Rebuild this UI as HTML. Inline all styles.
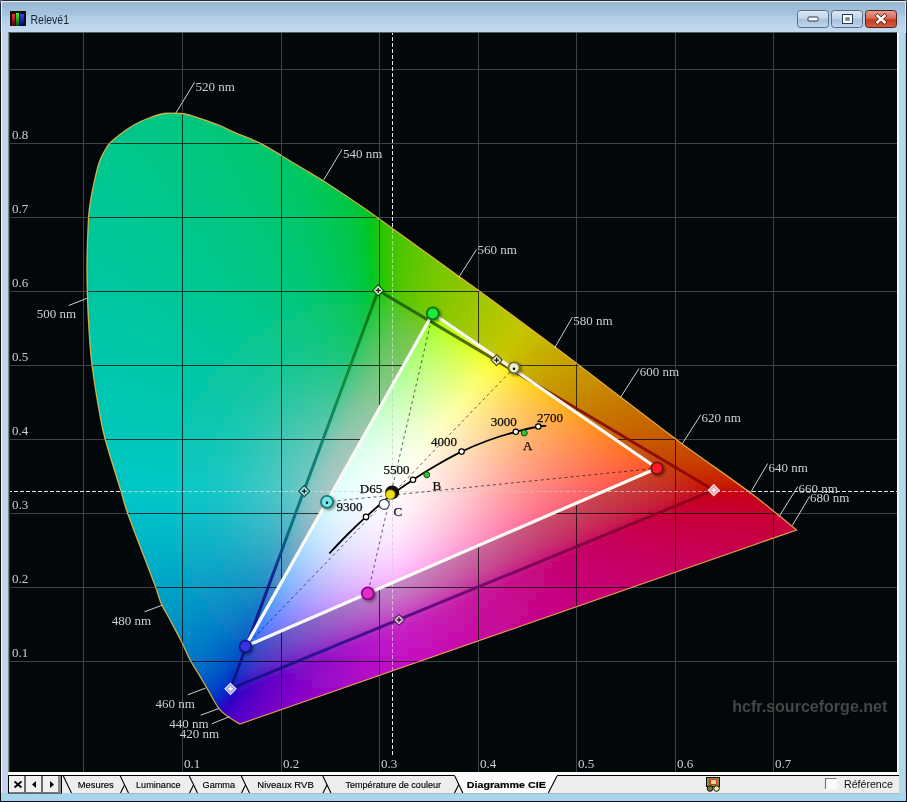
<!DOCTYPE html>
<html><head><meta charset="utf-8"><style>
html,body{margin:0;padding:0;width:907px;height:802px;overflow:hidden;background:#b8d4ea}
svg{display:block;will-change:transform}
</style></head><body>
<svg width="907" height="802" viewBox="0 0 907 802">
<defs>
<clipPath id="hs"><path d="M240.0 724.0C238.2 722.9 232.9 720.1 229.4 717.5C225.9 714.9 222.5 713.1 218.8 708.3C215.1 703.5 210.4 694.1 207.2 688.6C203.9 683.1 202.1 679.8 199.3 675.1C196.5 670.4 193.4 666.1 190.4 660.5C187.4 654.9 184.8 648.2 181.4 641.5C178.0 634.8 173.6 626.6 170.2 620.2C166.8 613.9 163.6 608.9 161.2 603.4C158.8 597.9 158.2 594.3 155.6 587.1C152.9 579.9 150.0 572.4 145.3 560.0C140.6 547.6 131.6 524.6 127.5 513.0C123.4 501.4 124.5 502.9 120.8 490.6C117.1 478.3 108.7 452.4 105.1 439.0C101.5 425.6 101.2 422.3 99.0 410.0C96.8 397.7 93.7 378.3 92.0 365.0C90.3 351.7 89.8 342.2 89.0 330.0C88.2 317.8 87.6 303.7 87.3 292.0C87.0 280.3 86.8 272.0 87.0 260.0C87.2 248.0 87.9 229.3 88.4 220.0C88.9 210.7 89.1 210.2 90.0 204.0C90.9 197.8 92.5 189.6 94.0 182.8C95.5 176.0 97.3 168.1 99.0 163.0C100.7 157.9 102.2 155.3 104.0 152.0C105.8 148.7 107.0 146.2 110.0 143.0C113.0 139.8 117.9 136.0 121.9 133.0C125.9 130.0 129.4 127.5 133.9 125.0C138.4 122.5 143.8 119.9 148.8 118.0C153.8 116.1 159.8 114.3 163.8 113.5C167.8 112.7 169.5 113.1 173.0 113.2C176.5 113.3 180.8 113.2 185.0 114.0C189.2 114.8 192.8 116.1 198.1 117.8C203.4 119.5 210.7 121.9 216.9 124.4C223.2 126.9 228.4 129.7 235.6 132.8C242.8 135.9 252.2 139.2 260.0 143.1C267.8 147.0 275.6 152.1 282.5 156.2C289.4 160.3 294.5 163.4 301.2 167.5C307.9 171.6 316.3 176.5 322.8 180.6C329.3 184.7 330.7 185.5 340.0 191.8C349.3 198.1 359.0 204.4 378.8 218.5C398.6 232.6 442.3 264.5 458.8 276.4C475.3 288.3 462.0 278.2 478.0 290.0C494.0 301.8 531.2 329.2 555.0 347.0C578.8 364.8 599.3 380.9 620.5 397.0C641.7 413.1 660.1 427.6 682.0 443.7C703.9 459.8 732.6 479.4 751.7 493.8C770.8 508.2 789.0 524.0 796.5 530.0Z"/></clipPath>
<clipPath id="tri"><path d="M432.8 313.5L657.0 468.2L245.4 646.4Z"/></clipPath>
<filter id="bl" x="-5%" y="-5%" width="110%" height="110%"><feGaussianBlur stdDeviation="5"/></filter>
<filter id="sh" x="-50%" y="-50%" width="200%" height="200%"><feGaussianBlur stdDeviation="1.5"/></filter>
<linearGradient id="tbg" x1="0" y1="0" x2="0" y2="1"><stop offset="0.1" stop-color="#98b8d4"/><stop offset="0.45" stop-color="#a6c4e0"/><stop offset="0.5" stop-color="#b0cce6"/><stop offset="0.9" stop-color="#c2d8ee"/></linearGradient>
<linearGradient id="bb" x1="0" y1="0" x2="0" y2="1"><stop offset="0" stop-color="#dde8f4"/><stop offset="0.45" stop-color="#c4d6ea"/><stop offset="0.55" stop-color="#a8c0dc"/><stop offset="1" stop-color="#c0d8ee"/></linearGradient>
<linearGradient id="rb" x1="0" y1="0" x2="0" y2="1"><stop offset="0" stop-color="#eaa090"/><stop offset="0.45" stop-color="#d86a58"/><stop offset="0.55" stop-color="#c23a22"/><stop offset="1" stop-color="#d86040"/></linearGradient>
<linearGradient id="ir" x1="0" y1="0" x2="0" y2="1"><stop offset="0" stop-color="#ff3030"/><stop offset="1" stop-color="#500000"/></linearGradient>
<linearGradient id="ig" x1="0" y1="0" x2="0" y2="1"><stop offset="0" stop-color="#30ff30"/><stop offset="1" stop-color="#005000"/></linearGradient>
<linearGradient id="ib" x1="0" y1="0" x2="0" y2="1"><stop offset="0" stop-color="#4040ff"/><stop offset="1" stop-color="#000060"/></linearGradient>
<linearGradient id="lgr" gradientUnits="userSpaceOnUse" x1="378.2" y1="290.4" x2="713.8" y2="490.2"><stop offset="0" stop-color="#0a6a0a"/><stop offset="0.3" stop-color="#4a5a00"/><stop offset="0.5" stop-color="#801800"/><stop offset="0.7" stop-color="#8a0808"/><stop offset="1" stop-color="#900010"/></linearGradient><linearGradient id="lbg" gradientUnits="userSpaceOnUse" x1="230.5" y1="688.8" x2="378.2" y2="290.4"><stop offset="0" stop-color="#0e0e84"/><stop offset="0.28" stop-color="#14148e"/><stop offset="0.4" stop-color="#006a7a"/><stop offset="0.6" stop-color="#087a70"/><stop offset="0.78" stop-color="#0a8a30"/><stop offset="1" stop-color="#0a6a0a"/></linearGradient><linearGradient id="lrb" gradientUnits="userSpaceOnUse" x1="713.8" y1="490.2" x2="230.5" y2="688.8"><stop offset="0" stop-color="#900010"/><stop offset="0.5" stop-color="#700070"/><stop offset="0.8" stop-color="#24108a"/><stop offset="1" stop-color="#0e0e84"/></linearGradient>
</defs>
<rect x="0" y="0" width="907" height="33" fill="url(#tbg)"/>
<rect x="0" y="0" width="907" height="1" fill="#1c2834"/>
<rect x="0" y="1" width="907" height="1" fill="#e6f2fa"/>
<rect x="0" y="2" width="907" height="1" fill="#a4b8c8"/>
<rect x="0" y="3" width="907" height="1" fill="#9cb6cc"/>
<rect x="10" y="32" width="887" height="1" fill="#56606a"/>
<rect x="0" y="0" width="1" height="802" fill="#1a2838"/><rect x="1" y="1" width="1" height="32" fill="#e8f4fc"/><rect x="906" y="0" width="1" height="802" fill="#1a2838"/><rect x="905" y="1" width="1" height="32" fill="#dceaf6"/>
<rect x="0" y="32" width="1" height="769" fill="#0c1014"/>
<rect x="1" y="32" width="1" height="769" fill="#eef8f8"/>
<rect x="2" y="32" width="1" height="769" fill="#c8d4e0"/>
<rect x="3" y="32" width="1" height="769" fill="#c8d4e0"/>
<rect x="4" y="32" width="1" height="769" fill="#c4d4f0"/>
<rect x="5" y="32" width="1" height="769" fill="#c4d4f0"/>
<rect x="6" y="32" width="1" height="769" fill="#c4d4f0"/>
<rect x="7" y="32" width="1" height="769" fill="#c0d0ea"/>
<rect x="8" y="32" width="1" height="769" fill="#7a8a8a"/>
<rect x="9" y="32" width="1" height="769" fill="#2a3434"/>
<rect x="897" y="33" width="1" height="768" fill="#f4fcfc"/>
<rect x="898" y="33" width="1" height="768" fill="#e8f4f8"/>
<rect x="899" y="33" width="1" height="768" fill="#c4d4e0"/>
<rect x="900" y="33" width="1" height="768" fill="#b4d8ec"/>
<rect x="901" y="33" width="1" height="768" fill="#b4d8ec"/>
<rect x="902" y="33" width="1" height="768" fill="#b4d8ec"/>
<rect x="903" y="33" width="1" height="768" fill="#b4d8ec"/>
<rect x="904" y="33" width="1" height="768" fill="#b4d8ec"/>
<rect x="905" y="33" width="1" height="768" fill="#9cc0d8"/>
<rect x="906" y="33" width="1" height="768" fill="#000820"/>
<rect x="1" y="793" width="905" height="8" fill="#a8d4ec"/>
<rect x="0" y="801" width="907" height="1" fill="#0c1420"/>
<path d="M0 0H5Q0 0 0 5Z" fill="#5a6470"/><path d="M907 0H902Q907 0 907 5Z" fill="#5a6470"/>
<rect x="10" y="11" width="16" height="15" fill="#101010"/>
<rect x="12" y="14" width="3" height="12" fill="url(#ir)"/><rect x="16" y="13" width="3" height="13" fill="url(#ig)"/><rect x="20" y="14" width="4" height="12" fill="url(#ib)"/>
<text x="30.5" y="24" font-family="Liberation Sans" font-size="12" fill="#1a2430" textLength="38.5" lengthAdjust="spacingAndGlyphs">Relevé1</text>
<rect x="797.5" y="10.5" width="31" height="17" rx="3" fill="url(#bb)" stroke="#5a6c84" stroke-width="1"/>
<rect x="831.5" y="10.5" width="31" height="17" rx="3" fill="url(#bb)" stroke="#5a6c84" stroke-width="1"/>
<rect x="865.5" y="10.5" width="31" height="17" rx="3" fill="url(#rb)" stroke="#4a2420" stroke-width="1"/>
<rect x="808" y="17" width="10" height="4" rx="1" fill="#fff" stroke="#2a3a50" stroke-width="1"/>
<rect x="842.5" y="14.5" width="10" height="9" fill="none" stroke="#2a3a50" stroke-width="1"/><rect x="844" y="16" width="7" height="6" fill="none" stroke="#fff" stroke-width="2"/><rect x="845.5" y="17.5" width="4" height="3" fill="#6a7a90"/>
<path d="M876 14.5L886 23.5M886 14.5L876 23.5" stroke="#5a2018" stroke-width="4"/><path d="M876.5 15L885.5 23M885.5 15L876.5 23" stroke="#fff" stroke-width="2.4"/>
<rect x="10" y="33" width="887" height="739" fill="#02070a"/>
<rect x="83" y="33" width="1" height="739" fill="#3c4245"/>
<rect x="182" y="33" width="1" height="739" fill="#3c4245"/>
<rect x="281" y="33" width="1" height="739" fill="#3c4245"/>
<rect x="379" y="33" width="1" height="739" fill="#3c4245"/>
<rect x="478" y="33" width="1" height="739" fill="#3c4245"/>
<rect x="576" y="33" width="1" height="739" fill="#3c4245"/>
<rect x="675" y="33" width="1" height="739" fill="#3c4245"/>
<rect x="773" y="33" width="1" height="739" fill="#3c4245"/>
<rect x="10" y="661" width="887" height="1" fill="#3c4245"/>
<rect x="10" y="587" width="887" height="1" fill="#3c4245"/>
<rect x="10" y="513" width="887" height="1" fill="#3c4245"/>
<rect x="10" y="439" width="887" height="1" fill="#3c4245"/>
<rect x="10" y="365" width="887" height="1" fill="#3c4245"/>
<rect x="10" y="291" width="887" height="1" fill="#3c4245"/>
<rect x="10" y="217" width="887" height="1" fill="#3c4245"/>
<rect x="10" y="143" width="887" height="1" fill="#3c4245"/>
<rect x="10" y="69" width="887" height="1" fill="#3c4245"/>
<text x="732.3" y="711.5" font-family="Liberation Sans" font-size="16" fill="#464646" font-weight="bold" textLength="155" lengthAdjust="spacingAndGlyphs">hcfr.sourceforge.net</text>
<rect x="773" y="690" width="1" height="30" fill="#3c4245" fill-opacity="0.7"/>
<path d="M392.5 33V772M10 491.5H897" stroke="#e8e8e8" stroke-width="1" stroke-dasharray="4 2" stroke-dashoffset="2"/>
<g clip-path="url(#hs)"><g filter="url(#bl)"><g transform="translate(0 104)"><rect x="144" width="8" height="8" fill="#00c784"/><rect x="152" width="8" height="8" fill="#00c782"/><rect x="160" width="8" height="8" fill="#00c781"/><rect x="168" width="8" height="8" fill="#00c780"/><rect x="176" width="8" height="8" fill="#00c77e"/><rect x="184" width="8" height="8" fill="#00c77c"/><rect x="192" width="8" height="8" fill="#00c77b"/></g><g transform="translate(0 112)"><rect x="128" width="8" height="8" fill="#00c787"/><rect x="136" width="8" height="8" fill="#00c786"/><rect x="144" width="8" height="8" fill="#00c785"/><rect x="152" width="8" height="8" fill="#00c783"/><rect x="160" width="8" height="8" fill="#00c782"/><rect x="168" width="8" height="8" fill="#00c780"/><rect x="176" width="8" height="8" fill="#00c77f"/><rect x="184" width="8" height="8" fill="#00c77d"/><rect x="192" width="8" height="8" fill="#00c77c"/><rect x="200" width="8" height="8" fill="#00c77a"/><rect x="208" width="8" height="8" fill="#00c778"/><rect x="216" width="8" height="8" fill="#00c776"/></g><g transform="translate(0 120)"><rect x="120" width="8" height="8" fill="#00c789"/><rect x="128" width="8" height="8" fill="#00c788"/><rect x="136" width="8" height="8" fill="#00c787"/><rect x="144" width="8" height="8" fill="#00c785"/><rect x="152" width="8" height="8" fill="#00c784"/><rect x="160" width="8" height="8" fill="#00c783"/><rect x="168" width="8" height="8" fill="#00c781"/><rect x="176" width="8" height="8" fill="#00c780"/><rect x="184" width="8" height="8" fill="#00c77e"/><rect x="192" width="8" height="8" fill="#00c77d"/><rect x="200" width="8" height="8" fill="#00c77b"/><rect x="208" width="8" height="8" fill="#00c779"/><rect x="216" width="8" height="8" fill="#00c777"/><rect x="224" width="8" height="8" fill="#00c775"/><rect x="232" width="8" height="8" fill="#00c773"/></g><g transform="translate(0 128)"><rect x="104" width="8" height="8" fill="#00c78c"/><rect x="112" width="8" height="8" fill="#00c78b"/><rect x="120" width="8" height="8" fill="#00c78a"/><rect x="128" width="8" height="8" fill="#00c789"/><rect x="136" width="8" height="8" fill="#00c788"/><rect x="144" width="8" height="8" fill="#00c786"/><rect x="152" width="8" height="8" fill="#00c785"/><rect x="160" width="8" height="8" fill="#00c784"/><rect x="168" width="8" height="8" fill="#00c782"/><rect x="176" width="8" height="8" fill="#00c781"/><rect x="184" width="8" height="8" fill="#00c77f"/><rect x="192" width="8" height="8" fill="#00c77d"/><rect x="200" width="8" height="8" fill="#00c77c"/><rect x="208" width="8" height="8" fill="#00c77a"/><rect x="216" width="8" height="8" fill="#00c778"/><rect x="224" width="8" height="8" fill="#00c776"/><rect x="232" width="8" height="8" fill="#00c774"/><rect x="240" width="8" height="8" fill="#00c771"/><rect x="248" width="8" height="8" fill="#00c76f"/></g><g transform="translate(0 136)"><rect x="96" width="8" height="8" fill="#00c78e"/><rect x="104" width="8" height="8" fill="#00c78d"/><rect x="112" width="8" height="8" fill="#00c78c"/><rect x="120" width="8" height="8" fill="#00c78b"/><rect x="128" width="8" height="8" fill="#00c78a"/><rect x="136" width="8" height="8" fill="#00c788"/><rect x="144" width="8" height="8" fill="#00c787"/><rect x="152" width="8" height="8" fill="#00c786"/><rect x="160" width="8" height="8" fill="#00c785"/><rect x="168" width="8" height="8" fill="#00c783"/><rect x="176" width="8" height="8" fill="#00c782"/><rect x="184" width="8" height="8" fill="#00c780"/><rect x="192" width="8" height="8" fill="#00c77e"/><rect x="200" width="8" height="8" fill="#00c77d"/><rect x="208" width="8" height="8" fill="#00c77b"/><rect x="216" width="8" height="8" fill="#00c779"/><rect x="224" width="8" height="8" fill="#00c777"/><rect x="232" width="8" height="8" fill="#00c775"/><rect x="240" width="8" height="8" fill="#00c772"/><rect x="248" width="8" height="8" fill="#00c770"/><rect x="256" width="8" height="8" fill="#00c76d"/><rect x="264" width="8" height="8" fill="#00c76b"/></g><g transform="translate(0 144)"><rect x="96" width="8" height="8" fill="#00c78f"/><rect x="104" width="8" height="8" fill="#00c78e"/><rect x="112" width="8" height="8" fill="#00c78d"/><rect x="120" width="8" height="8" fill="#00c78c"/><rect x="128" width="8" height="8" fill="#00c78a"/><rect x="136" width="8" height="8" fill="#00c789"/><rect x="144" width="8" height="8" fill="#00c788"/><rect x="152" width="8" height="8" fill="#00c787"/><rect x="160" width="8" height="8" fill="#00c785"/><rect x="168" width="8" height="8" fill="#00c784"/><rect x="176" width="8" height="8" fill="#00c783"/><rect x="184" width="8" height="8" fill="#00c781"/><rect x="192" width="8" height="8" fill="#00c77f"/><rect x="200" width="8" height="8" fill="#00c77e"/><rect x="208" width="8" height="8" fill="#00c77c"/><rect x="216" width="8" height="8" fill="#00c77a"/><rect x="224" width="8" height="8" fill="#00c778"/><rect x="232" width="8" height="8" fill="#00c776"/><rect x="240" width="8" height="8" fill="#00c773"/><rect x="248" width="8" height="8" fill="#00c771"/><rect x="256" width="8" height="8" fill="#00c76e"/><rect x="264" width="8" height="8" fill="#00c76c"/><rect x="272" width="8" height="8" fill="#00c769"/><rect x="280" width="8" height="8" fill="#00c765"/></g><g transform="translate(0 152)"><rect x="88" width="8" height="8" fill="#00c791"/><rect x="96" width="8" height="8" fill="#00c790"/><rect x="104" width="8" height="8" fill="#00c78f"/><rect x="112" width="8" height="8" fill="#00c78e"/><rect x="120" width="8" height="8" fill="#00c78d"/><rect x="128" width="8" height="8" fill="#00c78b"/><rect x="136" width="8" height="8" fill="#00c78a"/><rect x="144" width="8" height="8" fill="#00c789"/><rect x="152" width="8" height="8" fill="#00c788"/><rect x="160" width="8" height="8" fill="#00c786"/><rect x="168" width="8" height="8" fill="#00c785"/><rect x="176" width="8" height="8" fill="#00c783"/><rect x="184" width="8" height="8" fill="#00c782"/><rect x="192" width="8" height="8" fill="#00c780"/><rect x="200" width="8" height="8" fill="#00c77f"/><rect x="208" width="8" height="8" fill="#00c77d"/><rect x="216" width="8" height="8" fill="#00c77b"/><rect x="224" width="8" height="8" fill="#00c779"/><rect x="232" width="8" height="8" fill="#00c777"/><rect x="240" width="8" height="8" fill="#00c774"/><rect x="248" width="8" height="8" fill="#00c772"/><rect x="256" width="8" height="8" fill="#00c76f"/><rect x="264" width="8" height="8" fill="#00c76d"/><rect x="272" width="8" height="8" fill="#00c76a"/><rect x="280" width="8" height="8" fill="#00c766"/><rect x="288" width="8" height="8" fill="#00c763"/><rect x="296" width="8" height="8" fill="#00c75f"/></g><g transform="translate(0 160)"><rect x="88" width="8" height="8" fill="#00c791"/><rect x="96" width="8" height="8" fill="#00c791"/><rect x="104" width="8" height="8" fill="#00c790"/><rect x="112" width="8" height="8" fill="#00c78e"/><rect x="120" width="8" height="8" fill="#00c78d"/><rect x="128" width="8" height="8" fill="#00c78c"/><rect x="136" width="8" height="8" fill="#00c78b"/><rect x="144" width="8" height="8" fill="#00c78a"/><rect x="152" width="8" height="8" fill="#00c789"/><rect x="160" width="8" height="8" fill="#00c787"/><rect x="168" width="8" height="8" fill="#00c786"/><rect x="176" width="8" height="8" fill="#00c784"/><rect x="184" width="8" height="8" fill="#00c783"/><rect x="192" width="8" height="8" fill="#00c781"/><rect x="200" width="8" height="8" fill="#00c780"/><rect x="208" width="8" height="8" fill="#00c77e"/><rect x="216" width="8" height="8" fill="#00c77c"/><rect x="224" width="8" height="8" fill="#00c77a"/><rect x="232" width="8" height="8" fill="#00c778"/><rect x="240" width="8" height="8" fill="#00c775"/><rect x="248" width="8" height="8" fill="#00c773"/><rect x="256" width="8" height="8" fill="#00c770"/><rect x="264" width="8" height="8" fill="#00c76e"/><rect x="272" width="8" height="8" fill="#00c76b"/><rect x="280" width="8" height="8" fill="#00c768"/><rect x="288" width="8" height="8" fill="#00c764"/><rect x="296" width="8" height="8" fill="#00c760"/><rect x="304" width="8" height="8" fill="#00c75c"/></g><g transform="translate(0 168)"><rect x="88" width="8" height="8" fill="#00c792"/><rect x="96" width="8" height="8" fill="#00c791"/><rect x="104" width="8" height="8" fill="#00c790"/><rect x="112" width="8" height="8" fill="#00c78f"/><rect x="120" width="8" height="8" fill="#00c78e"/><rect x="128" width="8" height="8" fill="#00c78d"/><rect x="136" width="8" height="8" fill="#00c78c"/><rect x="144" width="8" height="8" fill="#00c78b"/><rect x="152" width="8" height="8" fill="#00c78a"/><rect x="160" width="8" height="8" fill="#00c788"/><rect x="168" width="8" height="8" fill="#00c787"/><rect x="176" width="8" height="8" fill="#00c785"/><rect x="184" width="8" height="8" fill="#00c784"/><rect x="192" width="8" height="8" fill="#00c782"/><rect x="200" width="8" height="8" fill="#00c781"/><rect x="208" width="8" height="8" fill="#00c77f"/><rect x="216" width="8" height="8" fill="#00c77d"/><rect x="224" width="8" height="8" fill="#00c77b"/><rect x="232" width="8" height="8" fill="#00c779"/><rect x="240" width="8" height="8" fill="#00c777"/><rect x="248" width="8" height="8" fill="#00c774"/><rect x="256" width="8" height="8" fill="#00c772"/><rect x="264" width="8" height="8" fill="#00c76f"/><rect x="272" width="8" height="8" fill="#00c76c"/><rect x="280" width="8" height="8" fill="#00c769"/><rect x="288" width="8" height="8" fill="#00c765"/><rect x="296" width="8" height="8" fill="#00c761"/><rect x="304" width="8" height="8" fill="#00c75d"/><rect x="312" width="8" height="8" fill="#00c758"/><rect x="320" width="8" height="8" fill="#00c753"/></g><g transform="translate(0 176)"><rect x="88" width="8" height="8" fill="#00c793"/><rect x="96" width="8" height="8" fill="#00c792"/><rect x="104" width="8" height="8" fill="#00c791"/><rect x="112" width="8" height="8" fill="#00c790"/><rect x="120" width="8" height="8" fill="#00c78f"/><rect x="128" width="8" height="8" fill="#00c78e"/><rect x="136" width="8" height="8" fill="#00c78d"/><rect x="144" width="8" height="8" fill="#00c78c"/><rect x="152" width="8" height="8" fill="#00c78b"/><rect x="160" width="8" height="8" fill="#00c789"/><rect x="168" width="8" height="8" fill="#00c788"/><rect x="176" width="8" height="8" fill="#00c786"/><rect x="184" width="8" height="8" fill="#00c785"/><rect x="192" width="8" height="8" fill="#00c783"/><rect x="200" width="8" height="8" fill="#00c782"/><rect x="208" width="8" height="8" fill="#00c780"/><rect x="216" width="8" height="8" fill="#00c77e"/><rect x="224" width="8" height="8" fill="#00c77c"/><rect x="232" width="8" height="8" fill="#00c77a"/><rect x="240" width="8" height="8" fill="#00c778"/><rect x="248" width="8" height="8" fill="#00c775"/><rect x="256" width="8" height="8" fill="#00c773"/><rect x="264" width="8" height="8" fill="#00c770"/><rect x="272" width="8" height="8" fill="#00c76d"/><rect x="280" width="8" height="8" fill="#00c76a"/><rect x="288" width="8" height="8" fill="#00c766"/><rect x="296" width="8" height="8" fill="#00c762"/><rect x="304" width="8" height="8" fill="#00c75e"/><rect x="312" width="8" height="8" fill="#00c75a"/><rect x="320" width="8" height="8" fill="#00c754"/><rect x="328" width="8" height="8" fill="#00c74e"/><rect x="336" width="8" height="8" fill="#00c747"/></g><g transform="translate(0 184)"><rect x="80" width="8" height="8" fill="#00c795"/><rect x="88" width="8" height="8" fill="#00c794"/><rect x="96" width="8" height="8" fill="#00c793"/><rect x="104" width="8" height="8" fill="#00c792"/><rect x="112" width="8" height="8" fill="#00c791"/><rect x="120" width="8" height="8" fill="#00c790"/><rect x="128" width="8" height="8" fill="#00c78f"/><rect x="136" width="8" height="8" fill="#00c78e"/><rect x="144" width="8" height="8" fill="#00c78d"/><rect x="152" width="8" height="8" fill="#00c78b"/><rect x="160" width="8" height="8" fill="#00c78a"/><rect x="168" width="8" height="8" fill="#00c789"/><rect x="176" width="8" height="8" fill="#00c787"/><rect x="184" width="8" height="8" fill="#00c786"/><rect x="192" width="8" height="8" fill="#00c784"/><rect x="200" width="8" height="8" fill="#00c783"/><rect x="208" width="8" height="8" fill="#00c781"/><rect x="216" width="8" height="8" fill="#00c77f"/><rect x="224" width="8" height="8" fill="#00c77d"/><rect x="232" width="8" height="8" fill="#00c77b"/><rect x="240" width="8" height="8" fill="#00c779"/><rect x="248" width="8" height="8" fill="#00c776"/><rect x="256" width="8" height="8" fill="#00c774"/><rect x="264" width="8" height="8" fill="#00c771"/><rect x="272" width="8" height="8" fill="#00c76e"/><rect x="280" width="8" height="8" fill="#00c76b"/><rect x="288" width="8" height="8" fill="#00c767"/><rect x="296" width="8" height="8" fill="#00c764"/><rect x="304" width="8" height="8" fill="#00c75f"/><rect x="312" width="8" height="8" fill="#00c75b"/><rect x="320" width="8" height="8" fill="#00c755"/><rect x="328" width="8" height="8" fill="#00c74f"/><rect x="336" width="8" height="8" fill="#00c748"/><rect x="344" width="8" height="8" fill="#00c740"/></g><g transform="translate(0 192)"><rect x="80" width="8" height="8" fill="#00c796"/><rect x="88" width="8" height="8" fill="#00c795"/><rect x="96" width="8" height="8" fill="#00c794"/><rect x="104" width="8" height="8" fill="#00c793"/><rect x="112" width="8" height="8" fill="#00c792"/><rect x="120" width="8" height="8" fill="#00c791"/><rect x="128" width="8" height="8" fill="#00c790"/><rect x="136" width="8" height="8" fill="#00c78f"/><rect x="144" width="8" height="8" fill="#00c78e"/><rect x="152" width="8" height="8" fill="#00c78c"/><rect x="160" width="8" height="8" fill="#00c78b"/><rect x="168" width="8" height="8" fill="#00c78a"/><rect x="176" width="8" height="8" fill="#00c788"/><rect x="184" width="8" height="8" fill="#00c787"/><rect x="192" width="8" height="8" fill="#00c785"/><rect x="200" width="8" height="8" fill="#00c784"/><rect x="208" width="8" height="8" fill="#00c782"/><rect x="216" width="8" height="8" fill="#00c780"/><rect x="224" width="8" height="8" fill="#00c77e"/><rect x="232" width="8" height="8" fill="#00c77c"/><rect x="240" width="8" height="8" fill="#00c77a"/><rect x="248" width="8" height="8" fill="#00c778"/><rect x="256" width="8" height="8" fill="#00c775"/><rect x="264" width="8" height="8" fill="#00c772"/><rect x="272" width="8" height="8" fill="#00c76f"/><rect x="280" width="8" height="8" fill="#00c76c"/><rect x="288" width="8" height="8" fill="#00c769"/><rect x="296" width="8" height="8" fill="#00c765"/><rect x="304" width="8" height="8" fill="#00c761"/><rect x="312" width="8" height="8" fill="#00c75c"/><rect x="320" width="8" height="8" fill="#00c757"/><rect x="328" width="8" height="8" fill="#00c751"/><rect x="336" width="8" height="8" fill="#00c74a"/><rect x="344" width="8" height="8" fill="#00c741"/><rect x="352" width="8" height="8" fill="#00c737"/></g><g transform="translate(0 200)"><rect x="80" width="8" height="8" fill="#00c797"/><rect x="88" width="8" height="8" fill="#00c796"/><rect x="96" width="8" height="8" fill="#00c795"/><rect x="104" width="8" height="8" fill="#00c794"/><rect x="112" width="8" height="8" fill="#00c793"/><rect x="120" width="8" height="8" fill="#00c792"/><rect x="128" width="8" height="8" fill="#00c791"/><rect x="136" width="8" height="8" fill="#00c790"/><rect x="144" width="8" height="8" fill="#00c78f"/><rect x="152" width="8" height="8" fill="#00c78e"/><rect x="160" width="8" height="8" fill="#00c78c"/><rect x="168" width="8" height="8" fill="#00c78b"/><rect x="176" width="8" height="8" fill="#00c789"/><rect x="184" width="8" height="8" fill="#00c788"/><rect x="192" width="8" height="8" fill="#00c786"/><rect x="200" width="8" height="8" fill="#00c785"/><rect x="208" width="8" height="8" fill="#00c783"/><rect x="216" width="8" height="8" fill="#00c781"/><rect x="224" width="8" height="8" fill="#00c77f"/><rect x="232" width="8" height="8" fill="#00c77d"/><rect x="240" width="8" height="8" fill="#00c77b"/><rect x="248" width="8" height="8" fill="#00c779"/><rect x="256" width="8" height="8" fill="#00c776"/><rect x="264" width="8" height="8" fill="#00c773"/><rect x="272" width="8" height="8" fill="#00c771"/><rect x="280" width="8" height="8" fill="#00c76d"/><rect x="288" width="8" height="8" fill="#00c76a"/><rect x="296" width="8" height="8" fill="#00c766"/><rect x="304" width="8" height="8" fill="#00c762"/><rect x="312" width="8" height="8" fill="#00c75d"/><rect x="320" width="8" height="8" fill="#00c758"/><rect x="328" width="8" height="8" fill="#00c752"/><rect x="336" width="8" height="8" fill="#00c74b"/><rect x="344" width="8" height="8" fill="#00c743"/><rect x="352" width="8" height="8" fill="#00c738"/><rect x="360" width="8" height="8" fill="#00c72a"/><rect x="368" width="8" height="8" fill="#00c70d"/></g><g transform="translate(0 208)"><rect x="80" width="8" height="8" fill="#00c798"/><rect x="88" width="8" height="8" fill="#00c797"/><rect x="96" width="8" height="8" fill="#00c796"/><rect x="104" width="8" height="8" fill="#00c795"/><rect x="112" width="8" height="8" fill="#00c794"/><rect x="120" width="8" height="8" fill="#00c793"/><rect x="128" width="8" height="8" fill="#00c792"/><rect x="136" width="8" height="8" fill="#00c791"/><rect x="144" width="8" height="8" fill="#00c790"/><rect x="152" width="8" height="8" fill="#00c78f"/><rect x="160" width="8" height="8" fill="#00c78d"/><rect x="168" width="8" height="8" fill="#00c78c"/><rect x="176" width="8" height="8" fill="#00c78b"/><rect x="184" width="8" height="8" fill="#00c789"/><rect x="192" width="8" height="8" fill="#00c788"/><rect x="200" width="8" height="8" fill="#00c786"/><rect x="208" width="8" height="8" fill="#00c784"/><rect x="216" width="8" height="8" fill="#00c782"/><rect x="224" width="8" height="8" fill="#00c780"/><rect x="232" width="8" height="8" fill="#00c77e"/><rect x="240" width="8" height="8" fill="#00c77c"/><rect x="248" width="8" height="8" fill="#00c77a"/><rect x="256" width="8" height="8" fill="#00c777"/><rect x="264" width="8" height="8" fill="#00c775"/><rect x="272" width="8" height="8" fill="#00c772"/><rect x="280" width="8" height="8" fill="#00c76f"/><rect x="288" width="8" height="8" fill="#00c76b"/><rect x="296" width="8" height="8" fill="#00c767"/><rect x="304" width="8" height="8" fill="#00c763"/><rect x="312" width="8" height="8" fill="#00c75f"/><rect x="320" width="8" height="8" fill="#00c759"/><rect x="328" width="8" height="8" fill="#00c753"/><rect x="336" width="8" height="8" fill="#00c74d"/><rect x="344" width="8" height="8" fill="#00c744"/><rect x="352" width="8" height="8" fill="#00c73a"/><rect x="360" width="8" height="8" fill="#00c72b"/><rect x="368" width="8" height="8" fill="#00c710"/><rect x="376" width="8" height="8" fill="#23c700"/></g><g transform="translate(0 216)"><rect x="80" width="8" height="8" fill="#00c799"/><rect x="88" width="8" height="8" fill="#00c798"/><rect x="96" width="8" height="8" fill="#00c797"/><rect x="104" width="8" height="8" fill="#00c796"/><rect x="112" width="8" height="8" fill="#00c795"/><rect x="120" width="8" height="8" fill="#00c794"/><rect x="128" width="8" height="8" fill="#00c793"/><rect x="136" width="8" height="8" fill="#00c792"/><rect x="144" width="8" height="8" fill="#00c791"/><rect x="152" width="8" height="8" fill="#00c790"/><rect x="160" width="8" height="8" fill="#00c78e"/><rect x="168" width="8" height="8" fill="#00c78d"/><rect x="176" width="8" height="8" fill="#00c78c"/><rect x="184" width="8" height="8" fill="#00c78a"/><rect x="192" width="8" height="8" fill="#00c789"/><rect x="200" width="8" height="8" fill="#00c787"/><rect x="208" width="8" height="8" fill="#00c785"/><rect x="216" width="8" height="8" fill="#00c784"/><rect x="224" width="8" height="8" fill="#00c782"/><rect x="232" width="8" height="8" fill="#00c780"/><rect x="240" width="8" height="8" fill="#00c77d"/><rect x="248" width="8" height="8" fill="#00c77b"/><rect x="256" width="8" height="8" fill="#00c779"/><rect x="264" width="8" height="8" fill="#00c776"/><rect x="272" width="8" height="8" fill="#00c773"/><rect x="280" width="8" height="8" fill="#00c770"/><rect x="288" width="8" height="8" fill="#00c76d"/><rect x="296" width="8" height="8" fill="#00c769"/><rect x="304" width="8" height="8" fill="#00c765"/><rect x="312" width="8" height="8" fill="#00c760"/><rect x="320" width="8" height="8" fill="#00c75b"/><rect x="328" width="8" height="8" fill="#00c755"/><rect x="336" width="8" height="8" fill="#00c74e"/><rect x="344" width="8" height="8" fill="#00c746"/><rect x="352" width="8" height="8" fill="#00c73b"/><rect x="360" width="8" height="8" fill="#00c72d"/><rect x="368" width="8" height="8" fill="#00c714"/><rect x="376" width="8" height="8" fill="#22c700"/><rect x="384" width="8" height="8" fill="#35c700"/><rect x="392" width="8" height="8" fill="#43c700"/></g><g transform="translate(0 224)"><rect x="80" width="8" height="8" fill="#00c79a"/><rect x="88" width="8" height="8" fill="#00c799"/><rect x="96" width="8" height="8" fill="#00c798"/><rect x="104" width="8" height="8" fill="#00c797"/><rect x="112" width="8" height="8" fill="#00c796"/><rect x="120" width="8" height="8" fill="#00c795"/><rect x="128" width="8" height="8" fill="#00c794"/><rect x="136" width="8" height="8" fill="#00c793"/><rect x="144" width="8" height="8" fill="#00c792"/><rect x="152" width="8" height="8" fill="#00c791"/><rect x="160" width="8" height="8" fill="#00c78f"/><rect x="168" width="8" height="8" fill="#00c78e"/><rect x="176" width="8" height="8" fill="#00c78d"/><rect x="184" width="8" height="8" fill="#00c78b"/><rect x="192" width="8" height="8" fill="#00c78a"/><rect x="200" width="8" height="8" fill="#00c788"/><rect x="208" width="8" height="8" fill="#00c787"/><rect x="216" width="8" height="8" fill="#00c785"/><rect x="224" width="8" height="8" fill="#00c783"/><rect x="232" width="8" height="8" fill="#00c781"/><rect x="240" width="8" height="8" fill="#00c77f"/><rect x="248" width="8" height="8" fill="#00c77c"/><rect x="256" width="8" height="8" fill="#00c77a"/><rect x="264" width="8" height="8" fill="#00c777"/><rect x="272" width="8" height="8" fill="#00c774"/><rect x="280" width="8" height="8" fill="#00c771"/><rect x="288" width="8" height="8" fill="#00c76e"/><rect x="296" width="8" height="8" fill="#00c76a"/><rect x="304" width="8" height="8" fill="#00c766"/><rect x="312" width="8" height="8" fill="#00c761"/><rect x="320" width="8" height="8" fill="#00c75c"/><rect x="328" width="8" height="8" fill="#00c756"/><rect x="336" width="8" height="8" fill="#00c74f"/><rect x="344" width="8" height="8" fill="#00c747"/><rect x="352" width="8" height="8" fill="#00c73d"/><rect x="360" width="8" height="8" fill="#00c72f"/><rect x="368" width="8" height="8" fill="#00c717"/><rect x="376" width="8" height="8" fill="#21c700"/><rect x="384" width="8" height="8" fill="#35c700"/><rect x="392" width="8" height="8" fill="#43c700"/><rect x="400" width="8" height="8" fill="#4ec700"/></g><g transform="translate(0 232)"><rect x="80" width="8" height="8" fill="#00c79b"/><rect x="88" width="8" height="8" fill="#00c79a"/><rect x="96" width="8" height="8" fill="#00c799"/><rect x="104" width="8" height="8" fill="#00c798"/><rect x="112" width="8" height="8" fill="#00c797"/><rect x="120" width="8" height="8" fill="#00c796"/><rect x="128" width="8" height="8" fill="#00c795"/><rect x="136" width="8" height="8" fill="#00c794"/><rect x="144" width="8" height="8" fill="#00c793"/><rect x="152" width="8" height="8" fill="#00c792"/><rect x="160" width="8" height="8" fill="#00c791"/><rect x="168" width="8" height="8" fill="#00c78f"/><rect x="176" width="8" height="8" fill="#00c78e"/><rect x="184" width="8" height="8" fill="#00c78c"/><rect x="192" width="8" height="8" fill="#00c78b"/><rect x="200" width="8" height="8" fill="#00c789"/><rect x="208" width="8" height="8" fill="#00c788"/><rect x="216" width="8" height="8" fill="#00c786"/><rect x="224" width="8" height="8" fill="#00c784"/><rect x="232" width="8" height="8" fill="#00c782"/><rect x="240" width="8" height="8" fill="#00c780"/><rect x="248" width="8" height="8" fill="#00c77e"/><rect x="256" width="8" height="8" fill="#00c77b"/><rect x="264" width="8" height="8" fill="#00c779"/><rect x="272" width="8" height="8" fill="#00c776"/><rect x="280" width="8" height="8" fill="#00c773"/><rect x="288" width="8" height="8" fill="#00c76f"/><rect x="296" width="8" height="8" fill="#00c76c"/><rect x="304" width="8" height="8" fill="#00c767"/><rect x="312" width="8" height="8" fill="#00c763"/><rect x="320" width="8" height="8" fill="#00c75e"/><rect x="328" width="8" height="8" fill="#01c758"/><rect x="336" width="8" height="8" fill="#01c751"/><rect x="344" width="8" height="8" fill="#01c749"/><rect x="352" width="8" height="8" fill="#01c73f"/><rect x="360" width="8" height="8" fill="#01c731"/><rect x="368" width="8" height="8" fill="#01c71a"/><rect x="376" width="8" height="8" fill="#20c701"/><rect x="384" width="8" height="8" fill="#35c701"/><rect x="392" width="8" height="8" fill="#43c701"/><rect x="400" width="8" height="8" fill="#4fc701"/><rect x="408" width="8" height="8" fill="#58c700"/><rect x="416" width="8" height="8" fill="#61c700"/></g><g transform="translate(0 240)"><rect x="80" width="8" height="8" fill="#00c79c"/><rect x="88" width="8" height="8" fill="#00c79b"/><rect x="96" width="8" height="8" fill="#00c79a"/><rect x="104" width="8" height="8" fill="#00c799"/><rect x="112" width="8" height="8" fill="#00c798"/><rect x="120" width="8" height="8" fill="#00c797"/><rect x="128" width="8" height="8" fill="#00c796"/><rect x="136" width="8" height="8" fill="#00c795"/><rect x="144" width="8" height="8" fill="#00c794"/><rect x="152" width="8" height="8" fill="#00c793"/><rect x="160" width="8" height="8" fill="#00c792"/><rect x="168" width="8" height="8" fill="#00c790"/><rect x="176" width="8" height="8" fill="#00c78f"/><rect x="184" width="8" height="8" fill="#00c78e"/><rect x="192" width="8" height="8" fill="#00c78c"/><rect x="200" width="8" height="8" fill="#00c78b"/><rect x="208" width="8" height="8" fill="#00c789"/><rect x="216" width="8" height="8" fill="#00c787"/><rect x="224" width="8" height="8" fill="#00c785"/><rect x="232" width="8" height="8" fill="#00c783"/><rect x="240" width="8" height="8" fill="#00c781"/><rect x="248" width="8" height="8" fill="#00c77f"/><rect x="256" width="8" height="8" fill="#00c77d"/><rect x="264" width="8" height="8" fill="#00c77a"/><rect x="272" width="8" height="8" fill="#00c777"/><rect x="280" width="8" height="8" fill="#00c774"/><rect x="288" width="8" height="8" fill="#01c771"/><rect x="296" width="8" height="8" fill="#01c76d"/><rect x="304" width="8" height="8" fill="#01c769"/><rect x="312" width="8" height="8" fill="#01c764"/><rect x="320" width="8" height="8" fill="#01c75f"/><rect x="328" width="8" height="8" fill="#01c759"/><rect x="336" width="8" height="8" fill="#01c753"/><rect x="344" width="8" height="8" fill="#01c74b"/><rect x="352" width="8" height="8" fill="#01c740"/><rect x="360" width="8" height="8" fill="#01c733"/><rect x="368" width="8" height="8" fill="#01c71d"/><rect x="376" width="8" height="8" fill="#1ec701"/><rect x="384" width="8" height="8" fill="#35c701"/><rect x="392" width="8" height="8" fill="#44c701"/><rect x="400" width="8" height="8" fill="#4fc701"/><rect x="408" width="8" height="8" fill="#59c701"/><rect x="416" width="8" height="8" fill="#62c701"/><rect x="424" width="8" height="8" fill="#6ac701"/></g><g transform="translate(0 248)"><rect x="80" width="8" height="8" fill="#00c79d"/><rect x="88" width="8" height="8" fill="#00c79c"/><rect x="96" width="8" height="8" fill="#00c79b"/><rect x="104" width="8" height="8" fill="#00c79a"/><rect x="112" width="8" height="8" fill="#00c799"/><rect x="120" width="8" height="8" fill="#00c798"/><rect x="128" width="8" height="8" fill="#00c797"/><rect x="136" width="8" height="8" fill="#00c796"/><rect x="144" width="8" height="8" fill="#00c795"/><rect x="152" width="8" height="8" fill="#00c794"/><rect x="160" width="8" height="8" fill="#00c793"/><rect x="168" width="8" height="8" fill="#00c792"/><rect x="176" width="8" height="8" fill="#00c790"/><rect x="184" width="8" height="8" fill="#00c78f"/><rect x="192" width="8" height="8" fill="#00c78d"/><rect x="200" width="8" height="8" fill="#00c78c"/><rect x="208" width="8" height="8" fill="#00c78a"/><rect x="216" width="8" height="8" fill="#00c788"/><rect x="224" width="8" height="8" fill="#00c787"/><rect x="232" width="8" height="8" fill="#00c785"/><rect x="240" width="8" height="8" fill="#00c783"/><rect x="248" width="8" height="8" fill="#00c780"/><rect x="256" width="8" height="8" fill="#00c77e"/><rect x="264" width="8" height="8" fill="#00c77b"/><rect x="272" width="8" height="8" fill="#01c779"/><rect x="280" width="8" height="8" fill="#01c776"/><rect x="288" width="8" height="8" fill="#01c772"/><rect x="296" width="8" height="8" fill="#01c76f"/><rect x="304" width="8" height="8" fill="#01c76b"/><rect x="312" width="8" height="8" fill="#01c766"/><rect x="320" width="8" height="8" fill="#01c761"/><rect x="328" width="8" height="8" fill="#01c75b"/><rect x="336" width="8" height="8" fill="#01c754"/><rect x="344" width="8" height="8" fill="#01c74c"/><rect x="352" width="8" height="8" fill="#01c742"/><rect x="360" width="8" height="8" fill="#01c735"/><rect x="368" width="8" height="8" fill="#01c71f"/><rect x="376" width="8" height="8" fill="#1dc701"/><rect x="384" width="8" height="8" fill="#35c701"/><rect x="392" width="8" height="8" fill="#44c701"/><rect x="400" width="8" height="8" fill="#50c701"/><rect x="408" width="8" height="8" fill="#5ac701"/><rect x="416" width="8" height="8" fill="#63c701"/><rect x="424" width="8" height="8" fill="#6bc701"/><rect x="432" width="8" height="8" fill="#72c701"/></g><g transform="translate(0 256)"><rect x="80" width="8" height="8" fill="#00c79e"/><rect x="88" width="8" height="8" fill="#00c79d"/><rect x="96" width="8" height="8" fill="#00c79c"/><rect x="104" width="8" height="8" fill="#00c79b"/><rect x="112" width="8" height="8" fill="#00c79a"/><rect x="120" width="8" height="8" fill="#00c799"/><rect x="128" width="8" height="8" fill="#00c798"/><rect x="136" width="8" height="8" fill="#00c797"/><rect x="144" width="8" height="8" fill="#00c796"/><rect x="152" width="8" height="8" fill="#00c795"/><rect x="160" width="8" height="8" fill="#00c794"/><rect x="168" width="8" height="8" fill="#00c793"/><rect x="176" width="8" height="8" fill="#00c791"/><rect x="184" width="8" height="8" fill="#00c790"/><rect x="192" width="8" height="8" fill="#00c78f"/><rect x="200" width="8" height="8" fill="#00c78d"/><rect x="208" width="8" height="8" fill="#00c78c"/><rect x="216" width="8" height="8" fill="#00c78a"/><rect x="224" width="8" height="8" fill="#00c788"/><rect x="232" width="8" height="8" fill="#00c786"/><rect x="240" width="8" height="8" fill="#00c784"/><rect x="248" width="8" height="8" fill="#01c782"/><rect x="256" width="8" height="8" fill="#01c77f"/><rect x="264" width="8" height="8" fill="#01c77d"/><rect x="272" width="8" height="8" fill="#01c77a"/><rect x="280" width="8" height="8" fill="#01c777"/><rect x="288" width="8" height="8" fill="#01c774"/><rect x="296" width="8" height="8" fill="#01c770"/><rect x="304" width="8" height="8" fill="#01c76c"/><rect x="312" width="8" height="8" fill="#01c768"/><rect x="320" width="8" height="8" fill="#01c763"/><rect x="328" width="8" height="8" fill="#01c75d"/><rect x="336" width="8" height="8" fill="#01c756"/><rect x="344" width="8" height="8" fill="#01c74e"/><rect x="352" width="8" height="8" fill="#02c744"/><rect x="360" width="8" height="8" fill="#02c737"/><rect x="368" width="8" height="8" fill="#02c722"/><rect x="376" width="8" height="8" fill="#1cc702"/><rect x="384" width="8" height="8" fill="#35c701"/><rect x="392" width="8" height="8" fill="#45c701"/><rect x="400" width="8" height="8" fill="#51c701"/><rect x="408" width="8" height="8" fill="#5bc701"/><rect x="416" width="8" height="8" fill="#64c701"/><rect x="424" width="8" height="8" fill="#6cc701"/><rect x="432" width="8" height="8" fill="#74c701"/><rect x="440" width="8" height="8" fill="#7ac701"/><rect x="448" width="8" height="8" fill="#81c701"/></g><g transform="translate(0 264)"><rect x="80" width="8" height="8" fill="#00c79f"/><rect x="88" width="8" height="8" fill="#00c79e"/><rect x="96" width="8" height="8" fill="#00c79d"/><rect x="104" width="8" height="8" fill="#00c79c"/><rect x="112" width="8" height="8" fill="#00c79b"/><rect x="120" width="8" height="8" fill="#00c79a"/><rect x="128" width="8" height="8" fill="#00c79a"/><rect x="136" width="8" height="8" fill="#00c799"/><rect x="144" width="8" height="8" fill="#00c797"/><rect x="152" width="8" height="8" fill="#00c796"/><rect x="160" width="8" height="8" fill="#00c795"/><rect x="168" width="8" height="8" fill="#00c794"/><rect x="176" width="8" height="8" fill="#00c793"/><rect x="184" width="8" height="8" fill="#00c791"/><rect x="192" width="8" height="8" fill="#00c790"/><rect x="200" width="8" height="8" fill="#00c78e"/><rect x="208" width="8" height="8" fill="#00c78d"/><rect x="216" width="8" height="8" fill="#00c78b"/><rect x="224" width="8" height="8" fill="#00c789"/><rect x="232" width="8" height="8" fill="#00c787"/><rect x="240" width="8" height="8" fill="#01c785"/><rect x="248" width="8" height="8" fill="#01c783"/><rect x="256" width="8" height="8" fill="#01c781"/><rect x="264" width="8" height="8" fill="#01c77e"/><rect x="272" width="8" height="8" fill="#01c77c"/><rect x="280" width="8" height="8" fill="#01c779"/><rect x="288" width="8" height="8" fill="#01c775"/><rect x="296" width="8" height="8" fill="#01c772"/><rect x="304" width="8" height="8" fill="#02c76e"/><rect x="312" width="8" height="8" fill="#02c76a"/><rect x="320" width="8" height="8" fill="#02c765"/><rect x="328" width="8" height="8" fill="#02c75f"/><rect x="336" width="8" height="8" fill="#02c758"/><rect x="344" width="8" height="8" fill="#02c750"/><rect x="352" width="8" height="8" fill="#02c746"/><rect x="360" width="8" height="8" fill="#02c739"/><rect x="368" width="8" height="8" fill="#02c725"/><rect x="376" width="8" height="8" fill="#1ac702"/><rect x="384" width="8" height="8" fill="#35c702"/><rect x="392" width="8" height="8" fill="#45c702"/><rect x="400" width="8" height="8" fill="#52c702"/><rect x="408" width="8" height="8" fill="#5cc702"/><rect x="416" width="8" height="8" fill="#65c702"/><rect x="424" width="8" height="8" fill="#6ec702"/><rect x="432" width="8" height="8" fill="#75c701"/><rect x="440" width="8" height="8" fill="#7cc701"/><rect x="448" width="8" height="8" fill="#82c701"/><rect x="456" width="8" height="8" fill="#88c701"/></g><g transform="translate(0 272)"><rect x="80" width="8" height="8" fill="#00c7a0"/><rect x="88" width="8" height="8" fill="#00c79f"/><rect x="96" width="8" height="8" fill="#00c79e"/><rect x="104" width="8" height="8" fill="#00c79d"/><rect x="112" width="8" height="8" fill="#00c79d"/><rect x="120" width="8" height="8" fill="#00c79c"/><rect x="128" width="8" height="8" fill="#00c79b"/><rect x="136" width="8" height="8" fill="#00c79a"/><rect x="144" width="8" height="8" fill="#00c799"/><rect x="152" width="8" height="8" fill="#00c798"/><rect x="160" width="8" height="8" fill="#00c796"/><rect x="168" width="8" height="8" fill="#00c795"/><rect x="176" width="8" height="8" fill="#00c794"/><rect x="184" width="8" height="8" fill="#00c793"/><rect x="192" width="8" height="8" fill="#00c791"/><rect x="200" width="8" height="8" fill="#00c790"/><rect x="208" width="8" height="8" fill="#00c78e"/><rect x="216" width="8" height="8" fill="#00c78d"/><rect x="224" width="8" height="8" fill="#01c78b"/><rect x="232" width="8" height="8" fill="#01c789"/><rect x="240" width="8" height="8" fill="#01c787"/><rect x="248" width="8" height="8" fill="#01c785"/><rect x="256" width="8" height="8" fill="#01c782"/><rect x="264" width="8" height="8" fill="#01c780"/><rect x="272" width="8" height="8" fill="#01c77d"/><rect x="280" width="8" height="8" fill="#02c77a"/><rect x="288" width="8" height="8" fill="#02c777"/><rect x="296" width="8" height="8" fill="#02c774"/><rect x="304" width="8" height="8" fill="#02c770"/><rect x="312" width="8" height="8" fill="#02c76b"/><rect x="320" width="8" height="8" fill="#02c766"/><rect x="328" width="8" height="8" fill="#03c761"/><rect x="336" width="8" height="8" fill="#03c75a"/><rect x="344" width="8" height="8" fill="#03c752"/><rect x="352" width="8" height="8" fill="#03c749"/><rect x="360" width="8" height="8" fill="#03c73c"/><rect x="368" width="8" height="8" fill="#03c728"/><rect x="376" width="8" height="8" fill="#18c703"/><rect x="384" width="8" height="8" fill="#35c703"/><rect x="392" width="8" height="8" fill="#46c703"/><rect x="400" width="8" height="8" fill="#53c703"/><rect x="408" width="8" height="8" fill="#5ec702"/><rect x="416" width="8" height="8" fill="#67c702"/><rect x="424" width="8" height="8" fill="#6fc702"/><rect x="432" width="8" height="8" fill="#77c702"/><rect x="440" width="8" height="8" fill="#7ec702"/><rect x="448" width="8" height="8" fill="#84c702"/><rect x="456" width="8" height="8" fill="#8ac701"/><rect x="464" width="8" height="8" fill="#90c701"/></g><g transform="translate(0 280)"><rect x="80" width="8" height="8" fill="#00c7a1"/><rect x="88" width="8" height="8" fill="#00c7a0"/><rect x="96" width="8" height="8" fill="#00c79f"/><rect x="104" width="8" height="8" fill="#00c79f"/><rect x="112" width="8" height="8" fill="#00c79e"/><rect x="120" width="8" height="8" fill="#00c79d"/><rect x="128" width="8" height="8" fill="#00c79c"/><rect x="136" width="8" height="8" fill="#00c79b"/><rect x="144" width="8" height="8" fill="#00c79a"/><rect x="152" width="8" height="8" fill="#00c799"/><rect x="160" width="8" height="8" fill="#00c798"/><rect x="168" width="8" height="8" fill="#00c797"/><rect x="176" width="8" height="8" fill="#00c795"/><rect x="184" width="8" height="8" fill="#00c794"/><rect x="192" width="8" height="8" fill="#00c793"/><rect x="200" width="8" height="8" fill="#00c791"/><rect x="208" width="8" height="8" fill="#01c790"/><rect x="216" width="8" height="8" fill="#01c78e"/><rect x="224" width="8" height="8" fill="#01c78c"/><rect x="232" width="8" height="8" fill="#01c78a"/><rect x="240" width="8" height="8" fill="#01c788"/><rect x="248" width="8" height="8" fill="#01c786"/><rect x="256" width="8" height="8" fill="#01c784"/><rect x="264" width="8" height="8" fill="#02c782"/><rect x="272" width="8" height="8" fill="#02c77f"/><rect x="280" width="8" height="8" fill="#02c77c"/><rect x="288" width="8" height="8" fill="#02c779"/><rect x="296" width="8" height="8" fill="#03c776"/><rect x="304" width="8" height="8" fill="#03c772"/><rect x="312" width="8" height="8" fill="#03c76d"/><rect x="320" width="8" height="8" fill="#03c769"/><rect x="328" width="8" height="8" fill="#03c763"/><rect x="336" width="8" height="8" fill="#03c75c"/><rect x="344" width="8" height="8" fill="#04c755"/><rect x="352" width="8" height="8" fill="#04c74b"/><rect x="360" width="8" height="8" fill="#04c73e"/><rect x="368" width="8" height="8" fill="#04c72b"/><rect x="376" width="8" height="8" fill="#16c704"/><rect x="384" width="8" height="8" fill="#36c704"/><rect x="392" width="8" height="8" fill="#47c703"/><rect x="400" width="8" height="8" fill="#54c703"/><rect x="408" width="8" height="8" fill="#5fc703"/><rect x="416" width="8" height="8" fill="#68c703"/><rect x="424" width="8" height="8" fill="#71c703"/><rect x="432" width="8" height="8" fill="#79c703"/><rect x="440" width="8" height="8" fill="#80c702"/><rect x="448" width="8" height="8" fill="#86c702"/><rect x="456" width="8" height="8" fill="#8cc702"/><rect x="464" width="8" height="8" fill="#92c702"/><rect x="472" width="8" height="8" fill="#98c701"/><rect x="480" width="8" height="8" fill="#9dc701"/></g><g transform="translate(0 288)"><rect x="80" width="8" height="8" fill="#00c7a2"/><rect x="88" width="8" height="8" fill="#00c7a1"/><rect x="96" width="8" height="8" fill="#00c7a0"/><rect x="104" width="8" height="8" fill="#00c7a0"/><rect x="112" width="8" height="8" fill="#00c79f"/><rect x="120" width="8" height="8" fill="#00c79e"/><rect x="128" width="8" height="8" fill="#00c79d"/><rect x="136" width="8" height="8" fill="#00c79c"/><rect x="144" width="8" height="8" fill="#00c79b"/><rect x="152" width="8" height="8" fill="#00c79a"/><rect x="160" width="8" height="8" fill="#00c799"/><rect x="168" width="8" height="8" fill="#00c798"/><rect x="176" width="8" height="8" fill="#00c797"/><rect x="184" width="8" height="8" fill="#00c795"/><rect x="192" width="8" height="8" fill="#00c794"/><rect x="200" width="8" height="8" fill="#01c793"/><rect x="208" width="8" height="8" fill="#01c791"/><rect x="216" width="8" height="8" fill="#01c78f"/><rect x="224" width="8" height="8" fill="#01c78e"/><rect x="232" width="8" height="8" fill="#01c78c"/><rect x="240" width="8" height="8" fill="#01c78a"/><rect x="248" width="8" height="8" fill="#02c788"/><rect x="256" width="8" height="8" fill="#02c786"/><rect x="264" width="8" height="8" fill="#02c783"/><rect x="272" width="8" height="8" fill="#02c781"/><rect x="280" width="8" height="8" fill="#03c77e"/><rect x="288" width="8" height="8" fill="#03c77b"/><rect x="296" width="8" height="8" fill="#03c778"/><rect x="304" width="8" height="8" fill="#04c774"/><rect x="312" width="8" height="8" fill="#04c770"/><rect x="320" width="8" height="8" fill="#04c76b"/><rect x="328" width="8" height="8" fill="#04c765"/><rect x="336" width="8" height="8" fill="#05c75f"/><rect x="344" width="8" height="8" fill="#05c757"/><rect x="352" width="8" height="8" fill="#05c74e"/><rect x="360" width="8" height="8" fill="#05c741"/><rect x="368" width="8" height="8" fill="#05c72e"/><rect x="376" width="8" height="8" fill="#15c706"/><rect x="384" width="8" height="8" fill="#36c705"/><rect x="392" width="8" height="8" fill="#48c705"/><rect x="400" width="8" height="8" fill="#56c704"/><rect x="408" width="8" height="8" fill="#61c704"/><rect x="416" width="8" height="8" fill="#6ac704"/><rect x="424" width="8" height="8" fill="#73c704"/><rect x="432" width="8" height="8" fill="#7bc703"/><rect x="440" width="8" height="8" fill="#82c703"/><rect x="448" width="8" height="8" fill="#88c703"/><rect x="456" width="8" height="8" fill="#8fc702"/><rect x="464" width="8" height="8" fill="#95c702"/><rect x="472" width="8" height="8" fill="#9ac702"/><rect x="480" width="8" height="8" fill="#a0c702"/><rect x="488" width="8" height="8" fill="#a5c701"/></g><g transform="translate(0 296)"><rect x="80" width="8" height="8" fill="#00c7a3"/><rect x="88" width="8" height="8" fill="#00c7a2"/><rect x="96" width="8" height="8" fill="#00c7a2"/><rect x="104" width="8" height="8" fill="#00c7a1"/><rect x="112" width="8" height="8" fill="#00c7a0"/><rect x="120" width="8" height="8" fill="#00c79f"/><rect x="128" width="8" height="8" fill="#00c79e"/><rect x="136" width="8" height="8" fill="#00c79d"/><rect x="144" width="8" height="8" fill="#00c79c"/><rect x="152" width="8" height="8" fill="#00c79b"/><rect x="160" width="8" height="8" fill="#00c79a"/><rect x="168" width="8" height="8" fill="#00c799"/><rect x="176" width="8" height="8" fill="#00c798"/><rect x="184" width="8" height="8" fill="#00c797"/><rect x="192" width="8" height="8" fill="#01c795"/><rect x="200" width="8" height="8" fill="#01c794"/><rect x="208" width="8" height="8" fill="#01c793"/><rect x="216" width="8" height="8" fill="#01c791"/><rect x="224" width="8" height="8" fill="#01c78f"/><rect x="232" width="8" height="8" fill="#02c78e"/><rect x="240" width="8" height="8" fill="#02c78c"/><rect x="248" width="8" height="8" fill="#02c78a"/><rect x="256" width="8" height="8" fill="#02c788"/><rect x="264" width="8" height="8" fill="#03c785"/><rect x="272" width="8" height="8" fill="#03c783"/><rect x="280" width="8" height="8" fill="#04c780"/><rect x="288" width="8" height="8" fill="#04c77d"/><rect x="296" width="8" height="8" fill="#04c77a"/><rect x="304" width="8" height="8" fill="#05c776"/><rect x="312" width="8" height="8" fill="#05c772"/><rect x="320" width="8" height="8" fill="#05c76d"/><rect x="328" width="8" height="8" fill="#06c768"/><rect x="336" width="8" height="8" fill="#06c761"/><rect x="344" width="8" height="8" fill="#06c75a"/><rect x="352" width="8" height="8" fill="#06c750"/><rect x="360" width="8" height="8" fill="#06c744"/><rect x="368" width="8" height="8" fill="#06c732"/><rect x="376" width="8" height="8" fill="#25c721"/><rect x="384" width="8" height="8" fill="#3ac716"/><rect x="392" width="8" height="8" fill="#49c706"/><rect x="400" width="8" height="8" fill="#57c706"/><rect x="408" width="8" height="8" fill="#62c705"/><rect x="416" width="8" height="8" fill="#6cc705"/><rect x="424" width="8" height="8" fill="#75c705"/><rect x="432" width="8" height="8" fill="#7dc704"/><rect x="440" width="8" height="8" fill="#84c704"/><rect x="448" width="8" height="8" fill="#8bc704"/><rect x="456" width="8" height="8" fill="#91c703"/><rect x="464" width="8" height="8" fill="#97c703"/><rect x="472" width="8" height="8" fill="#9dc702"/><rect x="480" width="8" height="8" fill="#a2c702"/><rect x="488" width="8" height="8" fill="#a8c702"/><rect x="496" width="8" height="8" fill="#adc702"/><rect x="504" width="8" height="8" fill="#b2c701"/></g><g transform="translate(0 304)"><rect x="80" width="8" height="8" fill="#00c7a4"/><rect x="88" width="8" height="8" fill="#00c7a4"/><rect x="96" width="8" height="8" fill="#00c7a3"/><rect x="104" width="8" height="8" fill="#00c7a2"/><rect x="112" width="8" height="8" fill="#00c7a1"/><rect x="120" width="8" height="8" fill="#00c7a0"/><rect x="128" width="8" height="8" fill="#00c7a0"/><rect x="136" width="8" height="8" fill="#00c79f"/><rect x="144" width="8" height="8" fill="#00c79e"/><rect x="152" width="8" height="8" fill="#00c79d"/><rect x="160" width="8" height="8" fill="#00c79c"/><rect x="168" width="8" height="8" fill="#00c79b"/><rect x="176" width="8" height="8" fill="#00c799"/><rect x="184" width="8" height="8" fill="#01c798"/><rect x="192" width="8" height="8" fill="#01c797"/><rect x="200" width="8" height="8" fill="#01c796"/><rect x="208" width="8" height="8" fill="#01c794"/><rect x="216" width="8" height="8" fill="#01c793"/><rect x="224" width="8" height="8" fill="#02c791"/><rect x="232" width="8" height="8" fill="#02c78f"/><rect x="240" width="8" height="8" fill="#02c78d"/><rect x="248" width="8" height="8" fill="#03c78c"/><rect x="256" width="8" height="8" fill="#03c789"/><rect x="264" width="8" height="8" fill="#04c787"/><rect x="272" width="8" height="8" fill="#04c785"/><rect x="280" width="8" height="8" fill="#05c782"/><rect x="288" width="8" height="8" fill="#05c77f"/><rect x="296" width="8" height="8" fill="#06c77c"/><rect x="304" width="8" height="8" fill="#06c778"/><rect x="312" width="8" height="8" fill="#07c774"/><rect x="320" width="8" height="8" fill="#07c770"/><rect x="328" width="8" height="8" fill="#07c76a"/><rect x="336" width="8" height="8" fill="#08c764"/><rect x="344" width="8" height="8" fill="#08c75d"/><rect x="352" width="8" height="8" fill="#08c754"/><rect x="360" width="8" height="8" fill="#08c747"/><rect x="368" width="8" height="8" fill="#08c736"/><rect x="376" width="8" height="8" fill="#30c72f"/><rect x="384" width="8" height="8" fill="#42c729"/><rect x="392" width="8" height="8" fill="#4fc720"/><rect x="400" width="8" height="8" fill="#5ac712"/><rect x="408" width="8" height="8" fill="#64c707"/><rect x="416" width="8" height="8" fill="#6ec707"/><rect x="424" width="8" height="8" fill="#77c706"/><rect x="432" width="8" height="8" fill="#7fc706"/><rect x="440" width="8" height="8" fill="#86c705"/><rect x="448" width="8" height="8" fill="#8dc705"/><rect x="456" width="8" height="8" fill="#94c704"/><rect x="464" width="8" height="8" fill="#9ac704"/><rect x="472" width="8" height="8" fill="#a0c703"/><rect x="480" width="8" height="8" fill="#a5c703"/><rect x="488" width="8" height="8" fill="#abc702"/><rect x="496" width="8" height="8" fill="#b0c702"/><rect x="504" width="8" height="8" fill="#b5c702"/><rect x="512" width="8" height="8" fill="#bac701"/></g><g transform="translate(0 312)"><rect x="80" width="8" height="8" fill="#00c7a5"/><rect x="88" width="8" height="8" fill="#00c7a5"/><rect x="96" width="8" height="8" fill="#00c7a4"/><rect x="104" width="8" height="8" fill="#00c7a3"/><rect x="112" width="8" height="8" fill="#00c7a3"/><rect x="120" width="8" height="8" fill="#00c7a2"/><rect x="128" width="8" height="8" fill="#00c7a1"/><rect x="136" width="8" height="8" fill="#00c7a0"/><rect x="144" width="8" height="8" fill="#00c79f"/><rect x="152" width="8" height="8" fill="#00c79e"/><rect x="160" width="8" height="8" fill="#00c79d"/><rect x="168" width="8" height="8" fill="#00c79c"/><rect x="176" width="8" height="8" fill="#01c79b"/><rect x="184" width="8" height="8" fill="#01c79a"/><rect x="192" width="8" height="8" fill="#01c798"/><rect x="200" width="8" height="8" fill="#01c797"/><rect x="208" width="8" height="8" fill="#01c796"/><rect x="216" width="8" height="8" fill="#02c794"/><rect x="224" width="8" height="8" fill="#02c793"/><rect x="232" width="8" height="8" fill="#02c791"/><rect x="240" width="8" height="8" fill="#03c78f"/><rect x="248" width="8" height="8" fill="#03c78d"/><rect x="256" width="8" height="8" fill="#04c78b"/><rect x="264" width="8" height="8" fill="#05c789"/><rect x="272" width="8" height="8" fill="#05c787"/><rect x="280" width="8" height="8" fill="#06c784"/><rect x="288" width="8" height="8" fill="#06c781"/><rect x="296" width="8" height="8" fill="#07c77e"/><rect x="304" width="8" height="8" fill="#08c77b"/><rect x="312" width="8" height="8" fill="#08c777"/><rect x="320" width="8" height="8" fill="#09c772"/><rect x="328" width="8" height="8" fill="#09c76d"/><rect x="336" width="8" height="8" fill="#0ac767"/><rect x="344" width="8" height="8" fill="#0ac760"/><rect x="352" width="8" height="8" fill="#0ac757"/><rect x="360" width="8" height="8" fill="#0ac74b"/><rect x="368" width="8" height="8" fill="#20c73f"/><rect x="376" width="8" height="8" fill="#3ac73b"/><rect x="384" width="8" height="8" fill="#49c736"/><rect x="392" width="8" height="8" fill="#55c730"/><rect x="400" width="8" height="8" fill="#5fc728"/><rect x="408" width="8" height="8" fill="#69c71e"/><rect x="416" width="8" height="8" fill="#71c70b"/><rect x="424" width="8" height="8" fill="#79c708"/><rect x="432" width="8" height="8" fill="#82c707"/><rect x="440" width="8" height="8" fill="#89c706"/><rect x="448" width="8" height="8" fill="#90c706"/><rect x="456" width="8" height="8" fill="#96c705"/><rect x="464" width="8" height="8" fill="#9dc705"/><rect x="472" width="8" height="8" fill="#a3c704"/><rect x="480" width="8" height="8" fill="#a8c703"/><rect x="488" width="8" height="8" fill="#aec703"/><rect x="496" width="8" height="8" fill="#b3c702"/><rect x="504" width="8" height="8" fill="#b8c702"/><rect x="512" width="8" height="8" fill="#bdc702"/><rect x="520" width="8" height="8" fill="#c2c701"/></g><g transform="translate(0 320)"><rect x="80" width="8" height="8" fill="#00c7a7"/><rect x="88" width="8" height="8" fill="#00c7a6"/><rect x="96" width="8" height="8" fill="#00c7a5"/><rect x="104" width="8" height="8" fill="#00c7a5"/><rect x="112" width="8" height="8" fill="#00c7a4"/><rect x="120" width="8" height="8" fill="#00c7a3"/><rect x="128" width="8" height="8" fill="#00c7a2"/><rect x="136" width="8" height="8" fill="#00c7a1"/><rect x="144" width="8" height="8" fill="#00c7a0"/><rect x="152" width="8" height="8" fill="#00c79f"/><rect x="160" width="8" height="8" fill="#00c79e"/><rect x="168" width="8" height="8" fill="#01c79d"/><rect x="176" width="8" height="8" fill="#01c79c"/><rect x="184" width="8" height="8" fill="#01c79b"/><rect x="192" width="8" height="8" fill="#01c79a"/><rect x="200" width="8" height="8" fill="#01c799"/><rect x="208" width="8" height="8" fill="#02c797"/><rect x="216" width="8" height="8" fill="#02c796"/><rect x="224" width="8" height="8" fill="#03c794"/><rect x="232" width="8" height="8" fill="#03c793"/><rect x="240" width="8" height="8" fill="#04c791"/><rect x="248" width="8" height="8" fill="#04c78f"/><rect x="256" width="8" height="8" fill="#05c78d"/><rect x="264" width="8" height="8" fill="#06c78b"/><rect x="272" width="8" height="8" fill="#07c789"/><rect x="280" width="8" height="8" fill="#07c787"/><rect x="288" width="8" height="8" fill="#08c784"/><rect x="296" width="8" height="8" fill="#09c781"/><rect x="304" width="8" height="8" fill="#0ac77e"/><rect x="312" width="8" height="8" fill="#0bc77a"/><rect x="320" width="8" height="8" fill="#0bc775"/><rect x="328" width="8" height="8" fill="#0cc770"/><rect x="336" width="8" height="8" fill="#0cc76b"/><rect x="344" width="8" height="8" fill="#0dc763"/><rect x="352" width="8" height="8" fill="#0dc75b"/><rect x="360" width="8" height="8" fill="#0dc74f"/><rect x="368" width="8" height="8" fill="#2fc748"/><rect x="376" width="8" height="8" fill="#43c745"/><rect x="384" width="8" height="8" fill="#50c740"/><rect x="392" width="8" height="8" fill="#5cc73c"/><rect x="400" width="8" height="8" fill="#65c736"/><rect x="408" width="8" height="8" fill="#6ec72f"/><rect x="416" width="8" height="8" fill="#76c727"/><rect x="424" width="8" height="8" fill="#7dc71b"/><rect x="432" width="8" height="8" fill="#84c709"/><rect x="440" width="8" height="8" fill="#8cc708"/><rect x="448" width="8" height="8" fill="#93c707"/><rect x="456" width="8" height="8" fill="#99c707"/><rect x="464" width="8" height="8" fill="#a0c706"/><rect x="472" width="8" height="8" fill="#a6c705"/><rect x="480" width="8" height="8" fill="#abc704"/><rect x="488" width="8" height="8" fill="#b1c704"/><rect x="496" width="8" height="8" fill="#b6c703"/><rect x="504" width="8" height="8" fill="#bcc703"/><rect x="512" width="8" height="8" fill="#c1c702"/><rect x="520" width="8" height="8" fill="#c6c702"/><rect x="528" width="8" height="8" fill="#c7c401"/><rect x="536" width="8" height="8" fill="#c7bf01"/></g><g transform="translate(0 328)"><rect x="80" width="8" height="8" fill="#00c7a8"/><rect x="88" width="8" height="8" fill="#00c7a7"/><rect x="96" width="8" height="8" fill="#00c7a7"/><rect x="104" width="8" height="8" fill="#00c7a6"/><rect x="112" width="8" height="8" fill="#00c7a5"/><rect x="120" width="8" height="8" fill="#00c7a4"/><rect x="128" width="8" height="8" fill="#00c7a4"/><rect x="136" width="8" height="8" fill="#00c7a3"/><rect x="144" width="8" height="8" fill="#00c7a2"/><rect x="152" width="8" height="8" fill="#00c7a1"/><rect x="160" width="8" height="8" fill="#01c7a0"/><rect x="168" width="8" height="8" fill="#01c79f"/><rect x="176" width="8" height="8" fill="#01c79e"/><rect x="184" width="8" height="8" fill="#01c79d"/><rect x="192" width="8" height="8" fill="#01c79c"/><rect x="200" width="8" height="8" fill="#02c79a"/><rect x="208" width="8" height="8" fill="#02c799"/><rect x="216" width="8" height="8" fill="#03c798"/><rect x="224" width="8" height="8" fill="#03c796"/><rect x="232" width="8" height="8" fill="#04c795"/><rect x="240" width="8" height="8" fill="#05c793"/><rect x="248" width="8" height="8" fill="#05c791"/><rect x="256" width="8" height="8" fill="#06c790"/><rect x="264" width="8" height="8" fill="#07c78e"/><rect x="272" width="8" height="8" fill="#08c78b"/><rect x="280" width="8" height="8" fill="#09c789"/><rect x="288" width="8" height="8" fill="#0ac786"/><rect x="296" width="8" height="8" fill="#0bc784"/><rect x="304" width="8" height="8" fill="#0cc780"/><rect x="312" width="8" height="8" fill="#0dc77d"/><rect x="320" width="8" height="8" fill="#0ec779"/><rect x="328" width="8" height="8" fill="#0fc774"/><rect x="336" width="8" height="8" fill="#0fc76e"/><rect x="344" width="8" height="8" fill="#10c767"/><rect x="352" width="8" height="8" fill="#10c75f"/><rect x="360" width="8" height="8" fill="#15c754"/><rect x="368" width="8" height="8" fill="#3ac751"/><rect x="376" width="8" height="8" fill="#4bc74e"/><rect x="384" width="8" height="8" fill="#58c74a"/><rect x="392" width="8" height="8" fill="#62c746"/><rect x="400" width="8" height="8" fill="#6bc742"/><rect x="408" width="8" height="8" fill="#73c73c"/><rect x="416" width="8" height="8" fill="#7bc736"/><rect x="424" width="8" height="8" fill="#82c72f"/><rect x="432" width="8" height="8" fill="#89c725"/><rect x="440" width="8" height="8" fill="#8fc716"/><rect x="448" width="8" height="8" fill="#96c709"/><rect x="456" width="8" height="8" fill="#9dc708"/><rect x="464" width="8" height="8" fill="#a3c707"/><rect x="472" width="8" height="8" fill="#a9c706"/><rect x="480" width="8" height="8" fill="#afc705"/><rect x="488" width="8" height="8" fill="#b5c705"/><rect x="496" width="8" height="8" fill="#bac704"/><rect x="504" width="8" height="8" fill="#bfc703"/><rect x="512" width="8" height="8" fill="#c4c703"/><rect x="520" width="8" height="8" fill="#c7c402"/><rect x="528" width="8" height="8" fill="#c7c002"/><rect x="536" width="8" height="8" fill="#c7bb01"/><rect x="544" width="8" height="8" fill="#c7b701"/></g><g transform="translate(0 336)"><rect x="80" width="8" height="8" fill="#00c7a9"/><rect x="88" width="8" height="8" fill="#00c7a8"/><rect x="96" width="8" height="8" fill="#00c7a8"/><rect x="104" width="8" height="8" fill="#00c7a7"/><rect x="112" width="8" height="8" fill="#00c7a6"/><rect x="120" width="8" height="8" fill="#00c7a6"/><rect x="128" width="8" height="8" fill="#00c7a5"/><rect x="136" width="8" height="8" fill="#00c7a4"/><rect x="144" width="8" height="8" fill="#00c7a3"/><rect x="152" width="8" height="8" fill="#01c7a2"/><rect x="160" width="8" height="8" fill="#01c7a1"/><rect x="168" width="8" height="8" fill="#01c7a0"/><rect x="176" width="8" height="8" fill="#01c79f"/><rect x="184" width="8" height="8" fill="#01c79e"/><rect x="192" width="8" height="8" fill="#02c79d"/><rect x="200" width="8" height="8" fill="#02c79c"/><rect x="208" width="8" height="8" fill="#03c79b"/><rect x="216" width="8" height="8" fill="#03c799"/><rect x="224" width="8" height="8" fill="#04c798"/><rect x="232" width="8" height="8" fill="#05c797"/><rect x="240" width="8" height="8" fill="#06c795"/><rect x="248" width="8" height="8" fill="#07c793"/><rect x="256" width="8" height="8" fill="#08c792"/><rect x="264" width="8" height="8" fill="#09c790"/><rect x="272" width="8" height="8" fill="#0ac78e"/><rect x="280" width="8" height="8" fill="#0bc78c"/><rect x="288" width="8" height="8" fill="#0dc789"/><rect x="296" width="8" height="8" fill="#0ec786"/><rect x="304" width="8" height="8" fill="#0fc783"/><rect x="312" width="8" height="8" fill="#10c780"/><rect x="320" width="8" height="8" fill="#11c77c"/><rect x="328" width="8" height="8" fill="#12c777"/><rect x="336" width="8" height="8" fill="#13c772"/><rect x="344" width="8" height="8" fill="#14c76b"/><rect x="352" width="8" height="8" fill="#14c763"/><rect x="360" width="8" height="8" fill="#2dc75c"/><rect x="368" width="8" height="8" fill="#45c75a"/><rect x="376" width="8" height="8" fill="#53c757"/><rect x="384" width="8" height="8" fill="#5fc754"/><rect x="392" width="8" height="8" fill="#68c750"/><rect x="400" width="8" height="8" fill="#71c74c"/><rect x="408" width="8" height="8" fill="#79c748"/><rect x="416" width="8" height="8" fill="#80c742"/><rect x="424" width="8" height="8" fill="#87c73d"/><rect x="432" width="8" height="8" fill="#8ec736"/><rect x="440" width="8" height="8" fill="#94c72e"/><rect x="448" width="8" height="8" fill="#9ac723"/><rect x="456" width="8" height="8" fill="#a0c70e"/><rect x="464" width="8" height="8" fill="#a6c709"/><rect x="472" width="8" height="8" fill="#adc708"/><rect x="480" width="8" height="8" fill="#b3c707"/><rect x="488" width="8" height="8" fill="#b8c706"/><rect x="496" width="8" height="8" fill="#bec705"/><rect x="504" width="8" height="8" fill="#c3c704"/><rect x="512" width="8" height="8" fill="#c7c503"/><rect x="520" width="8" height="8" fill="#c7c003"/><rect x="528" width="8" height="8" fill="#c7bc02"/><rect x="536" width="8" height="8" fill="#c7b802"/><rect x="544" width="8" height="8" fill="#c7b401"/><rect x="552" width="8" height="8" fill="#c7b001"/></g><g transform="translate(0 344)"><rect x="80" width="8" height="8" fill="#00c7aa"/><rect x="88" width="8" height="8" fill="#00c7aa"/><rect x="96" width="8" height="8" fill="#00c7a9"/><rect x="104" width="8" height="8" fill="#00c7a8"/><rect x="112" width="8" height="8" fill="#00c7a8"/><rect x="120" width="8" height="8" fill="#00c7a7"/><rect x="128" width="8" height="8" fill="#00c7a6"/><rect x="136" width="8" height="8" fill="#00c7a5"/><rect x="144" width="8" height="8" fill="#00c7a5"/><rect x="152" width="8" height="8" fill="#01c7a4"/><rect x="160" width="8" height="8" fill="#01c7a3"/><rect x="168" width="8" height="8" fill="#01c7a2"/><rect x="176" width="8" height="8" fill="#01c7a1"/><rect x="184" width="8" height="8" fill="#02c7a0"/><rect x="192" width="8" height="8" fill="#02c79f"/><rect x="200" width="8" height="8" fill="#03c79e"/><rect x="208" width="8" height="8" fill="#03c79d"/><rect x="216" width="8" height="8" fill="#04c79b"/><rect x="224" width="8" height="8" fill="#05c79a"/><rect x="232" width="8" height="8" fill="#06c799"/><rect x="240" width="8" height="8" fill="#07c797"/><rect x="248" width="8" height="8" fill="#08c796"/><rect x="256" width="8" height="8" fill="#09c794"/><rect x="264" width="8" height="8" fill="#0bc792"/><rect x="272" width="8" height="8" fill="#0cc790"/><rect x="280" width="8" height="8" fill="#0ec78e"/><rect x="288" width="8" height="8" fill="#0fc78c"/><rect x="296" width="8" height="8" fill="#11c78a"/><rect x="304" width="8" height="8" fill="#12c787"/><rect x="312" width="8" height="8" fill="#14c783"/><rect x="320" width="8" height="8" fill="#15c780"/><rect x="328" width="8" height="8" fill="#16c77b"/><rect x="336" width="8" height="8" fill="#17c776"/><rect x="344" width="8" height="8" fill="#18c770"/><rect x="352" width="8" height="8" fill="#18c768"/><rect x="360" width="8" height="8" fill="#3cc764"/><rect x="368" width="8" height="8" fill="#4ec762"/><rect x="376" width="8" height="8" fill="#5bc75f"/><rect x="384" width="8" height="8" fill="#66c75d"/><rect x="392" width="8" height="8" fill="#6fc759"/><rect x="400" width="8" height="8" fill="#77c756"/><rect x="408" width="8" height="8" fill="#7fc752"/><rect x="416" width="8" height="8" fill="#85c74d"/><rect x="424" width="8" height="8" fill="#8cc748"/><rect x="432" width="8" height="8" fill="#92c743"/><rect x="440" width="8" height="8" fill="#99c73c"/><rect x="448" width="8" height="8" fill="#9fc735"/><rect x="456" width="8" height="8" fill="#a5c72b"/><rect x="464" width="8" height="8" fill="#abc71e"/><rect x="472" width="8" height="8" fill="#b0c709"/><rect x="480" width="8" height="8" fill="#b7c708"/><rect x="488" width="8" height="8" fill="#bcc707"/><rect x="496" width="8" height="8" fill="#c2c706"/><rect x="504" width="8" height="8" fill="#c7c605"/><rect x="512" width="8" height="8" fill="#c7c104"/><rect x="520" width="8" height="8" fill="#c7bc03"/><rect x="528" width="8" height="8" fill="#c7b803"/><rect x="536" width="8" height="8" fill="#c7b302"/><rect x="544" width="8" height="8" fill="#c7b002"/><rect x="552" width="8" height="8" fill="#c7ac01"/><rect x="560" width="8" height="8" fill="#c7a801"/><rect x="568" width="8" height="8" fill="#c7a501"/></g><g transform="translate(0 352)"><rect x="80" width="8" height="8" fill="#00c7ac"/><rect x="88" width="8" height="8" fill="#00c7ab"/><rect x="96" width="8" height="8" fill="#00c7aa"/><rect x="104" width="8" height="8" fill="#00c7aa"/><rect x="112" width="8" height="8" fill="#00c7a9"/><rect x="120" width="8" height="8" fill="#00c7a8"/><rect x="128" width="8" height="8" fill="#00c7a8"/><rect x="136" width="8" height="8" fill="#00c7a7"/><rect x="144" width="8" height="8" fill="#01c7a6"/><rect x="152" width="8" height="8" fill="#01c7a5"/><rect x="160" width="8" height="8" fill="#01c7a4"/><rect x="168" width="8" height="8" fill="#01c7a4"/><rect x="176" width="8" height="8" fill="#02c7a3"/><rect x="184" width="8" height="8" fill="#02c7a2"/><rect x="192" width="8" height="8" fill="#03c7a1"/><rect x="200" width="8" height="8" fill="#03c7a0"/><rect x="208" width="8" height="8" fill="#04c79e"/><rect x="216" width="8" height="8" fill="#05c79d"/><rect x="224" width="8" height="8" fill="#06c79c"/><rect x="232" width="8" height="8" fill="#07c79b"/><rect x="240" width="8" height="8" fill="#08c799"/><rect x="248" width="8" height="8" fill="#0ac798"/><rect x="256" width="8" height="8" fill="#0bc796"/><rect x="264" width="8" height="8" fill="#0dc795"/><rect x="272" width="8" height="8" fill="#0fc793"/><rect x="280" width="8" height="8" fill="#11c791"/><rect x="288" width="8" height="8" fill="#13c78f"/><rect x="296" width="8" height="8" fill="#14c78d"/><rect x="304" width="8" height="8" fill="#16c78a"/><rect x="312" width="8" height="8" fill="#18c787"/><rect x="320" width="8" height="8" fill="#19c784"/><rect x="328" width="8" height="8" fill="#1bc77f"/><rect x="336" width="8" height="8" fill="#1cc77a"/><rect x="344" width="8" height="8" fill="#1dc774"/><rect x="352" width="8" height="8" fill="#2bc76e"/><rect x="360" width="8" height="8" fill="#48c76c"/><rect x="368" width="8" height="8" fill="#58c76a"/><rect x="376" width="8" height="8" fill="#63c768"/><rect x="384" width="8" height="8" fill="#6dc765"/><rect x="392" width="8" height="8" fill="#76c762"/><rect x="400" width="8" height="8" fill="#7dc75f"/><rect x="408" width="8" height="8" fill="#84c75b"/><rect x="416" width="8" height="8" fill="#8bc757"/><rect x="424" width="8" height="8" fill="#91c753"/><rect x="432" width="8" height="8" fill="#97c74e"/><rect x="440" width="8" height="8" fill="#9dc748"/><rect x="448" width="8" height="8" fill="#a3c742"/><rect x="456" width="8" height="8" fill="#a9c73b"/><rect x="464" width="8" height="8" fill="#afc733"/><rect x="472" width="8" height="8" fill="#b5c728"/><rect x="480" width="8" height="8" fill="#bbc718"/><rect x="488" width="8" height="8" fill="#c1c708"/><rect x="496" width="8" height="8" fill="#c7c707"/><rect x="504" width="8" height="8" fill="#c7c206"/><rect x="512" width="8" height="8" fill="#c7bd05"/><rect x="520" width="8" height="8" fill="#c7b804"/><rect x="528" width="8" height="8" fill="#c7b303"/><rect x="536" width="8" height="8" fill="#c7af03"/><rect x="544" width="8" height="8" fill="#c7ab02"/><rect x="552" width="8" height="8" fill="#c7a802"/><rect x="560" width="8" height="8" fill="#c7a501"/><rect x="568" width="8" height="8" fill="#c7a101"/><rect x="576" width="8" height="8" fill="#c79e01"/></g><g transform="translate(0 360)"><rect x="80" width="8" height="8" fill="#00c7ad"/><rect x="88" width="8" height="8" fill="#00c7ac"/><rect x="96" width="8" height="8" fill="#00c7ac"/><rect x="104" width="8" height="8" fill="#00c7ab"/><rect x="112" width="8" height="8" fill="#00c7ab"/><rect x="120" width="8" height="8" fill="#00c7aa"/><rect x="128" width="8" height="8" fill="#00c7a9"/><rect x="136" width="8" height="8" fill="#00c7a8"/><rect x="144" width="8" height="8" fill="#01c7a8"/><rect x="152" width="8" height="8" fill="#01c7a7"/><rect x="160" width="8" height="8" fill="#01c7a6"/><rect x="168" width="8" height="8" fill="#02c7a5"/><rect x="176" width="8" height="8" fill="#02c7a4"/><rect x="184" width="8" height="8" fill="#02c7a3"/><rect x="192" width="8" height="8" fill="#03c7a2"/><rect x="200" width="8" height="8" fill="#04c7a1"/><rect x="208" width="8" height="8" fill="#05c7a0"/><rect x="216" width="8" height="8" fill="#06c79f"/><rect x="224" width="8" height="8" fill="#07c79e"/><rect x="232" width="8" height="8" fill="#09c79d"/><rect x="240" width="8" height="8" fill="#0ac79c"/><rect x="248" width="8" height="8" fill="#0cc79a"/><rect x="256" width="8" height="8" fill="#0ec799"/><rect x="264" width="8" height="8" fill="#10c798"/><rect x="272" width="8" height="8" fill="#12c796"/><rect x="280" width="8" height="8" fill="#14c794"/><rect x="288" width="8" height="8" fill="#16c792"/><rect x="296" width="8" height="8" fill="#18c790"/><rect x="304" width="8" height="8" fill="#1bc78e"/><rect x="312" width="8" height="8" fill="#1dc78b"/><rect x="320" width="8" height="8" fill="#1ec788"/><rect x="328" width="8" height="8" fill="#20c784"/><rect x="336" width="8" height="8" fill="#21c77f"/><rect x="344" width="8" height="8" fill="#22c779"/><rect x="352" width="8" height="8" fill="#3fc775"/><rect x="360" width="8" height="8" fill="#53c774"/><rect x="368" width="8" height="8" fill="#61c772"/><rect x="376" width="8" height="8" fill="#6bc770"/><rect x="384" width="8" height="8" fill="#74c76e"/><rect x="392" width="8" height="8" fill="#7cc76b"/><rect x="400" width="8" height="8" fill="#83c768"/><rect x="408" width="8" height="8" fill="#8ac765"/><rect x="416" width="8" height="8" fill="#90c761"/><rect x="424" width="8" height="8" fill="#97c75d"/><rect x="432" width="8" height="8" fill="#9cc758"/><rect x="440" width="8" height="8" fill="#a2c753"/><rect x="448" width="8" height="8" fill="#a8c74e"/><rect x="456" width="8" height="8" fill="#aec748"/><rect x="464" width="8" height="8" fill="#b4c741"/><rect x="472" width="8" height="8" fill="#bac73a"/><rect x="480" width="8" height="8" fill="#bfc730"/><rect x="488" width="8" height="8" fill="#c5c724"/><rect x="496" width="8" height="8" fill="#c7c30e"/><rect x="504" width="8" height="8" fill="#c7bd07"/><rect x="512" width="8" height="8" fill="#c7b806"/><rect x="520" width="8" height="8" fill="#c7b305"/><rect x="528" width="8" height="8" fill="#c7af04"/><rect x="536" width="8" height="8" fill="#c7ab03"/><rect x="544" width="8" height="8" fill="#c7a702"/><rect x="552" width="8" height="8" fill="#c7a402"/><rect x="560" width="8" height="8" fill="#c7a002"/><rect x="568" width="8" height="8" fill="#c79d01"/><rect x="576" width="8" height="8" fill="#c79a01"/><rect x="584" width="8" height="8" fill="#c79801"/></g><g transform="translate(0 368)"><rect x="80" width="8" height="8" fill="#00c7ae"/><rect x="88" width="8" height="8" fill="#00c7ae"/><rect x="96" width="8" height="8" fill="#00c7ad"/><rect x="104" width="8" height="8" fill="#00c7ad"/><rect x="112" width="8" height="8" fill="#00c7ac"/><rect x="120" width="8" height="8" fill="#00c7ab"/><rect x="128" width="8" height="8" fill="#00c7ab"/><rect x="136" width="8" height="8" fill="#01c7aa"/><rect x="144" width="8" height="8" fill="#01c7a9"/><rect x="152" width="8" height="8" fill="#01c7a9"/><rect x="160" width="8" height="8" fill="#01c7a8"/><rect x="168" width="8" height="8" fill="#02c7a7"/><rect x="176" width="8" height="8" fill="#02c7a6"/><rect x="184" width="8" height="8" fill="#03c7a5"/><rect x="192" width="8" height="8" fill="#04c7a4"/><rect x="200" width="8" height="8" fill="#05c7a3"/><rect x="208" width="8" height="8" fill="#06c7a2"/><rect x="216" width="8" height="8" fill="#07c7a1"/><rect x="224" width="8" height="8" fill="#08c7a0"/><rect x="232" width="8" height="8" fill="#0ac79f"/><rect x="240" width="8" height="8" fill="#0cc79e"/><rect x="248" width="8" height="8" fill="#0ec79d"/><rect x="256" width="8" height="8" fill="#10c79c"/><rect x="264" width="8" height="8" fill="#13c79a"/><rect x="272" width="8" height="8" fill="#15c799"/><rect x="280" width="8" height="8" fill="#18c797"/><rect x="288" width="8" height="8" fill="#1ac796"/><rect x="296" width="8" height="8" fill="#1dc794"/><rect x="304" width="8" height="8" fill="#1fc791"/><rect x="312" width="8" height="8" fill="#22c78f"/><rect x="320" width="8" height="8" fill="#24c78c"/><rect x="328" width="8" height="8" fill="#26c788"/><rect x="336" width="8" height="8" fill="#28c784"/><rect x="344" width="8" height="8" fill="#29c77f"/><rect x="352" width="8" height="8" fill="#4dc77d"/><rect x="360" width="8" height="8" fill="#5ec77c"/><rect x="368" width="8" height="8" fill="#6ac77a"/><rect x="376" width="8" height="8" fill="#73c778"/><rect x="384" width="8" height="8" fill="#7cc776"/><rect x="392" width="8" height="8" fill="#83c774"/><rect x="400" width="8" height="8" fill="#8ac771"/><rect x="408" width="8" height="8" fill="#90c76e"/><rect x="416" width="8" height="8" fill="#96c76a"/><rect x="424" width="8" height="8" fill="#9cc766"/><rect x="432" width="8" height="8" fill="#a2c762"/><rect x="440" width="8" height="8" fill="#a7c75d"/><rect x="448" width="8" height="8" fill="#adc759"/><rect x="456" width="8" height="8" fill="#b3c753"/><rect x="464" width="8" height="8" fill="#b8c74d"/><rect x="472" width="8" height="8" fill="#bec747"/><rect x="480" width="8" height="8" fill="#c4c740"/><rect x="488" width="8" height="8" fill="#c7c436"/><rect x="496" width="8" height="8" fill="#c7be2b"/><rect x="504" width="8" height="8" fill="#c7b91d"/><rect x="512" width="8" height="8" fill="#c7b307"/><rect x="520" width="8" height="8" fill="#c7af06"/><rect x="528" width="8" height="8" fill="#c7ab05"/><rect x="536" width="8" height="8" fill="#c7a704"/><rect x="544" width="8" height="8" fill="#c7a303"/><rect x="552" width="8" height="8" fill="#c79f02"/><rect x="560" width="8" height="8" fill="#c79c02"/><rect x="568" width="8" height="8" fill="#c79901"/><rect x="576" width="8" height="8" fill="#c79601"/><rect x="584" width="8" height="8" fill="#c79301"/><rect x="592" width="8" height="8" fill="#c79101"/><rect x="600" width="8" height="8" fill="#c78e00"/></g><g transform="translate(0 376)"><rect x="88" width="8" height="8" fill="#00c7af"/><rect x="96" width="8" height="8" fill="#00c7af"/><rect x="104" width="8" height="8" fill="#00c7ae"/><rect x="112" width="8" height="8" fill="#00c7ad"/><rect x="120" width="8" height="8" fill="#00c7ad"/><rect x="128" width="8" height="8" fill="#01c7ac"/><rect x="136" width="8" height="8" fill="#01c7ac"/><rect x="144" width="8" height="8" fill="#01c7ab"/><rect x="152" width="8" height="8" fill="#01c7aa"/><rect x="160" width="8" height="8" fill="#02c7a9"/><rect x="168" width="8" height="8" fill="#02c7a9"/><rect x="176" width="8" height="8" fill="#03c7a8"/><rect x="184" width="8" height="8" fill="#03c7a7"/><rect x="192" width="8" height="8" fill="#04c7a6"/><rect x="200" width="8" height="8" fill="#05c7a5"/><rect x="208" width="8" height="8" fill="#07c7a4"/><rect x="216" width="8" height="8" fill="#08c7a3"/><rect x="224" width="8" height="8" fill="#0ac7a2"/><rect x="232" width="8" height="8" fill="#0cc7a1"/><rect x="240" width="8" height="8" fill="#0ec7a0"/><rect x="248" width="8" height="8" fill="#10c79f"/><rect x="256" width="8" height="8" fill="#13c79e"/><rect x="264" width="8" height="8" fill="#16c79d"/><rect x="272" width="8" height="8" fill="#19c79c"/><rect x="280" width="8" height="8" fill="#1cc79a"/><rect x="288" width="8" height="8" fill="#1fc799"/><rect x="296" width="8" height="8" fill="#22c797"/><rect x="304" width="8" height="8" fill="#25c795"/><rect x="312" width="8" height="8" fill="#28c793"/><rect x="320" width="8" height="8" fill="#2ac790"/><rect x="328" width="8" height="8" fill="#2cc78d"/><rect x="336" width="8" height="8" fill="#2ec789"/><rect x="344" width="8" height="8" fill="#41c785"/><rect x="352" width="8" height="8" fill="#5ac785"/><rect x="360" width="8" height="8" fill="#68c784"/><rect x="368" width="8" height="8" fill="#72c782"/><rect x="376" width="8" height="8" fill="#7bc780"/><rect x="384" width="8" height="8" fill="#83c77e"/><rect x="392" width="8" height="8" fill="#8ac77c"/><rect x="400" width="8" height="8" fill="#90c779"/><rect x="408" width="8" height="8" fill="#96c776"/><rect x="416" width="8" height="8" fill="#9cc773"/><rect x="424" width="8" height="8" fill="#a1c76f"/><rect x="432" width="8" height="8" fill="#a7c76b"/><rect x="440" width="8" height="8" fill="#acc767"/><rect x="448" width="8" height="8" fill="#b2c762"/><rect x="456" width="8" height="8" fill="#b7c75d"/><rect x="464" width="8" height="8" fill="#bdc758"/><rect x="472" width="8" height="8" fill="#c3c752"/><rect x="480" width="8" height="8" fill="#c7c54b"/><rect x="488" width="8" height="8" fill="#c7bf43"/><rect x="496" width="8" height="8" fill="#c7ba3a"/><rect x="504" width="8" height="8" fill="#c7b430"/><rect x="512" width="8" height="8" fill="#c7af24"/><rect x="520" width="8" height="8" fill="#c7aa14"/><rect x="528" width="8" height="8" fill="#c7a605"/><rect x="536" width="8" height="8" fill="#c7a204"/><rect x="544" width="8" height="8" fill="#c79e03"/><rect x="552" width="8" height="8" fill="#c79b03"/><rect x="560" width="8" height="8" fill="#c79802"/><rect x="568" width="8" height="8" fill="#c79502"/><rect x="576" width="8" height="8" fill="#c79201"/><rect x="584" width="8" height="8" fill="#c78f01"/><rect x="592" width="8" height="8" fill="#c78d01"/><rect x="600" width="8" height="8" fill="#c78a01"/><rect x="608" width="8" height="8" fill="#c78800"/></g><g transform="translate(0 384)"><rect x="88" width="8" height="8" fill="#00c7b1"/><rect x="96" width="8" height="8" fill="#00c7b0"/><rect x="104" width="8" height="8" fill="#00c7b0"/><rect x="112" width="8" height="8" fill="#00c7af"/><rect x="120" width="8" height="8" fill="#00c7ae"/><rect x="128" width="8" height="8" fill="#01c7ae"/><rect x="136" width="8" height="8" fill="#01c7ad"/><rect x="144" width="8" height="8" fill="#01c7ad"/><rect x="152" width="8" height="8" fill="#01c7ac"/><rect x="160" width="8" height="8" fill="#02c7ab"/><rect x="168" width="8" height="8" fill="#02c7aa"/><rect x="176" width="8" height="8" fill="#03c7aa"/><rect x="184" width="8" height="8" fill="#04c7a9"/><rect x="192" width="8" height="8" fill="#05c7a8"/><rect x="200" width="8" height="8" fill="#06c7a7"/><rect x="208" width="8" height="8" fill="#08c7a6"/><rect x="216" width="8" height="8" fill="#09c7a6"/><rect x="224" width="8" height="8" fill="#0bc7a5"/><rect x="232" width="8" height="8" fill="#0ec7a4"/><rect x="240" width="8" height="8" fill="#10c7a3"/><rect x="248" width="8" height="8" fill="#13c7a2"/><rect x="256" width="8" height="8" fill="#16c7a1"/><rect x="264" width="8" height="8" fill="#19c7a0"/><rect x="272" width="8" height="8" fill="#1dc79f"/><rect x="280" width="8" height="8" fill="#20c79e"/><rect x="288" width="8" height="8" fill="#24c79c"/><rect x="296" width="8" height="8" fill="#27c79b"/><rect x="304" width="8" height="8" fill="#2bc799"/><rect x="312" width="8" height="8" fill="#2ec797"/><rect x="320" width="8" height="8" fill="#31c795"/><rect x="328" width="8" height="8" fill="#33c792"/><rect x="336" width="8" height="8" fill="#36c78e"/><rect x="344" width="8" height="8" fill="#53c78d"/><rect x="352" width="8" height="8" fill="#65c78c"/><rect x="360" width="8" height="8" fill="#71c78b"/><rect x="368" width="8" height="8" fill="#7bc78a"/><rect x="376" width="8" height="8" fill="#83c788"/><rect x="384" width="8" height="8" fill="#8ac786"/><rect x="392" width="8" height="8" fill="#90c784"/><rect x="400" width="8" height="8" fill="#96c782"/><rect x="408" width="8" height="8" fill="#9cc77f"/><rect x="416" width="8" height="8" fill="#a1c77c"/><rect x="424" width="8" height="8" fill="#a6c778"/><rect x="432" width="8" height="8" fill="#acc774"/><rect x="440" width="8" height="8" fill="#b1c770"/><rect x="448" width="8" height="8" fill="#b7c76c"/><rect x="456" width="8" height="8" fill="#bcc767"/><rect x="464" width="8" height="8" fill="#c2c762"/><rect x="472" width="8" height="8" fill="#c7c65c"/><rect x="480" width="8" height="8" fill="#c7c054"/><rect x="488" width="8" height="8" fill="#c7bb4c"/><rect x="496" width="8" height="8" fill="#c7b544"/><rect x="504" width="8" height="8" fill="#c7b03c"/><rect x="512" width="8" height="8" fill="#c7ab33"/><rect x="520" width="8" height="8" fill="#c7a629"/><rect x="528" width="8" height="8" fill="#c7a21d"/><rect x="536" width="8" height="8" fill="#c79d0a"/><rect x="544" width="8" height="8" fill="#c79a04"/><rect x="552" width="8" height="8" fill="#c79603"/><rect x="560" width="8" height="8" fill="#c79302"/><rect x="568" width="8" height="8" fill="#c79002"/><rect x="576" width="8" height="8" fill="#c78d01"/><rect x="584" width="8" height="8" fill="#c78b01"/><rect x="592" width="8" height="8" fill="#c78801"/><rect x="600" width="8" height="8" fill="#c78601"/><rect x="608" width="8" height="8" fill="#c78400"/><rect x="616" width="8" height="8" fill="#c78200"/></g><g transform="translate(0 392)"><rect x="88" width="8" height="8" fill="#00c7b2"/><rect x="96" width="8" height="8" fill="#00c7b2"/><rect x="104" width="8" height="8" fill="#00c7b1"/><rect x="112" width="8" height="8" fill="#00c7b1"/><rect x="120" width="8" height="8" fill="#00c7b0"/><rect x="128" width="8" height="8" fill="#01c7af"/><rect x="136" width="8" height="8" fill="#01c7af"/><rect x="144" width="8" height="8" fill="#01c7ae"/><rect x="152" width="8" height="8" fill="#02c7ae"/><rect x="160" width="8" height="8" fill="#02c7ad"/><rect x="168" width="8" height="8" fill="#03c7ac"/><rect x="176" width="8" height="8" fill="#04c7ac"/><rect x="184" width="8" height="8" fill="#05c7ab"/><rect x="192" width="8" height="8" fill="#06c7aa"/><rect x="200" width="8" height="8" fill="#07c7a9"/><rect x="208" width="8" height="8" fill="#09c7a9"/><rect x="216" width="8" height="8" fill="#0bc7a8"/><rect x="224" width="8" height="8" fill="#0dc7a7"/><rect x="232" width="8" height="8" fill="#10c7a6"/><rect x="240" width="8" height="8" fill="#13c7a5"/><rect x="248" width="8" height="8" fill="#16c7a5"/><rect x="256" width="8" height="8" fill="#19c7a4"/><rect x="264" width="8" height="8" fill="#1dc7a3"/><rect x="272" width="8" height="8" fill="#21c7a2"/><rect x="280" width="8" height="8" fill="#25c7a1"/><rect x="288" width="8" height="8" fill="#29c7a0"/><rect x="296" width="8" height="8" fill="#2dc79f"/><rect x="304" width="8" height="8" fill="#31c79d"/><rect x="312" width="8" height="8" fill="#35c79c"/><rect x="320" width="8" height="8" fill="#38c79a"/><rect x="328" width="8" height="8" fill="#3bc797"/><rect x="336" width="8" height="8" fill="#3fc794"/><rect x="344" width="8" height="8" fill="#61c794"/><rect x="352" width="8" height="8" fill="#70c793"/><rect x="360" width="8" height="8" fill="#7bc792"/><rect x="368" width="8" height="8" fill="#83c791"/><rect x="376" width="8" height="8" fill="#8bc790"/><rect x="384" width="8" height="8" fill="#91c78e"/><rect x="392" width="8" height="8" fill="#97c78c"/><rect x="400" width="8" height="8" fill="#9cc78a"/><rect x="408" width="8" height="8" fill="#a1c787"/><rect x="416" width="8" height="8" fill="#a6c784"/><rect x="424" width="8" height="8" fill="#abc781"/><rect x="432" width="8" height="8" fill="#b1c77d"/><rect x="440" width="8" height="8" fill="#b6c779"/><rect x="448" width="8" height="8" fill="#bbc775"/><rect x="456" width="8" height="8" fill="#c1c770"/><rect x="464" width="8" height="8" fill="#c7c76c"/><rect x="472" width="8" height="8" fill="#c7c164"/><rect x="480" width="8" height="8" fill="#c7bc5c"/><rect x="488" width="8" height="8" fill="#c7b655"/><rect x="496" width="8" height="8" fill="#c7b14d"/><rect x="504" width="8" height="8" fill="#c7ac45"/><rect x="512" width="8" height="8" fill="#c7a73e"/><rect x="520" width="8" height="8" fill="#c7a235"/><rect x="528" width="8" height="8" fill="#c79e2d"/><rect x="536" width="8" height="8" fill="#c79923"/><rect x="544" width="8" height="8" fill="#c79517"/><rect x="552" width="8" height="8" fill="#c79104"/><rect x="560" width="8" height="8" fill="#c78e03"/><rect x="568" width="8" height="8" fill="#c78b02"/><rect x="576" width="8" height="8" fill="#c78802"/><rect x="584" width="8" height="8" fill="#c78601"/><rect x="592" width="8" height="8" fill="#c78401"/><rect x="600" width="8" height="8" fill="#c78101"/><rect x="608" width="8" height="8" fill="#c77f00"/><rect x="616" width="8" height="8" fill="#c77d00"/><rect x="624" width="8" height="8" fill="#c77b00"/></g><g transform="translate(0 400)"><rect x="88" width="8" height="8" fill="#00c7b4"/><rect x="96" width="8" height="8" fill="#00c7b3"/><rect x="104" width="8" height="8" fill="#00c7b3"/><rect x="112" width="8" height="8" fill="#00c7b2"/><rect x="120" width="8" height="8" fill="#01c7b2"/><rect x="128" width="8" height="8" fill="#01c7b1"/><rect x="136" width="8" height="8" fill="#01c7b1"/><rect x="144" width="8" height="8" fill="#01c7b0"/><rect x="152" width="8" height="8" fill="#02c7af"/><rect x="160" width="8" height="8" fill="#02c7af"/><rect x="168" width="8" height="8" fill="#03c7ae"/><rect x="176" width="8" height="8" fill="#04c7ae"/><rect x="184" width="8" height="8" fill="#05c7ad"/><rect x="192" width="8" height="8" fill="#07c7ac"/><rect x="200" width="8" height="8" fill="#08c7ac"/><rect x="208" width="8" height="8" fill="#0ac7ab"/><rect x="216" width="8" height="8" fill="#0cc7aa"/><rect x="224" width="8" height="8" fill="#0fc7a9"/><rect x="232" width="8" height="8" fill="#12c7a9"/><rect x="240" width="8" height="8" fill="#15c7a8"/><rect x="248" width="8" height="8" fill="#19c7a7"/><rect x="256" width="8" height="8" fill="#1dc7a7"/><rect x="264" width="8" height="8" fill="#21c7a6"/><rect x="272" width="8" height="8" fill="#25c7a5"/><rect x="280" width="8" height="8" fill="#2ac7a4"/><rect x="288" width="8" height="8" fill="#2ec7a4"/><rect x="296" width="8" height="8" fill="#33c7a3"/><rect x="304" width="8" height="8" fill="#37c7a1"/><rect x="312" width="8" height="8" fill="#3cc7a0"/><rect x="320" width="8" height="8" fill="#3fc79e"/><rect x="328" width="8" height="8" fill="#43c79c"/><rect x="336" width="8" height="8" fill="#59c79a"/><rect x="344" width="8" height="8" fill="#6ec79a"/><rect x="352" width="8" height="8" fill="#7ac79a"/><rect x="360" width="8" height="8" fill="#84c799"/><rect x="368" width="8" height="8" fill="#8bc799"/><rect x="376" width="8" height="8" fill="#92c797"/><rect x="384" width="8" height="8" fill="#98c796"/><rect x="392" width="8" height="8" fill="#9dc794"/><rect x="400" width="8" height="8" fill="#a2c791"/><rect x="408" width="8" height="8" fill="#a7c78f"/><rect x="416" width="8" height="8" fill="#acc78c"/><rect x="424" width="8" height="8" fill="#b0c789"/><rect x="432" width="8" height="8" fill="#b5c785"/><rect x="440" width="8" height="8" fill="#bbc781"/><rect x="448" width="8" height="8" fill="#c0c77d"/><rect x="456" width="8" height="8" fill="#c6c779"/><rect x="464" width="8" height="8" fill="#c7c272"/><rect x="472" width="8" height="8" fill="#c7bd6b"/><rect x="480" width="8" height="8" fill="#c7b763"/><rect x="488" width="8" height="8" fill="#c7b25c"/><rect x="496" width="8" height="8" fill="#c7ad55"/><rect x="504" width="8" height="8" fill="#c7a84d"/><rect x="512" width="8" height="8" fill="#c7a346"/><rect x="520" width="8" height="8" fill="#c79e3f"/><rect x="528" width="8" height="8" fill="#c79a37"/><rect x="536" width="8" height="8" fill="#c79530"/><rect x="544" width="8" height="8" fill="#c79127"/><rect x="552" width="8" height="8" fill="#c78d1d"/><rect x="560" width="8" height="8" fill="#c7890f"/><rect x="568" width="8" height="8" fill="#c78602"/><rect x="576" width="8" height="8" fill="#c78302"/><rect x="584" width="8" height="8" fill="#c78101"/><rect x="592" width="8" height="8" fill="#c77f01"/><rect x="600" width="8" height="8" fill="#c77c01"/><rect x="608" width="8" height="8" fill="#c77a01"/><rect x="616" width="8" height="8" fill="#c77800"/><rect x="624" width="8" height="8" fill="#c77600"/><rect x="632" width="8" height="8" fill="#c77500"/><rect x="640" width="8" height="8" fill="#c77300"/></g><g transform="translate(0 408)"><rect x="88" width="8" height="8" fill="#00c7b5"/><rect x="96" width="8" height="8" fill="#00c7b5"/><rect x="104" width="8" height="8" fill="#00c7b4"/><rect x="112" width="8" height="8" fill="#00c7b4"/><rect x="120" width="8" height="8" fill="#01c7b3"/><rect x="128" width="8" height="8" fill="#01c7b3"/><rect x="136" width="8" height="8" fill="#01c7b2"/><rect x="144" width="8" height="8" fill="#02c7b2"/><rect x="152" width="8" height="8" fill="#02c7b1"/><rect x="160" width="8" height="8" fill="#03c7b1"/><rect x="168" width="8" height="8" fill="#04c7b0"/><rect x="176" width="8" height="8" fill="#05c7b0"/><rect x="184" width="8" height="8" fill="#06c7af"/><rect x="192" width="8" height="8" fill="#07c7ae"/><rect x="200" width="8" height="8" fill="#09c7ae"/><rect x="208" width="8" height="8" fill="#0bc7ad"/><rect x="216" width="8" height="8" fill="#0ec7ac"/><rect x="224" width="8" height="8" fill="#11c7ac"/><rect x="232" width="8" height="8" fill="#14c7ab"/><rect x="240" width="8" height="8" fill="#18c7ab"/><rect x="248" width="8" height="8" fill="#1cc7aa"/><rect x="256" width="8" height="8" fill="#20c7aa"/><rect x="264" width="8" height="8" fill="#25c7a9"/><rect x="272" width="8" height="8" fill="#2ac7a8"/><rect x="280" width="8" height="8" fill="#2fc7a8"/><rect x="288" width="8" height="8" fill="#34c7a7"/><rect x="296" width="8" height="8" fill="#39c7a6"/><rect x="304" width="8" height="8" fill="#3ec7a5"/><rect x="312" width="8" height="8" fill="#43c7a4"/><rect x="320" width="8" height="8" fill="#47c7a3"/><rect x="328" width="8" height="8" fill="#4bc7a1"/><rect x="336" width="8" height="8" fill="#69c7a1"/><rect x="344" width="8" height="8" fill="#79c7a1"/><rect x="352" width="8" height="8" fill="#84c7a1"/><rect x="360" width="8" height="8" fill="#8cc7a0"/><rect x="368" width="8" height="8" fill="#93c79f"/><rect x="376" width="8" height="8" fill="#99c79e"/><rect x="384" width="8" height="8" fill="#9ec79d"/><rect x="392" width="8" height="8" fill="#a3c79b"/><rect x="400" width="8" height="8" fill="#a8c799"/><rect x="408" width="8" height="8" fill="#acc796"/><rect x="416" width="8" height="8" fill="#b1c793"/><rect x="424" width="8" height="8" fill="#b5c790"/><rect x="432" width="8" height="8" fill="#bac78d"/><rect x="440" width="8" height="8" fill="#bfc789"/><rect x="448" width="8" height="8" fill="#c5c785"/><rect x="456" width="8" height="8" fill="#c7c47f"/><rect x="464" width="8" height="8" fill="#c7be78"/><rect x="472" width="8" height="8" fill="#c7b971"/><rect x="480" width="8" height="8" fill="#c7b36a"/><rect x="488" width="8" height="8" fill="#c7ae62"/><rect x="496" width="8" height="8" fill="#c7a95b"/><rect x="504" width="8" height="8" fill="#c7a454"/><rect x="512" width="8" height="8" fill="#c79f4d"/><rect x="520" width="8" height="8" fill="#c79a47"/><rect x="528" width="8" height="8" fill="#c79640"/><rect x="536" width="8" height="8" fill="#c79139"/><rect x="544" width="8" height="8" fill="#c78d32"/><rect x="552" width="8" height="8" fill="#c7892a"/><rect x="560" width="8" height="8" fill="#c78622"/><rect x="568" width="8" height="8" fill="#c78218"/><rect x="576" width="8" height="8" fill="#c77e07"/><rect x="584" width="8" height="8" fill="#c77c02"/><rect x="592" width="8" height="8" fill="#c77901"/><rect x="600" width="8" height="8" fill="#c77701"/><rect x="608" width="8" height="8" fill="#c77501"/><rect x="616" width="8" height="8" fill="#c77300"/><rect x="624" width="8" height="8" fill="#c77100"/><rect x="632" width="8" height="8" fill="#c77000"/><rect x="640" width="8" height="8" fill="#c76e00"/><rect x="648" width="8" height="8" fill="#c76d00"/></g><g transform="translate(0 416)"><rect x="88" width="8" height="8" fill="#00c7b7"/><rect x="96" width="8" height="8" fill="#00c7b6"/><rect x="104" width="8" height="8" fill="#00c7b6"/><rect x="112" width="8" height="8" fill="#01c7b5"/><rect x="120" width="8" height="8" fill="#01c7b5"/><rect x="128" width="8" height="8" fill="#01c7b5"/><rect x="136" width="8" height="8" fill="#01c7b4"/><rect x="144" width="8" height="8" fill="#02c7b4"/><rect x="152" width="8" height="8" fill="#02c7b3"/><rect x="160" width="8" height="8" fill="#03c7b3"/><rect x="168" width="8" height="8" fill="#04c7b2"/><rect x="176" width="8" height="8" fill="#05c7b2"/><rect x="184" width="8" height="8" fill="#06c7b1"/><rect x="192" width="8" height="8" fill="#08c7b0"/><rect x="200" width="8" height="8" fill="#0ac7b0"/><rect x="208" width="8" height="8" fill="#0dc7af"/><rect x="216" width="8" height="8" fill="#0fc7af"/><rect x="224" width="8" height="8" fill="#13c7ae"/><rect x="232" width="8" height="8" fill="#16c7ae"/><rect x="240" width="8" height="8" fill="#1ac7ad"/><rect x="248" width="8" height="8" fill="#1fc7ad"/><rect x="256" width="8" height="8" fill="#24c7ac"/><rect x="264" width="8" height="8" fill="#29c7ac"/><rect x="272" width="8" height="8" fill="#2ec7ac"/><rect x="280" width="8" height="8" fill="#34c7ab"/><rect x="288" width="8" height="8" fill="#3ac7ab"/><rect x="296" width="8" height="8" fill="#3fc7aa"/><rect x="304" width="8" height="8" fill="#45c7a9"/><rect x="312" width="8" height="8" fill="#4ac7a8"/><rect x="320" width="8" height="8" fill="#4fc7a7"/><rect x="328" width="8" height="8" fill="#5cc7a6"/><rect x="336" width="8" height="8" fill="#76c7a7"/><rect x="344" width="8" height="8" fill="#83c7a7"/><rect x="352" width="8" height="8" fill="#8cc7a7"/><rect x="360" width="8" height="8" fill="#94c7a6"/><rect x="368" width="8" height="8" fill="#9ac7a6"/><rect x="376" width="8" height="8" fill="#a0c7a5"/><rect x="384" width="8" height="8" fill="#a4c7a3"/><rect x="392" width="8" height="8" fill="#a9c7a2"/><rect x="400" width="8" height="8" fill="#adc7a0"/><rect x="408" width="8" height="8" fill="#b1c79d"/><rect x="416" width="8" height="8" fill="#b5c79b"/><rect x="424" width="8" height="8" fill="#bac798"/><rect x="432" width="8" height="8" fill="#bfc794"/><rect x="440" width="8" height="8" fill="#c4c791"/><rect x="448" width="8" height="8" fill="#c7c58c"/><rect x="456" width="8" height="8" fill="#c7bf85"/><rect x="464" width="8" height="8" fill="#c7ba7d"/><rect x="472" width="8" height="8" fill="#c7b576"/><rect x="480" width="8" height="8" fill="#c7af6f"/><rect x="488" width="8" height="8" fill="#c7aa68"/><rect x="496" width="8" height="8" fill="#c7a561"/><rect x="504" width="8" height="8" fill="#c7a05a"/><rect x="512" width="8" height="8" fill="#c79b54"/><rect x="520" width="8" height="8" fill="#c7964d"/><rect x="528" width="8" height="8" fill="#c79247"/><rect x="536" width="8" height="8" fill="#c78d40"/><rect x="544" width="8" height="8" fill="#c7893a"/><rect x="552" width="8" height="8" fill="#c78533"/><rect x="560" width="8" height="8" fill="#c7822d"/><rect x="568" width="8" height="8" fill="#c77e25"/><rect x="576" width="8" height="8" fill="#c77a1d"/><rect x="584" width="8" height="8" fill="#c77712"/><rect x="592" width="8" height="8" fill="#c77401"/><rect x="600" width="8" height="8" fill="#c77201"/><rect x="608" width="8" height="8" fill="#c77001"/><rect x="616" width="8" height="8" fill="#c76e01"/><rect x="624" width="8" height="8" fill="#c76c00"/><rect x="632" width="8" height="8" fill="#c76b00"/><rect x="640" width="8" height="8" fill="#c76900"/><rect x="648" width="8" height="8" fill="#c76700"/><rect x="656" width="8" height="8" fill="#c76600"/></g><g transform="translate(0 424)"><rect x="96" width="8" height="8" fill="#00c7b8"/><rect x="104" width="8" height="8" fill="#00c7b8"/><rect x="112" width="8" height="8" fill="#01c7b7"/><rect x="120" width="8" height="8" fill="#01c7b7"/><rect x="128" width="8" height="8" fill="#01c7b6"/><rect x="136" width="8" height="8" fill="#01c7b6"/><rect x="144" width="8" height="8" fill="#02c7b6"/><rect x="152" width="8" height="8" fill="#03c7b5"/><rect x="160" width="8" height="8" fill="#03c7b5"/><rect x="168" width="8" height="8" fill="#04c7b4"/><rect x="176" width="8" height="8" fill="#06c7b4"/><rect x="184" width="8" height="8" fill="#07c7b3"/><rect x="192" width="8" height="8" fill="#09c7b3"/><rect x="200" width="8" height="8" fill="#0bc7b2"/><rect x="208" width="8" height="8" fill="#0ec7b2"/><rect x="216" width="8" height="8" fill="#11c7b1"/><rect x="224" width="8" height="8" fill="#14c7b1"/><rect x="232" width="8" height="8" fill="#18c7b0"/><rect x="240" width="8" height="8" fill="#1dc7b0"/><rect x="248" width="8" height="8" fill="#22c7b0"/><rect x="256" width="8" height="8" fill="#27c7af"/><rect x="264" width="8" height="8" fill="#2dc7af"/><rect x="272" width="8" height="8" fill="#33c7af"/><rect x="280" width="8" height="8" fill="#39c7ae"/><rect x="288" width="8" height="8" fill="#3fc7ae"/><rect x="296" width="8" height="8" fill="#46c7ae"/><rect x="304" width="8" height="8" fill="#4cc7ad"/><rect x="312" width="8" height="8" fill="#52c7ad"/><rect x="320" width="8" height="8" fill="#57c7ac"/><rect x="328" width="8" height="8" fill="#6fc7ab"/><rect x="336" width="8" height="8" fill="#81c7ac"/><rect x="344" width="8" height="8" fill="#8cc7ac"/><rect x="352" width="8" height="8" fill="#95c7ac"/><rect x="360" width="8" height="8" fill="#9bc7ac"/><rect x="368" width="8" height="8" fill="#a1c7ac"/><rect x="376" width="8" height="8" fill="#a6c7ab"/><rect x="384" width="8" height="8" fill="#aac7aa"/><rect x="392" width="8" height="8" fill="#aec7a8"/><rect x="400" width="8" height="8" fill="#b2c7a6"/><rect x="408" width="8" height="8" fill="#b6c7a4"/><rect x="416" width="8" height="8" fill="#bac7a1"/><rect x="424" width="8" height="8" fill="#bec79f"/><rect x="432" width="8" height="8" fill="#c3c79b"/><rect x="440" width="8" height="8" fill="#c7c698"/><rect x="448" width="8" height="8" fill="#c7c191"/><rect x="456" width="8" height="8" fill="#c7bb8a"/><rect x="464" width="8" height="8" fill="#c7b682"/><rect x="472" width="8" height="8" fill="#c7b17b"/><rect x="480" width="8" height="8" fill="#c7ab74"/><rect x="488" width="8" height="8" fill="#c7a66d"/><rect x="496" width="8" height="8" fill="#c7a167"/><rect x="504" width="8" height="8" fill="#c79c60"/><rect x="512" width="8" height="8" fill="#c79759"/><rect x="520" width="8" height="8" fill="#c79253"/><rect x="528" width="8" height="8" fill="#c78e4d"/><rect x="536" width="8" height="8" fill="#c78947"/><rect x="544" width="8" height="8" fill="#c78541"/><rect x="552" width="8" height="8" fill="#c7813b"/><rect x="560" width="8" height="8" fill="#c77e35"/><rect x="568" width="8" height="8" fill="#c77a2f"/><rect x="576" width="8" height="8" fill="#c77628"/><rect x="584" width="8" height="8" fill="#c77321"/><rect x="592" width="8" height="8" fill="#c77018"/><rect x="600" width="8" height="8" fill="#c76d0c"/><rect x="608" width="8" height="8" fill="#c76a01"/><rect x="616" width="8" height="8" fill="#c76801"/><rect x="624" width="8" height="8" fill="#c76700"/><rect x="632" width="8" height="8" fill="#c76500"/><rect x="640" width="8" height="8" fill="#c76300"/><rect x="648" width="8" height="8" fill="#c76200"/><rect x="656" width="8" height="8" fill="#c76100"/><rect x="664" width="8" height="8" fill="#c75f00"/><rect x="672" width="8" height="8" fill="#c75e00"/></g><g transform="translate(0 432)"><rect x="96" width="8" height="8" fill="#00c7ba"/><rect x="104" width="8" height="8" fill="#00c7b9"/><rect x="112" width="8" height="8" fill="#01c7b9"/><rect x="120" width="8" height="8" fill="#01c7b9"/><rect x="128" width="8" height="8" fill="#01c7b8"/><rect x="136" width="8" height="8" fill="#02c7b8"/><rect x="144" width="8" height="8" fill="#02c7b7"/><rect x="152" width="8" height="8" fill="#03c7b7"/><rect x="160" width="8" height="8" fill="#04c7b7"/><rect x="168" width="8" height="8" fill="#05c7b6"/><rect x="176" width="8" height="8" fill="#06c7b6"/><rect x="184" width="8" height="8" fill="#08c7b5"/><rect x="192" width="8" height="8" fill="#0ac7b5"/><rect x="200" width="8" height="8" fill="#0cc7b5"/><rect x="208" width="8" height="8" fill="#0fc7b4"/><rect x="216" width="8" height="8" fill="#12c7b4"/><rect x="224" width="8" height="8" fill="#16c7b3"/><rect x="232" width="8" height="8" fill="#1bc7b3"/><rect x="240" width="8" height="8" fill="#1fc7b3"/><rect x="248" width="8" height="8" fill="#25c7b2"/><rect x="256" width="8" height="8" fill="#2bc7b2"/><rect x="264" width="8" height="8" fill="#31c7b2"/><rect x="272" width="8" height="8" fill="#37c7b2"/><rect x="280" width="8" height="8" fill="#3ec7b2"/><rect x="288" width="8" height="8" fill="#45c7b1"/><rect x="296" width="8" height="8" fill="#4cc7b1"/><rect x="304" width="8" height="8" fill="#53c7b1"/><rect x="312" width="8" height="8" fill="#59c7b0"/><rect x="320" width="8" height="8" fill="#5fc7b0"/><rect x="328" width="8" height="8" fill="#7cc7b0"/><rect x="336" width="8" height="8" fill="#8bc7b1"/><rect x="344" width="8" height="8" fill="#94c7b1"/><rect x="352" width="8" height="8" fill="#9cc7b1"/><rect x="360" width="8" height="8" fill="#a2c7b1"/><rect x="368" width="8" height="8" fill="#a7c7b1"/><rect x="376" width="8" height="8" fill="#abc7b0"/><rect x="384" width="8" height="8" fill="#afc7af"/><rect x="392" width="8" height="8" fill="#b3c7ae"/><rect x="400" width="8" height="8" fill="#b6c7ac"/><rect x="408" width="8" height="8" fill="#bac7aa"/><rect x="416" width="8" height="8" fill="#bec7a8"/><rect x="424" width="8" height="8" fill="#c2c7a5"/><rect x="432" width="8" height="8" fill="#c7c7a2"/><rect x="440" width="8" height="8" fill="#c7c29c"/><rect x="448" width="8" height="8" fill="#c7bd95"/><rect x="456" width="8" height="8" fill="#c7b88e"/><rect x="464" width="8" height="8" fill="#c7b287"/><rect x="472" width="8" height="8" fill="#c7ad80"/><rect x="480" width="8" height="8" fill="#c7a879"/><rect x="488" width="8" height="8" fill="#c7a272"/><rect x="496" width="8" height="8" fill="#c79d6b"/><rect x="504" width="8" height="8" fill="#c79865"/><rect x="512" width="8" height="8" fill="#c7935f"/><rect x="520" width="8" height="8" fill="#c78e58"/><rect x="528" width="8" height="8" fill="#c78a52"/><rect x="536" width="8" height="8" fill="#c7854c"/><rect x="544" width="8" height="8" fill="#c78147"/><rect x="552" width="8" height="8" fill="#c77d41"/><rect x="560" width="8" height="8" fill="#c7793c"/><rect x="568" width="8" height="8" fill="#c77636"/><rect x="576" width="8" height="8" fill="#c77230"/><rect x="584" width="8" height="8" fill="#c76f2a"/><rect x="592" width="8" height="8" fill="#c76c24"/><rect x="600" width="8" height="8" fill="#c7681d"/><rect x="608" width="8" height="8" fill="#c76514"/><rect x="616" width="8" height="8" fill="#c76205"/><rect x="624" width="8" height="8" fill="#c76000"/><rect x="632" width="8" height="8" fill="#c75f00"/><rect x="640" width="8" height="8" fill="#c75d00"/><rect x="648" width="8" height="8" fill="#c75c00"/><rect x="656" width="8" height="8" fill="#c75b00"/><rect x="664" width="8" height="8" fill="#c75a00"/><rect x="672" width="8" height="8" fill="#c75800"/><rect x="680" width="8" height="8" fill="#c75700"/></g><g transform="translate(0 440)"><rect x="96" width="8" height="8" fill="#00c7bb"/><rect x="104" width="8" height="8" fill="#00c7bb"/><rect x="112" width="8" height="8" fill="#01c7bb"/><rect x="120" width="8" height="8" fill="#01c7ba"/><rect x="128" width="8" height="8" fill="#01c7ba"/><rect x="136" width="8" height="8" fill="#02c7ba"/><rect x="144" width="8" height="8" fill="#02c7b9"/><rect x="152" width="8" height="8" fill="#03c7b9"/><rect x="160" width="8" height="8" fill="#04c7b9"/><rect x="168" width="8" height="8" fill="#05c7b8"/><rect x="176" width="8" height="8" fill="#07c7b8"/><rect x="184" width="8" height="8" fill="#08c7b8"/><rect x="192" width="8" height="8" fill="#0bc7b7"/><rect x="200" width="8" height="8" fill="#0dc7b7"/><rect x="208" width="8" height="8" fill="#10c7b7"/><rect x="216" width="8" height="8" fill="#14c7b6"/><rect x="224" width="8" height="8" fill="#18c7b6"/><rect x="232" width="8" height="8" fill="#1dc7b6"/><rect x="240" width="8" height="8" fill="#22c7b5"/><rect x="248" width="8" height="8" fill="#28c7b5"/><rect x="256" width="8" height="8" fill="#2ec7b5"/><rect x="264" width="8" height="8" fill="#35c7b5"/><rect x="272" width="8" height="8" fill="#3cc7b5"/><rect x="280" width="8" height="8" fill="#43c7b5"/><rect x="288" width="8" height="8" fill="#4ac7b5"/><rect x="296" width="8" height="8" fill="#52c7b5"/><rect x="304" width="8" height="8" fill="#59c7b4"/><rect x="312" width="8" height="8" fill="#60c7b4"/><rect x="320" width="8" height="8" fill="#72c7b4"/><rect x="328" width="8" height="8" fill="#87c7b5"/><rect x="336" width="8" height="8" fill="#93c7b5"/><rect x="344" width="8" height="8" fill="#9cc7b6"/><rect x="352" width="8" height="8" fill="#a3c7b6"/><rect x="360" width="8" height="8" fill="#a8c7b6"/><rect x="368" width="8" height="8" fill="#adc7b6"/><rect x="376" width="8" height="8" fill="#b0c7b5"/><rect x="384" width="8" height="8" fill="#b4c7b4"/><rect x="392" width="8" height="8" fill="#b7c7b3"/><rect x="400" width="8" height="8" fill="#bac7b1"/><rect x="408" width="8" height="8" fill="#bec7af"/><rect x="416" width="8" height="8" fill="#c2c7ad"/><rect x="424" width="8" height="8" fill="#c6c7ab"/><rect x="432" width="8" height="8" fill="#c7c3a5"/><rect x="440" width="8" height="8" fill="#c7be9f"/><rect x="448" width="8" height="8" fill="#c7b999"/><rect x="456" width="8" height="8" fill="#c7b492"/><rect x="464" width="8" height="8" fill="#c7af8b"/><rect x="472" width="8" height="8" fill="#c7a984"/><rect x="480" width="8" height="8" fill="#c7a47d"/><rect x="488" width="8" height="8" fill="#c79f76"/><rect x="496" width="8" height="8" fill="#c79970"/><rect x="504" width="8" height="8" fill="#c79469"/><rect x="512" width="8" height="8" fill="#c78f63"/><rect x="520" width="8" height="8" fill="#c78b5d"/><rect x="528" width="8" height="8" fill="#c78657"/><rect x="536" width="8" height="8" fill="#c78152"/><rect x="544" width="8" height="8" fill="#c77d4c"/><rect x="552" width="8" height="8" fill="#c77947"/><rect x="560" width="8" height="8" fill="#c77541"/><rect x="568" width="8" height="8" fill="#c7723c"/><rect x="576" width="8" height="8" fill="#c76e37"/><rect x="584" width="8" height="8" fill="#c76b32"/><rect x="592" width="8" height="8" fill="#c7672c"/><rect x="600" width="8" height="8" fill="#c76427"/><rect x="608" width="8" height="8" fill="#c76120"/><rect x="616" width="8" height="8" fill="#c75e19"/><rect x="624" width="8" height="8" fill="#c75b0f"/><rect x="632" width="8" height="8" fill="#c75800"/><rect x="640" width="8" height="8" fill="#c75700"/><rect x="648" width="8" height="8" fill="#c75600"/><rect x="656" width="8" height="8" fill="#c75400"/><rect x="664" width="8" height="8" fill="#c75300"/><rect x="672" width="8" height="8" fill="#c75200"/><rect x="680" width="8" height="8" fill="#c75100"/><rect x="688" width="8" height="8" fill="#c75000"/></g><g transform="translate(0 448)"><rect x="96" width="8" height="8" fill="#00c7bd"/><rect x="104" width="8" height="8" fill="#00c7bd"/><rect x="112" width="8" height="8" fill="#01c7bd"/><rect x="120" width="8" height="8" fill="#01c7bc"/><rect x="128" width="8" height="8" fill="#01c7bc"/><rect x="136" width="8" height="8" fill="#02c7bc"/><rect x="144" width="8" height="8" fill="#02c7bc"/><rect x="152" width="8" height="8" fill="#03c7bb"/><rect x="160" width="8" height="8" fill="#04c7bb"/><rect x="168" width="8" height="8" fill="#05c7bb"/><rect x="176" width="8" height="8" fill="#07c7ba"/><rect x="184" width="8" height="8" fill="#09c7ba"/><rect x="192" width="8" height="8" fill="#0bc7ba"/><rect x="200" width="8" height="8" fill="#0ec7b9"/><rect x="208" width="8" height="8" fill="#11c7b9"/><rect x="216" width="8" height="8" fill="#15c7b9"/><rect x="224" width="8" height="8" fill="#19c7b9"/><rect x="232" width="8" height="8" fill="#1ec7b8"/><rect x="240" width="8" height="8" fill="#24c7b8"/><rect x="248" width="8" height="8" fill="#2ac7b8"/><rect x="256" width="8" height="8" fill="#31c7b8"/><rect x="264" width="8" height="8" fill="#38c7b8"/><rect x="272" width="8" height="8" fill="#3fc7b8"/><rect x="280" width="8" height="8" fill="#47c7b8"/><rect x="288" width="8" height="8" fill="#4fc7b8"/><rect x="296" width="8" height="8" fill="#57c7b8"/><rect x="304" width="8" height="8" fill="#5fc7b8"/><rect x="312" width="8" height="8" fill="#66c7b8"/><rect x="320" width="8" height="8" fill="#80c7b8"/><rect x="328" width="8" height="8" fill="#90c7b9"/><rect x="336" width="8" height="8" fill="#9bc7b9"/><rect x="344" width="8" height="8" fill="#a2c7ba"/><rect x="352" width="8" height="8" fill="#a9c7ba"/><rect x="360" width="8" height="8" fill="#adc7ba"/><rect x="368" width="8" height="8" fill="#b1c7ba"/><rect x="376" width="8" height="8" fill="#b5c7b9"/><rect x="384" width="8" height="8" fill="#b8c7b8"/><rect x="392" width="8" height="8" fill="#bbc7b7"/><rect x="400" width="8" height="8" fill="#bec7b6"/><rect x="408" width="8" height="8" fill="#c1c7b4"/><rect x="416" width="8" height="8" fill="#c5c7b2"/><rect x="424" width="8" height="8" fill="#c7c4ae"/><rect x="432" width="8" height="8" fill="#c7c0a8"/><rect x="440" width="8" height="8" fill="#c7bba2"/><rect x="448" width="8" height="8" fill="#c7b69c"/><rect x="456" width="8" height="8" fill="#c7b195"/><rect x="464" width="8" height="8" fill="#c7ab8f"/><rect x="472" width="8" height="8" fill="#c7a688"/><rect x="480" width="8" height="8" fill="#c7a181"/><rect x="488" width="8" height="8" fill="#c79b7a"/><rect x="496" width="8" height="8" fill="#c79674"/><rect x="504" width="8" height="8" fill="#c7916d"/><rect x="512" width="8" height="8" fill="#c78b67"/><rect x="520" width="8" height="8" fill="#c78761"/><rect x="528" width="8" height="8" fill="#c7825c"/><rect x="536" width="8" height="8" fill="#c77d56"/><rect x="544" width="8" height="8" fill="#c77951"/><rect x="552" width="8" height="8" fill="#c7754c"/><rect x="560" width="8" height="8" fill="#c77147"/><rect x="568" width="8" height="8" fill="#c76d42"/><rect x="576" width="8" height="8" fill="#c76a3d"/><rect x="584" width="8" height="8" fill="#c76638"/><rect x="592" width="8" height="8" fill="#c76333"/><rect x="600" width="8" height="8" fill="#c7602e"/><rect x="608" width="8" height="8" fill="#c75c29"/><rect x="616" width="8" height="8" fill="#c75923"/><rect x="624" width="8" height="8" fill="#c7561d"/><rect x="632" width="8" height="8" fill="#c75415"/><rect x="640" width="8" height="8" fill="#c7510a"/><rect x="648" width="8" height="8" fill="#c74e00"/><rect x="656" width="8" height="8" fill="#c74d00"/><rect x="664" width="8" height="8" fill="#c74c00"/><rect x="672" width="8" height="8" fill="#c74b00"/><rect x="680" width="8" height="8" fill="#c74a00"/><rect x="688" width="8" height="8" fill="#c74900"/><rect x="696" width="8" height="8" fill="#c74800"/><rect x="704" width="8" height="8" fill="#c74700"/></g><g transform="translate(0 456)"><rect x="104" width="8" height="8" fill="#01c7bf"/><rect x="112" width="8" height="8" fill="#01c7bf"/><rect x="120" width="8" height="8" fill="#01c7be"/><rect x="128" width="8" height="8" fill="#01c7be"/><rect x="136" width="8" height="8" fill="#02c7be"/><rect x="144" width="8" height="8" fill="#03c7be"/><rect x="152" width="8" height="8" fill="#03c7bd"/><rect x="160" width="8" height="8" fill="#04c7bd"/><rect x="168" width="8" height="8" fill="#06c7bd"/><rect x="176" width="8" height="8" fill="#07c7bd"/><rect x="184" width="8" height="8" fill="#09c7bc"/><rect x="192" width="8" height="8" fill="#0cc7bc"/><rect x="200" width="8" height="8" fill="#0fc7bc"/><rect x="208" width="8" height="8" fill="#12c7bc"/><rect x="216" width="8" height="8" fill="#16c7bb"/><rect x="224" width="8" height="8" fill="#1bc7bb"/><rect x="232" width="8" height="8" fill="#20c7bb"/><rect x="240" width="8" height="8" fill="#26c7bb"/><rect x="248" width="8" height="8" fill="#2cc7bb"/><rect x="256" width="8" height="8" fill="#33c7bb"/><rect x="264" width="8" height="8" fill="#3bc7bb"/><rect x="272" width="8" height="8" fill="#43c7bb"/><rect x="280" width="8" height="8" fill="#4bc7bb"/><rect x="288" width="8" height="8" fill="#53c7bb"/><rect x="296" width="8" height="8" fill="#5cc7bb"/><rect x="304" width="8" height="8" fill="#64c7bb"/><rect x="312" width="8" height="8" fill="#6bc7bb"/><rect x="320" width="8" height="8" fill="#8ac7bc"/><rect x="328" width="8" height="8" fill="#97c7bc"/><rect x="336" width="8" height="8" fill="#a1c7bd"/><rect x="344" width="8" height="8" fill="#a8c7bd"/><rect x="352" width="8" height="8" fill="#aec7bd"/><rect x="360" width="8" height="8" fill="#b2c7bd"/><rect x="368" width="8" height="8" fill="#b6c7bd"/><rect x="376" width="8" height="8" fill="#b9c7bd"/><rect x="384" width="8" height="8" fill="#bbc7bc"/><rect x="392" width="8" height="8" fill="#bec7bb"/><rect x="400" width="8" height="8" fill="#c1c7ba"/><rect x="408" width="8" height="8" fill="#c5c7b9"/><rect x="416" width="8" height="8" fill="#c7c5b6"/><rect x="424" width="8" height="8" fill="#c7c1b1"/><rect x="432" width="8" height="8" fill="#c7bdab"/><rect x="440" width="8" height="8" fill="#c7b8a5"/><rect x="448" width="8" height="8" fill="#c7b39f"/><rect x="456" width="8" height="8" fill="#c7ae98"/><rect x="464" width="8" height="8" fill="#c7a892"/><rect x="472" width="8" height="8" fill="#c7a38b"/><rect x="480" width="8" height="8" fill="#c79d84"/><rect x="488" width="8" height="8" fill="#c7977e"/><rect x="496" width="8" height="8" fill="#c79277"/><rect x="504" width="8" height="8" fill="#c78d71"/><rect x="512" width="8" height="8" fill="#c7876b"/><rect x="520" width="8" height="8" fill="#c78265"/><rect x="528" width="8" height="8" fill="#c77e60"/><rect x="536" width="8" height="8" fill="#c7795a"/><rect x="544" width="8" height="8" fill="#c77555"/><rect x="552" width="8" height="8" fill="#c77050"/><rect x="560" width="8" height="8" fill="#c76c4b"/><rect x="568" width="8" height="8" fill="#c76946"/><rect x="576" width="8" height="8" fill="#c76542"/><rect x="584" width="8" height="8" fill="#c7623d"/><rect x="592" width="8" height="8" fill="#c75e39"/><rect x="600" width="8" height="8" fill="#c75b34"/><rect x="608" width="8" height="8" fill="#c75830"/><rect x="616" width="8" height="8" fill="#c7552b"/><rect x="624" width="8" height="8" fill="#c75226"/><rect x="632" width="8" height="8" fill="#c74f20"/><rect x="640" width="8" height="8" fill="#c74c1a"/><rect x="648" width="8" height="8" fill="#c74912"/><rect x="656" width="8" height="8" fill="#c74605"/><rect x="664" width="8" height="8" fill="#c74400"/><rect x="672" width="8" height="8" fill="#c74300"/><rect x="680" width="8" height="8" fill="#c74200"/><rect x="688" width="8" height="8" fill="#c74200"/><rect x="696" width="8" height="8" fill="#c74100"/><rect x="704" width="8" height="8" fill="#c74000"/><rect x="712" width="8" height="8" fill="#c73f00"/></g><g transform="translate(0 464)"><rect x="104" width="8" height="8" fill="#01c7c1"/><rect x="112" width="8" height="8" fill="#01c7c1"/><rect x="120" width="8" height="8" fill="#01c7c0"/><rect x="128" width="8" height="8" fill="#01c7c0"/><rect x="136" width="8" height="8" fill="#02c7c0"/><rect x="144" width="8" height="8" fill="#03c7c0"/><rect x="152" width="8" height="8" fill="#03c7c0"/><rect x="160" width="8" height="8" fill="#05c7bf"/><rect x="168" width="8" height="8" fill="#06c7bf"/><rect x="176" width="8" height="8" fill="#08c7bf"/><rect x="184" width="8" height="8" fill="#0ac7bf"/><rect x="192" width="8" height="8" fill="#0cc7bf"/><rect x="200" width="8" height="8" fill="#0fc7bf"/><rect x="208" width="8" height="8" fill="#13c7be"/><rect x="216" width="8" height="8" fill="#17c7be"/><rect x="224" width="8" height="8" fill="#1cc7be"/><rect x="232" width="8" height="8" fill="#21c7be"/><rect x="240" width="8" height="8" fill="#28c7be"/><rect x="248" width="8" height="8" fill="#2ec7be"/><rect x="256" width="8" height="8" fill="#36c7be"/><rect x="264" width="8" height="8" fill="#3dc7be"/><rect x="272" width="8" height="8" fill="#46c7be"/><rect x="280" width="8" height="8" fill="#4ec7be"/><rect x="288" width="8" height="8" fill="#57c7be"/><rect x="296" width="8" height="8" fill="#60c7be"/><rect x="304" width="8" height="8" fill="#68c7be"/><rect x="312" width="8" height="8" fill="#7ec7be"/><rect x="320" width="8" height="8" fill="#92c7bf"/><rect x="328" width="8" height="8" fill="#9ec7bf"/><rect x="336" width="8" height="8" fill="#a6c7c0"/><rect x="344" width="8" height="8" fill="#adc7c0"/><rect x="352" width="8" height="8" fill="#b2c7c0"/><rect x="360" width="8" height="8" fill="#b6c7c0"/><rect x="368" width="8" height="8" fill="#b9c7c0"/><rect x="376" width="8" height="8" fill="#bcc7c0"/><rect x="384" width="8" height="8" fill="#bfc7bf"/><rect x="392" width="8" height="8" fill="#c1c7bf"/><rect x="400" width="8" height="8" fill="#c4c7be"/><rect x="408" width="8" height="8" fill="#c7c6bc"/><rect x="416" width="8" height="8" fill="#c7c2b7"/><rect x="424" width="8" height="8" fill="#c7beb2"/><rect x="432" width="8" height="8" fill="#c7baad"/><rect x="440" width="8" height="8" fill="#c7b5a7"/><rect x="448" width="8" height="8" fill="#c7b0a1"/><rect x="456" width="8" height="8" fill="#c7aa9b"/><rect x="464" width="8" height="8" fill="#c7a595"/><rect x="472" width="8" height="8" fill="#c79f8e"/><rect x="480" width="8" height="8" fill="#c79987"/><rect x="488" width="8" height="8" fill="#c79481"/><rect x="496" width="8" height="8" fill="#c78e7b"/><rect x="504" width="8" height="8" fill="#c78974"/><rect x="512" width="8" height="8" fill="#c7836e"/><rect x="520" width="8" height="8" fill="#c77e69"/><rect x="528" width="8" height="8" fill="#c77963"/><rect x="536" width="8" height="8" fill="#c7755e"/><rect x="544" width="8" height="8" fill="#c77059"/><rect x="552" width="8" height="8" fill="#c76c54"/><rect x="560" width="8" height="8" fill="#c7684f"/><rect x="568" width="8" height="8" fill="#c7644b"/><rect x="576" width="8" height="8" fill="#c76046"/><rect x="584" width="8" height="8" fill="#c75d42"/><rect x="592" width="8" height="8" fill="#c7593e"/><rect x="600" width="8" height="8" fill="#c7563a"/><rect x="608" width="8" height="8" fill="#c75335"/><rect x="616" width="8" height="8" fill="#c75031"/><rect x="624" width="8" height="8" fill="#c74d2d"/><rect x="632" width="8" height="8" fill="#c74928"/><rect x="640" width="8" height="8" fill="#c74623"/><rect x="648" width="8" height="8" fill="#c7431d"/><rect x="656" width="8" height="8" fill="#c74017"/><rect x="664" width="8" height="8" fill="#c73d0e"/><rect x="672" width="8" height="8" fill="#c73a00"/><rect x="680" width="8" height="8" fill="#c73900"/><rect x="688" width="8" height="8" fill="#c73900"/><rect x="696" width="8" height="8" fill="#c73800"/><rect x="704" width="8" height="8" fill="#c73700"/><rect x="712" width="8" height="8" fill="#c73600"/><rect x="720" width="8" height="8" fill="#c73600"/><rect x="728" width="8" height="8" fill="#c73500"/></g><g transform="translate(0 472)"><rect x="104" width="8" height="8" fill="#01c7c3"/><rect x="112" width="8" height="8" fill="#01c7c3"/><rect x="120" width="8" height="8" fill="#01c7c2"/><rect x="128" width="8" height="8" fill="#01c7c2"/><rect x="136" width="8" height="8" fill="#02c7c2"/><rect x="144" width="8" height="8" fill="#03c7c2"/><rect x="152" width="8" height="8" fill="#04c7c2"/><rect x="160" width="8" height="8" fill="#05c7c2"/><rect x="168" width="8" height="8" fill="#06c7c2"/><rect x="176" width="8" height="8" fill="#08c7c2"/><rect x="184" width="8" height="8" fill="#0ac7c1"/><rect x="192" width="8" height="8" fill="#0dc7c1"/><rect x="200" width="8" height="8" fill="#10c7c1"/><rect x="208" width="8" height="8" fill="#14c7c1"/><rect x="216" width="8" height="8" fill="#18c7c1"/><rect x="224" width="8" height="8" fill="#1dc7c1"/><rect x="232" width="8" height="8" fill="#22c7c1"/><rect x="240" width="8" height="8" fill="#29c7c1"/><rect x="248" width="8" height="8" fill="#30c7c1"/><rect x="256" width="8" height="8" fill="#37c7c1"/><rect x="264" width="8" height="8" fill="#3fc7c1"/><rect x="272" width="8" height="8" fill="#48c7c1"/><rect x="280" width="8" height="8" fill="#51c7c1"/><rect x="288" width="8" height="8" fill="#5ac7c1"/><rect x="296" width="8" height="8" fill="#63c7c1"/><rect x="304" width="8" height="8" fill="#6bc7c1"/><rect x="312" width="8" height="8" fill="#88c7c1"/><rect x="320" width="8" height="8" fill="#98c7c2"/><rect x="328" width="8" height="8" fill="#a3c7c2"/><rect x="336" width="8" height="8" fill="#abc7c2"/><rect x="344" width="8" height="8" fill="#b1c7c3"/><rect x="352" width="8" height="8" fill="#b5c7c3"/><rect x="360" width="8" height="8" fill="#b9c7c3"/><rect x="368" width="8" height="8" fill="#bcc7c3"/><rect x="376" width="8" height="8" fill="#bfc7c2"/><rect x="384" width="8" height="8" fill="#c1c7c2"/><rect x="392" width="8" height="8" fill="#c4c7c2"/><rect x="400" width="8" height="8" fill="#c7c7c1"/><rect x="408" width="8" height="8" fill="#c7c3bd"/><rect x="416" width="8" height="8" fill="#c7c0b9"/><rect x="424" width="8" height="8" fill="#c7bbb4"/><rect x="432" width="8" height="8" fill="#c7b7af"/><rect x="440" width="8" height="8" fill="#c7b2a9"/><rect x="448" width="8" height="8" fill="#c7ada3"/><rect x="456" width="8" height="8" fill="#c7a79d"/><rect x="464" width="8" height="8" fill="#c7a297"/><rect x="472" width="8" height="8" fill="#c79c91"/><rect x="480" width="8" height="8" fill="#c7968a"/><rect x="488" width="8" height="8" fill="#c79084"/><rect x="496" width="8" height="8" fill="#c78a7d"/><rect x="504" width="8" height="8" fill="#c78577"/><rect x="512" width="8" height="8" fill="#c77f71"/><rect x="520" width="8" height="8" fill="#c77a6c"/><rect x="528" width="8" height="8" fill="#c77566"/><rect x="536" width="8" height="8" fill="#c77061"/><rect x="544" width="8" height="8" fill="#c76c5c"/><rect x="552" width="8" height="8" fill="#c76758"/><rect x="560" width="8" height="8" fill="#c76353"/><rect x="568" width="8" height="8" fill="#c75f4f"/><rect x="576" width="8" height="8" fill="#c75b4a"/><rect x="584" width="8" height="8" fill="#c75846"/><rect x="592" width="8" height="8" fill="#c75442"/><rect x="600" width="8" height="8" fill="#c7513e"/><rect x="608" width="8" height="8" fill="#c74e3a"/><rect x="616" width="8" height="8" fill="#c74a37"/><rect x="624" width="8" height="8" fill="#c74732"/><rect x="632" width="8" height="8" fill="#c7442e"/><rect x="640" width="8" height="8" fill="#c7412a"/><rect x="648" width="8" height="8" fill="#c73d25"/><rect x="656" width="8" height="8" fill="#c73a20"/><rect x="664" width="8" height="8" fill="#c7371a"/><rect x="672" width="8" height="8" fill="#c73413"/><rect x="680" width="8" height="8" fill="#c73009"/><rect x="688" width="8" height="8" fill="#c72e00"/><rect x="696" width="8" height="8" fill="#c72d00"/><rect x="704" width="8" height="8" fill="#c72c00"/><rect x="712" width="8" height="8" fill="#c72c00"/><rect x="720" width="8" height="8" fill="#c72b00"/><rect x="728" width="8" height="8" fill="#c72b00"/><rect x="736" width="8" height="8" fill="#c72a00"/></g><g transform="translate(0 480)"><rect x="112" width="8" height="8" fill="#01c7c5"/><rect x="120" width="8" height="8" fill="#01c7c5"/><rect x="128" width="8" height="8" fill="#02c7c5"/><rect x="136" width="8" height="8" fill="#02c7c5"/><rect x="144" width="8" height="8" fill="#03c7c4"/><rect x="152" width="8" height="8" fill="#04c7c4"/><rect x="160" width="8" height="8" fill="#05c7c4"/><rect x="168" width="8" height="8" fill="#06c7c4"/><rect x="176" width="8" height="8" fill="#08c7c4"/><rect x="184" width="8" height="8" fill="#0ac7c4"/><rect x="192" width="8" height="8" fill="#0dc7c4"/><rect x="200" width="8" height="8" fill="#10c7c4"/><rect x="208" width="8" height="8" fill="#14c7c4"/><rect x="216" width="8" height="8" fill="#18c7c4"/><rect x="224" width="8" height="8" fill="#1dc7c4"/><rect x="232" width="8" height="8" fill="#23c7c4"/><rect x="240" width="8" height="8" fill="#2ac7c4"/><rect x="248" width="8" height="8" fill="#31c7c4"/><rect x="256" width="8" height="8" fill="#39c7c4"/><rect x="264" width="8" height="8" fill="#41c7c4"/><rect x="272" width="8" height="8" fill="#4ac7c4"/><rect x="280" width="8" height="8" fill="#53c7c4"/><rect x="288" width="8" height="8" fill="#5cc7c4"/><rect x="296" width="8" height="8" fill="#65c7c4"/><rect x="304" width="8" height="8" fill="#74c7c4"/><rect x="312" width="8" height="8" fill="#8fc7c4"/><rect x="320" width="8" height="8" fill="#9dc7c4"/><rect x="328" width="8" height="8" fill="#a7c7c5"/><rect x="336" width="8" height="8" fill="#aec7c5"/><rect x="344" width="8" height="8" fill="#b4c7c5"/><rect x="352" width="8" height="8" fill="#b8c7c5"/><rect x="360" width="8" height="8" fill="#bcc7c5"/><rect x="368" width="8" height="8" fill="#bec7c5"/><rect x="376" width="8" height="8" fill="#c1c7c5"/><rect x="384" width="8" height="8" fill="#c4c7c5"/><rect x="392" width="8" height="8" fill="#c6c7c4"/><rect x="400" width="8" height="8" fill="#c7c4c2"/><rect x="408" width="8" height="8" fill="#c7c1be"/><rect x="416" width="8" height="8" fill="#c7bdba"/><rect x="424" width="8" height="8" fill="#c7b9b5"/><rect x="432" width="8" height="8" fill="#c7b4b0"/><rect x="440" width="8" height="8" fill="#c7afab"/><rect x="448" width="8" height="8" fill="#c7aaa5"/><rect x="456" width="8" height="8" fill="#c7a49f"/><rect x="464" width="8" height="8" fill="#c79e99"/><rect x="472" width="8" height="8" fill="#c79893"/><rect x="480" width="8" height="8" fill="#c7928c"/><rect x="488" width="8" height="8" fill="#c78c86"/><rect x="496" width="8" height="8" fill="#c78680"/><rect x="504" width="8" height="8" fill="#c7807a"/><rect x="512" width="8" height="8" fill="#c77b74"/><rect x="520" width="8" height="8" fill="#c7756f"/><rect x="528" width="8" height="8" fill="#c77069"/><rect x="536" width="8" height="8" fill="#c76b64"/><rect x="544" width="8" height="8" fill="#c7675f"/><rect x="552" width="8" height="8" fill="#c7625b"/><rect x="560" width="8" height="8" fill="#c75e56"/><rect x="568" width="8" height="8" fill="#c75a52"/><rect x="576" width="8" height="8" fill="#c7564e"/><rect x="584" width="8" height="8" fill="#c7524a"/><rect x="592" width="8" height="8" fill="#c74f46"/><rect x="600" width="8" height="8" fill="#c74b43"/><rect x="608" width="8" height="8" fill="#c7483f"/><rect x="616" width="8" height="8" fill="#c7443b"/><rect x="624" width="8" height="8" fill="#c74137"/><rect x="632" width="8" height="8" fill="#c73e34"/><rect x="640" width="8" height="8" fill="#c73a30"/><rect x="648" width="8" height="8" fill="#c7372c"/><rect x="656" width="8" height="8" fill="#c73327"/><rect x="664" width="8" height="8" fill="#c73023"/><rect x="672" width="8" height="8" fill="#c72c1e"/><rect x="680" width="8" height="8" fill="#c72818"/><rect x="688" width="8" height="8" fill="#c72410"/><rect x="696" width="8" height="8" fill="#c71f04"/><rect x="704" width="8" height="8" fill="#c71d00"/><rect x="712" width="8" height="8" fill="#c71d00"/><rect x="720" width="8" height="8" fill="#c71c00"/><rect x="728" width="8" height="8" fill="#c71c00"/><rect x="736" width="8" height="8" fill="#c71b00"/><rect x="744" width="8" height="8" fill="#c71b00"/></g><g transform="translate(0 488)"><rect x="112" width="8" height="8" fill="#01c7c7"/><rect x="120" width="8" height="8" fill="#01c7c7"/><rect x="128" width="8" height="8" fill="#02c7c7"/><rect x="136" width="8" height="8" fill="#02c7c7"/><rect x="144" width="8" height="8" fill="#03c7c7"/><rect x="152" width="8" height="8" fill="#04c7c7"/><rect x="160" width="8" height="8" fill="#05c7c7"/><rect x="168" width="8" height="8" fill="#06c7c7"/><rect x="176" width="8" height="8" fill="#08c7c7"/><rect x="184" width="8" height="8" fill="#0ac7c7"/><rect x="192" width="8" height="8" fill="#0dc7c7"/><rect x="200" width="8" height="8" fill="#10c7c7"/><rect x="208" width="8" height="8" fill="#14c7c7"/><rect x="216" width="8" height="8" fill="#19c7c7"/><rect x="224" width="8" height="8" fill="#1ec7c7"/><rect x="232" width="8" height="8" fill="#24c7c7"/><rect x="240" width="8" height="8" fill="#2ac7c7"/><rect x="248" width="8" height="8" fill="#31c7c7"/><rect x="256" width="8" height="8" fill="#39c7c7"/><rect x="264" width="8" height="8" fill="#41c7c7"/><rect x="272" width="8" height="8" fill="#4ac7c7"/><rect x="280" width="8" height="8" fill="#53c7c7"/><rect x="288" width="8" height="8" fill="#5dc7c7"/><rect x="296" width="8" height="8" fill="#66c7c7"/><rect x="304" width="8" height="8" fill="#80c7c7"/><rect x="312" width="8" height="8" fill="#94c7c7"/><rect x="320" width="8" height="8" fill="#a1c7c7"/><rect x="328" width="8" height="8" fill="#aac7c7"/><rect x="336" width="8" height="8" fill="#b1c7c7"/><rect x="344" width="8" height="8" fill="#b6c7c7"/><rect x="352" width="8" height="8" fill="#bac7c7"/><rect x="360" width="8" height="8" fill="#bec7c7"/><rect x="368" width="8" height="8" fill="#c1c7c7"/><rect x="376" width="8" height="8" fill="#c3c7c7"/><rect x="384" width="8" height="8" fill="#c6c7c7"/><rect x="392" width="8" height="8" fill="#c7c5c5"/><rect x="400" width="8" height="8" fill="#c7c2c2"/><rect x="408" width="8" height="8" fill="#c7bebf"/><rect x="416" width="8" height="8" fill="#c7babb"/><rect x="424" width="8" height="8" fill="#c7b6b6"/><rect x="432" width="8" height="8" fill="#c7b1b1"/><rect x="440" width="8" height="8" fill="#c7acac"/><rect x="448" width="8" height="8" fill="#c7a6a7"/><rect x="456" width="8" height="8" fill="#c7a0a1"/><rect x="464" width="8" height="8" fill="#c79a9b"/><rect x="472" width="8" height="8" fill="#c79495"/><rect x="480" width="8" height="8" fill="#c78e8e"/><rect x="488" width="8" height="8" fill="#c78888"/><rect x="496" width="8" height="8" fill="#c78282"/><rect x="504" width="8" height="8" fill="#c77c7c"/><rect x="512" width="8" height="8" fill="#c77677"/><rect x="520" width="8" height="8" fill="#c77171"/><rect x="528" width="8" height="8" fill="#c76b6c"/><rect x="536" width="8" height="8" fill="#c76667"/><rect x="544" width="8" height="8" fill="#c76262"/><rect x="552" width="8" height="8" fill="#c75d5e"/><rect x="560" width="8" height="8" fill="#c7595a"/><rect x="568" width="8" height="8" fill="#c75556"/><rect x="576" width="8" height="8" fill="#c75152"/><rect x="584" width="8" height="8" fill="#c74d4e"/><rect x="592" width="8" height="8" fill="#c7494a"/><rect x="600" width="8" height="8" fill="#c74546"/><rect x="608" width="8" height="8" fill="#c74243"/><rect x="616" width="8" height="8" fill="#c73e3f"/><rect x="624" width="8" height="8" fill="#c73b3c"/><rect x="632" width="8" height="8" fill="#c73738"/><rect x="640" width="8" height="8" fill="#c73335"/><rect x="648" width="8" height="8" fill="#c72f31"/><rect x="656" width="8" height="8" fill="#c72b2d"/><rect x="664" width="8" height="8" fill="#c72729"/><rect x="672" width="8" height="8" fill="#c72325"/><rect x="680" width="8" height="8" fill="#c71e20"/><rect x="688" width="8" height="8" fill="#c7181b"/><rect x="696" width="8" height="8" fill="#c71115"/><rect x="704" width="8" height="8" fill="#c7050d"/><rect x="712" width="8" height="8" fill="#c70008"/><rect x="720" width="8" height="8" fill="#c70008"/><rect x="728" width="8" height="8" fill="#c70008"/><rect x="736" width="8" height="8" fill="#c70008"/><rect x="744" width="8" height="8" fill="#c70008"/><rect x="752" width="8" height="8" fill="#c70008"/><rect x="760" width="8" height="8" fill="#c70008"/></g><g transform="translate(0 496)"><rect x="112" width="8" height="8" fill="#01c5c7"/><rect x="120" width="8" height="8" fill="#01c5c7"/><rect x="128" width="8" height="8" fill="#02c5c7"/><rect x="136" width="8" height="8" fill="#02c5c7"/><rect x="144" width="8" height="8" fill="#03c4c7"/><rect x="152" width="8" height="8" fill="#04c4c7"/><rect x="160" width="8" height="8" fill="#05c4c7"/><rect x="168" width="8" height="8" fill="#06c4c7"/><rect x="176" width="8" height="8" fill="#08c4c7"/><rect x="184" width="8" height="8" fill="#0ac4c7"/><rect x="192" width="8" height="8" fill="#0dc4c7"/><rect x="200" width="8" height="8" fill="#10c4c7"/><rect x="208" width="8" height="8" fill="#14c4c7"/><rect x="216" width="8" height="8" fill="#19c4c7"/><rect x="224" width="8" height="8" fill="#1ec4c7"/><rect x="232" width="8" height="8" fill="#24c4c7"/><rect x="240" width="8" height="8" fill="#2ac4c7"/><rect x="248" width="8" height="8" fill="#31c4c7"/><rect x="256" width="8" height="8" fill="#39c3c7"/><rect x="264" width="8" height="8" fill="#41c3c7"/><rect x="272" width="8" height="8" fill="#4ac3c7"/><rect x="280" width="8" height="8" fill="#53c3c7"/><rect x="288" width="8" height="8" fill="#5dc3c7"/><rect x="296" width="8" height="8" fill="#66c3c7"/><rect x="304" width="8" height="8" fill="#86c4c7"/><rect x="312" width="8" height="8" fill="#97c4c7"/><rect x="320" width="8" height="8" fill="#a3c4c7"/><rect x="328" width="8" height="8" fill="#abc4c7"/><rect x="336" width="8" height="8" fill="#b2c5c7"/><rect x="344" width="8" height="8" fill="#b7c5c7"/><rect x="352" width="8" height="8" fill="#bbc5c7"/><rect x="360" width="8" height="8" fill="#bec5c7"/><rect x="368" width="8" height="8" fill="#c1c5c7"/><rect x="376" width="8" height="8" fill="#c3c5c7"/><rect x="384" width="8" height="8" fill="#c6c4c7"/><rect x="392" width="8" height="8" fill="#c7c3c5"/><rect x="400" width="8" height="8" fill="#c7bfc2"/><rect x="408" width="8" height="8" fill="#c7bcbf"/><rect x="416" width="8" height="8" fill="#c7b8bb"/><rect x="424" width="8" height="8" fill="#c7b3b7"/><rect x="432" width="8" height="8" fill="#c7aeb2"/><rect x="440" width="8" height="8" fill="#c7a9ad"/><rect x="448" width="8" height="8" fill="#c7a3a8"/><rect x="456" width="8" height="8" fill="#c79da2"/><rect x="464" width="8" height="8" fill="#c7969c"/><rect x="472" width="8" height="8" fill="#c79096"/><rect x="480" width="8" height="8" fill="#c78a90"/><rect x="488" width="8" height="8" fill="#c7838a"/><rect x="496" width="8" height="8" fill="#c77d84"/><rect x="504" width="8" height="8" fill="#c7777f"/><rect x="512" width="8" height="8" fill="#c77179"/><rect x="520" width="8" height="8" fill="#c76c74"/><rect x="528" width="8" height="8" fill="#c7666f"/><rect x="536" width="8" height="8" fill="#c7616a"/><rect x="544" width="8" height="8" fill="#c75c65"/><rect x="552" width="8" height="8" fill="#c75761"/><rect x="560" width="8" height="8" fill="#c7535d"/><rect x="568" width="8" height="8" fill="#c74f59"/><rect x="576" width="8" height="8" fill="#c74b55"/><rect x="584" width="8" height="8" fill="#c74751"/><rect x="592" width="8" height="8" fill="#c7434d"/><rect x="600" width="8" height="8" fill="#c73f4a"/><rect x="608" width="8" height="8" fill="#c73b47"/><rect x="616" width="8" height="8" fill="#c73743"/><rect x="624" width="8" height="8" fill="#c73340"/><rect x="632" width="8" height="8" fill="#c72f3d"/><rect x="640" width="8" height="8" fill="#c72b39"/><rect x="648" width="8" height="8" fill="#c72636"/><rect x="656" width="8" height="8" fill="#c72232"/><rect x="664" width="8" height="8" fill="#c71c2f"/><rect x="672" width="8" height="8" fill="#c7162b"/><rect x="680" width="8" height="8" fill="#c70d27"/><rect x="688" width="8" height="8" fill="#c70023"/><rect x="696" width="8" height="8" fill="#c70022"/><rect x="704" width="8" height="8" fill="#c70022"/><rect x="712" width="8" height="8" fill="#c70021"/><rect x="720" width="8" height="8" fill="#c70021"/><rect x="728" width="8" height="8" fill="#c70021"/><rect x="736" width="8" height="8" fill="#c70020"/><rect x="744" width="8" height="8" fill="#c70020"/><rect x="752" width="8" height="8" fill="#c70020"/><rect x="760" width="8" height="8" fill="#c7001f"/><rect x="768" width="8" height="8" fill="#c7001f"/></g><g transform="translate(0 504)"><rect x="112" width="8" height="8" fill="#01c2c7"/><rect x="120" width="8" height="8" fill="#01c2c7"/><rect x="128" width="8" height="8" fill="#02c2c7"/><rect x="136" width="8" height="8" fill="#02c2c7"/><rect x="144" width="8" height="8" fill="#03c2c7"/><rect x="152" width="8" height="8" fill="#04c2c7"/><rect x="160" width="8" height="8" fill="#05c2c7"/><rect x="168" width="8" height="8" fill="#06c1c7"/><rect x="176" width="8" height="8" fill="#08c1c7"/><rect x="184" width="8" height="8" fill="#0ac1c7"/><rect x="192" width="8" height="8" fill="#0dc1c7"/><rect x="200" width="8" height="8" fill="#10c1c7"/><rect x="208" width="8" height="8" fill="#14c1c7"/><rect x="216" width="8" height="8" fill="#18c1c7"/><rect x="224" width="8" height="8" fill="#1dc0c7"/><rect x="232" width="8" height="8" fill="#23c0c7"/><rect x="240" width="8" height="8" fill="#2ac0c7"/><rect x="248" width="8" height="8" fill="#31c0c7"/><rect x="256" width="8" height="8" fill="#39c0c7"/><rect x="264" width="8" height="8" fill="#41c0c7"/><rect x="272" width="8" height="8" fill="#4ac0c7"/><rect x="280" width="8" height="8" fill="#53c0c7"/><rect x="288" width="8" height="8" fill="#5cc0c7"/><rect x="296" width="8" height="8" fill="#70c0c7"/><rect x="304" width="8" height="8" fill="#8ac1c7"/><rect x="312" width="8" height="8" fill="#99c1c7"/><rect x="320" width="8" height="8" fill="#a3c1c7"/><rect x="328" width="8" height="8" fill="#acc2c7"/><rect x="336" width="8" height="8" fill="#b2c2c7"/><rect x="344" width="8" height="8" fill="#b7c2c7"/><rect x="352" width="8" height="8" fill="#bbc3c7"/><rect x="360" width="8" height="8" fill="#bec3c7"/><rect x="368" width="8" height="8" fill="#c0c3c7"/><rect x="376" width="8" height="8" fill="#c3c2c7"/><rect x="384" width="8" height="8" fill="#c5c2c7"/><rect x="392" width="8" height="8" fill="#c7c0c6"/><rect x="400" width="8" height="8" fill="#c7bdc3"/><rect x="408" width="8" height="8" fill="#c7b9bf"/><rect x="416" width="8" height="8" fill="#c7b5bc"/><rect x="424" width="8" height="8" fill="#c7b0b7"/><rect x="432" width="8" height="8" fill="#c7abb3"/><rect x="440" width="8" height="8" fill="#c7a5ae"/><rect x="448" width="8" height="8" fill="#c79fa9"/><rect x="456" width="8" height="8" fill="#c799a3"/><rect x="464" width="8" height="8" fill="#c7929d"/><rect x="472" width="8" height="8" fill="#c78c97"/><rect x="480" width="8" height="8" fill="#c78592"/><rect x="488" width="8" height="8" fill="#c77e8c"/><rect x="496" width="8" height="8" fill="#c77886"/><rect x="504" width="8" height="8" fill="#c77280"/><rect x="512" width="8" height="8" fill="#c76c7b"/><rect x="520" width="8" height="8" fill="#c76676"/><rect x="528" width="8" height="8" fill="#c76171"/><rect x="536" width="8" height="8" fill="#c75b6c"/><rect x="544" width="8" height="8" fill="#c75668"/><rect x="552" width="8" height="8" fill="#c75163"/><rect x="560" width="8" height="8" fill="#c74d5f"/><rect x="568" width="8" height="8" fill="#c7485b"/><rect x="576" width="8" height="8" fill="#c74458"/><rect x="584" width="8" height="8" fill="#c74054"/><rect x="592" width="8" height="8" fill="#c73c51"/><rect x="600" width="8" height="8" fill="#c7374d"/><rect x="608" width="8" height="8" fill="#c7334a"/><rect x="616" width="8" height="8" fill="#c72f47"/><rect x="624" width="8" height="8" fill="#c72a44"/><rect x="632" width="8" height="8" fill="#c72640"/><rect x="640" width="8" height="8" fill="#c7203d"/><rect x="648" width="8" height="8" fill="#c71a3a"/><rect x="656" width="8" height="8" fill="#c71337"/><rect x="664" width="8" height="8" fill="#c70833"/><rect x="672" width="8" height="8" fill="#c70031"/><rect x="680" width="8" height="8" fill="#c70031"/><rect x="688" width="8" height="8" fill="#c70030"/><rect x="696" width="8" height="8" fill="#c7002f"/><rect x="704" width="8" height="8" fill="#c7002f"/><rect x="712" width="8" height="8" fill="#c7002e"/><rect x="720" width="8" height="8" fill="#c7002e"/><rect x="728" width="8" height="8" fill="#c7002d"/><rect x="736" width="8" height="8" fill="#c7002d"/><rect x="744" width="8" height="8" fill="#c7002c"/><rect x="752" width="8" height="8" fill="#c7002c"/><rect x="760" width="8" height="8" fill="#c7002b"/><rect x="768" width="8" height="8" fill="#c7002b"/><rect x="776" width="8" height="8" fill="#c7002a"/></g><g transform="translate(0 512)"><rect x="120" width="8" height="8" fill="#01c0c7"/><rect x="128" width="8" height="8" fill="#01c0c7"/><rect x="136" width="8" height="8" fill="#02c0c7"/><rect x="144" width="8" height="8" fill="#03bfc7"/><rect x="152" width="8" height="8" fill="#04bfc7"/><rect x="160" width="8" height="8" fill="#05bfc7"/><rect x="168" width="8" height="8" fill="#06bfc7"/><rect x="176" width="8" height="8" fill="#08bec7"/><rect x="184" width="8" height="8" fill="#0abec7"/><rect x="192" width="8" height="8" fill="#0dbec7"/><rect x="200" width="8" height="8" fill="#10bec7"/><rect x="208" width="8" height="8" fill="#14bdc7"/><rect x="216" width="8" height="8" fill="#18bdc7"/><rect x="224" width="8" height="8" fill="#1dbdc7"/><rect x="232" width="8" height="8" fill="#22bdc7"/><rect x="240" width="8" height="8" fill="#29bdc7"/><rect x="248" width="8" height="8" fill="#30bdc7"/><rect x="256" width="8" height="8" fill="#37bcc7"/><rect x="264" width="8" height="8" fill="#3fbcc7"/><rect x="272" width="8" height="8" fill="#48bcc7"/><rect x="280" width="8" height="8" fill="#51bcc7"/><rect x="288" width="8" height="8" fill="#5abcc7"/><rect x="296" width="8" height="8" fill="#78bdc7"/><rect x="304" width="8" height="8" fill="#8cbdc7"/><rect x="312" width="8" height="8" fill="#99bec7"/><rect x="320" width="8" height="8" fill="#a4bfc7"/><rect x="328" width="8" height="8" fill="#abbfc7"/><rect x="336" width="8" height="8" fill="#b2c0c7"/><rect x="344" width="8" height="8" fill="#b6c0c7"/><rect x="352" width="8" height="8" fill="#bac0c7"/><rect x="360" width="8" height="8" fill="#bdc0c7"/><rect x="368" width="8" height="8" fill="#c0c0c7"/><rect x="376" width="8" height="8" fill="#c3c0c7"/><rect x="384" width="8" height="8" fill="#c5bfc7"/><rect x="392" width="8" height="8" fill="#c7bdc6"/><rect x="400" width="8" height="8" fill="#c7bac3"/><rect x="408" width="8" height="8" fill="#c7b6bf"/><rect x="416" width="8" height="8" fill="#c7b1bc"/><rect x="424" width="8" height="8" fill="#c7acb8"/><rect x="432" width="8" height="8" fill="#c7a7b3"/><rect x="440" width="8" height="8" fill="#c7a1ae"/><rect x="448" width="8" height="8" fill="#c79ba9"/><rect x="456" width="8" height="8" fill="#c794a4"/><rect x="464" width="8" height="8" fill="#c78d9e"/><rect x="472" width="8" height="8" fill="#c78799"/><rect x="480" width="8" height="8" fill="#c78093"/><rect x="488" width="8" height="8" fill="#c7798d"/><rect x="496" width="8" height="8" fill="#c77387"/><rect x="504" width="8" height="8" fill="#c76c82"/><rect x="512" width="8" height="8" fill="#c7667d"/><rect x="520" width="8" height="8" fill="#c76078"/><rect x="528" width="8" height="8" fill="#c75a73"/><rect x="536" width="8" height="8" fill="#c7556e"/><rect x="544" width="8" height="8" fill="#c7506a"/><rect x="552" width="8" height="8" fill="#c74b66"/><rect x="560" width="8" height="8" fill="#c74662"/><rect x="568" width="8" height="8" fill="#c7415e"/><rect x="576" width="8" height="8" fill="#c73d5a"/><rect x="584" width="8" height="8" fill="#c73857"/><rect x="592" width="8" height="8" fill="#c73353"/><rect x="600" width="8" height="8" fill="#c72f50"/><rect x="608" width="8" height="8" fill="#c72a4d"/><rect x="616" width="8" height="8" fill="#c7254a"/><rect x="624" width="8" height="8" fill="#c71f47"/><rect x="632" width="8" height="8" fill="#c71844"/><rect x="640" width="8" height="8" fill="#c71041"/><rect x="648" width="8" height="8" fill="#c7023e"/><rect x="656" width="8" height="8" fill="#c7003d"/><rect x="664" width="8" height="8" fill="#c7003c"/><rect x="672" width="8" height="8" fill="#c7003b"/><rect x="680" width="8" height="8" fill="#c7003a"/><rect x="688" width="8" height="8" fill="#c7003a"/><rect x="696" width="8" height="8" fill="#c70039"/><rect x="704" width="8" height="8" fill="#c70038"/><rect x="712" width="8" height="8" fill="#c70038"/><rect x="720" width="8" height="8" fill="#c70037"/><rect x="728" width="8" height="8" fill="#c70036"/><rect x="736" width="8" height="8" fill="#c70036"/><rect x="744" width="8" height="8" fill="#c70035"/><rect x="752" width="8" height="8" fill="#c70035"/><rect x="760" width="8" height="8" fill="#c70034"/><rect x="768" width="8" height="8" fill="#c70034"/><rect x="776" width="8" height="8" fill="#c70033"/><rect x="784" width="8" height="8" fill="#c70033"/></g><g transform="translate(0 520)"><rect x="120" width="8" height="8" fill="#01bec7"/><rect x="128" width="8" height="8" fill="#01bdc7"/><rect x="136" width="8" height="8" fill="#02bdc7"/><rect x="144" width="8" height="8" fill="#03bdc7"/><rect x="152" width="8" height="8" fill="#03bcc7"/><rect x="160" width="8" height="8" fill="#05bcc7"/><rect x="168" width="8" height="8" fill="#06bcc7"/><rect x="176" width="8" height="8" fill="#08bbc7"/><rect x="184" width="8" height="8" fill="#0abbc7"/><rect x="192" width="8" height="8" fill="#0cbbc7"/><rect x="200" width="8" height="8" fill="#0fbac7"/><rect x="208" width="8" height="8" fill="#13bac7"/><rect x="216" width="8" height="8" fill="#17bac7"/><rect x="224" width="8" height="8" fill="#1cbac7"/><rect x="232" width="8" height="8" fill="#21b9c7"/><rect x="240" width="8" height="8" fill="#28b9c7"/><rect x="248" width="8" height="8" fill="#2eb9c7"/><rect x="256" width="8" height="8" fill="#36b9c7"/><rect x="264" width="8" height="8" fill="#3db8c7"/><rect x="272" width="8" height="8" fill="#46b8c7"/><rect x="280" width="8" height="8" fill="#4eb8c7"/><rect x="288" width="8" height="8" fill="#57b8c7"/><rect x="296" width="8" height="8" fill="#7cb9c7"/><rect x="304" width="8" height="8" fill="#8dbac7"/><rect x="312" width="8" height="8" fill="#99bbc7"/><rect x="320" width="8" height="8" fill="#a3bbc7"/><rect x="328" width="8" height="8" fill="#abbcc7"/><rect x="336" width="8" height="8" fill="#b1bdc7"/><rect x="344" width="8" height="8" fill="#b6bdc7"/><rect x="352" width="8" height="8" fill="#babdc7"/><rect x="360" width="8" height="8" fill="#bdbdc7"/><rect x="368" width="8" height="8" fill="#c0bdc7"/><rect x="376" width="8" height="8" fill="#c2bdc7"/><rect x="384" width="8" height="8" fill="#c5bcc7"/><rect x="392" width="8" height="8" fill="#c7bac6"/><rect x="400" width="8" height="8" fill="#c7b6c3"/><rect x="408" width="8" height="8" fill="#c7b2c0"/><rect x="416" width="8" height="8" fill="#c7adbc"/><rect x="424" width="8" height="8" fill="#c7a8b8"/><rect x="432" width="8" height="8" fill="#c7a2b3"/><rect x="440" width="8" height="8" fill="#c79caf"/><rect x="448" width="8" height="8" fill="#c796aa"/><rect x="456" width="8" height="8" fill="#c78fa4"/><rect x="464" width="8" height="8" fill="#c7889f"/><rect x="472" width="8" height="8" fill="#c78199"/><rect x="480" width="8" height="8" fill="#c77a94"/><rect x="488" width="8" height="8" fill="#c7738e"/><rect x="496" width="8" height="8" fill="#c76d89"/><rect x="504" width="8" height="8" fill="#c76683"/><rect x="512" width="8" height="8" fill="#c7607e"/><rect x="520" width="8" height="8" fill="#c75a79"/><rect x="528" width="8" height="8" fill="#c75475"/><rect x="536" width="8" height="8" fill="#c74e70"/><rect x="544" width="8" height="8" fill="#c7496c"/><rect x="552" width="8" height="8" fill="#c74368"/><rect x="560" width="8" height="8" fill="#c73e64"/><rect x="568" width="8" height="8" fill="#c73960"/><rect x="576" width="8" height="8" fill="#c7345d"/><rect x="584" width="8" height="8" fill="#c72f59"/><rect x="592" width="8" height="8" fill="#c72a56"/><rect x="600" width="8" height="8" fill="#c72453"/><rect x="608" width="8" height="8" fill="#c71e50"/><rect x="616" width="8" height="8" fill="#c7164d"/><rect x="624" width="8" height="8" fill="#c70c4a"/><rect x="632" width="8" height="8" fill="#c70048"/><rect x="640" width="8" height="8" fill="#c70047"/><rect x="648" width="8" height="8" fill="#c70046"/><rect x="656" width="8" height="8" fill="#c70045"/><rect x="664" width="8" height="8" fill="#c70044"/><rect x="672" width="8" height="8" fill="#c70043"/><rect x="680" width="8" height="8" fill="#c70042"/><rect x="688" width="8" height="8" fill="#c70041"/><rect x="696" width="8" height="8" fill="#c70041"/><rect x="704" width="8" height="8" fill="#c70040"/><rect x="712" width="8" height="8" fill="#c7003f"/><rect x="720" width="8" height="8" fill="#c7003e"/><rect x="728" width="8" height="8" fill="#c7003e"/><rect x="736" width="8" height="8" fill="#c7003d"/><rect x="744" width="8" height="8" fill="#c7003d"/><rect x="752" width="8" height="8" fill="#c7003c"/><rect x="760" width="8" height="8" fill="#c7003b"/><rect x="768" width="8" height="8" fill="#c7003b"/><rect x="776" width="8" height="8" fill="#c7003a"/><rect x="784" width="8" height="8" fill="#c7003a"/><rect x="792" width="8" height="8" fill="#c70039"/><rect x="800" width="8" height="8" fill="#c70039"/></g><g transform="translate(0 528)"><rect x="128" width="8" height="8" fill="#01bbc7"/><rect x="136" width="8" height="8" fill="#02bbc7"/><rect x="144" width="8" height="8" fill="#03bac7"/><rect x="152" width="8" height="8" fill="#03bac7"/><rect x="160" width="8" height="8" fill="#04b9c7"/><rect x="168" width="8" height="8" fill="#06b9c7"/><rect x="176" width="8" height="8" fill="#07b8c7"/><rect x="184" width="8" height="8" fill="#09b8c7"/><rect x="192" width="8" height="8" fill="#0cb8c7"/><rect x="200" width="8" height="8" fill="#0fb7c7"/><rect x="208" width="8" height="8" fill="#12b7c7"/><rect x="216" width="8" height="8" fill="#16b6c7"/><rect x="224" width="8" height="8" fill="#1bb6c7"/><rect x="232" width="8" height="8" fill="#20b5c7"/><rect x="240" width="8" height="8" fill="#26b5c7"/><rect x="248" width="8" height="8" fill="#2cb5c7"/><rect x="256" width="8" height="8" fill="#33b4c7"/><rect x="264" width="8" height="8" fill="#3bb4c7"/><rect x="272" width="8" height="8" fill="#43b4c7"/><rect x="280" width="8" height="8" fill="#4bb4c7"/><rect x="288" width="8" height="8" fill="#64b4c7"/><rect x="296" width="8" height="8" fill="#7db5c7"/><rect x="304" width="8" height="8" fill="#8db6c7"/><rect x="312" width="8" height="8" fill="#99b7c7"/><rect x="320" width="8" height="8" fill="#a2b8c7"/><rect x="328" width="8" height="8" fill="#aab9c7"/><rect x="336" width="8" height="8" fill="#b0b9c7"/><rect x="344" width="8" height="8" fill="#b5bac7"/><rect x="352" width="8" height="8" fill="#b9bac7"/><rect x="360" width="8" height="8" fill="#bcbac7"/><rect x="368" width="8" height="8" fill="#bfbac7"/><rect x="376" width="8" height="8" fill="#c2b9c7"/><rect x="384" width="8" height="8" fill="#c5b8c7"/><rect x="392" width="8" height="8" fill="#c7b6c6"/><rect x="400" width="8" height="8" fill="#c7b2c3"/><rect x="408" width="8" height="8" fill="#c7adbf"/><rect x="416" width="8" height="8" fill="#c7a8bc"/><rect x="424" width="8" height="8" fill="#c7a3b8"/><rect x="432" width="8" height="8" fill="#c79db3"/><rect x="440" width="8" height="8" fill="#c797af"/><rect x="448" width="8" height="8" fill="#c790aa"/><rect x="456" width="8" height="8" fill="#c789a5"/><rect x="464" width="8" height="8" fill="#c7829f"/><rect x="472" width="8" height="8" fill="#c77b9a"/><rect x="480" width="8" height="8" fill="#c77495"/><rect x="488" width="8" height="8" fill="#c76d8f"/><rect x="496" width="8" height="8" fill="#c7668a"/><rect x="504" width="8" height="8" fill="#c75f85"/><rect x="512" width="8" height="8" fill="#c75980"/><rect x="520" width="8" height="8" fill="#c7537b"/><rect x="528" width="8" height="8" fill="#c74c76"/><rect x="536" width="8" height="8" fill="#c74772"/><rect x="544" width="8" height="8" fill="#c7416e"/><rect x="552" width="8" height="8" fill="#c73b6a"/><rect x="560" width="8" height="8" fill="#c73566"/><rect x="568" width="8" height="8" fill="#c73063"/><rect x="576" width="8" height="8" fill="#c72a5f"/><rect x="584" width="8" height="8" fill="#c7235c"/><rect x="592" width="8" height="8" fill="#c71c59"/><rect x="600" width="8" height="8" fill="#c71456"/><rect x="608" width="8" height="8" fill="#c70653"/><rect x="616" width="8" height="8" fill="#c70151"/><rect x="624" width="8" height="8" fill="#c70150"/><rect x="632" width="8" height="8" fill="#c7004e"/><rect x="640" width="8" height="8" fill="#c7004d"/><rect x="648" width="8" height="8" fill="#c7004c"/><rect x="656" width="8" height="8" fill="#c7004b"/><rect x="664" width="8" height="8" fill="#c7004a"/><rect x="672" width="8" height="8" fill="#c7004a"/><rect x="680" width="8" height="8" fill="#c70049"/><rect x="688" width="8" height="8" fill="#c70048"/><rect x="696" width="8" height="8" fill="#c70047"/><rect x="704" width="8" height="8" fill="#c70046"/><rect x="712" width="8" height="8" fill="#c70045"/><rect x="720" width="8" height="8" fill="#c70045"/><rect x="728" width="8" height="8" fill="#c70044"/><rect x="736" width="8" height="8" fill="#c70043"/><rect x="744" width="8" height="8" fill="#c70043"/><rect x="752" width="8" height="8" fill="#c70042"/><rect x="760" width="8" height="8" fill="#c70041"/><rect x="768" width="8" height="8" fill="#c70041"/><rect x="776" width="8" height="8" fill="#c70040"/><rect x="784" width="8" height="8" fill="#c70040"/><rect x="792" width="8" height="8" fill="#c7003f"/><rect x="800" width="8" height="8" fill="#c7003f"/><rect x="808" width="8" height="8" fill="#c7003e"/></g><g transform="translate(0 536)"><rect x="128" width="8" height="8" fill="#01b8c7"/><rect x="136" width="8" height="8" fill="#02b8c7"/><rect x="144" width="8" height="8" fill="#02b7c7"/><rect x="152" width="8" height="8" fill="#03b7c7"/><rect x="160" width="8" height="8" fill="#04b6c7"/><rect x="168" width="8" height="8" fill="#05b6c7"/><rect x="176" width="8" height="8" fill="#07b5c7"/><rect x="184" width="8" height="8" fill="#09b5c7"/><rect x="192" width="8" height="8" fill="#0bb4c7"/><rect x="200" width="8" height="8" fill="#0eb4c7"/><rect x="208" width="8" height="8" fill="#11b3c7"/><rect x="216" width="8" height="8" fill="#15b3c7"/><rect x="224" width="8" height="8" fill="#19b2c7"/><rect x="232" width="8" height="8" fill="#1eb2c7"/><rect x="240" width="8" height="8" fill="#24b1c7"/><rect x="248" width="8" height="8" fill="#2ab1c7"/><rect x="256" width="8" height="8" fill="#31b0c7"/><rect x="264" width="8" height="8" fill="#38b0c7"/><rect x="272" width="8" height="8" fill="#3fafc7"/><rect x="280" width="8" height="8" fill="#47afc7"/><rect x="288" width="8" height="8" fill="#6aafc7"/><rect x="296" width="8" height="8" fill="#7eb0c7"/><rect x="304" width="8" height="8" fill="#8db1c7"/><rect x="312" width="8" height="8" fill="#98b2c7"/><rect x="320" width="8" height="8" fill="#a1b3c7"/><rect x="328" width="8" height="8" fill="#a8b4c7"/><rect x="336" width="8" height="8" fill="#aeb5c7"/><rect x="344" width="8" height="8" fill="#b3b6c7"/><rect x="352" width="8" height="8" fill="#b8b6c7"/><rect x="360" width="8" height="8" fill="#bbb6c7"/><rect x="368" width="8" height="8" fill="#beb5c7"/><rect x="376" width="8" height="8" fill="#c1b5c7"/><rect x="384" width="8" height="8" fill="#c4b3c7"/><rect x="392" width="8" height="8" fill="#c7b1c6"/><rect x="400" width="8" height="8" fill="#c7adc3"/><rect x="408" width="8" height="8" fill="#c7a8bf"/><rect x="416" width="8" height="8" fill="#c7a3bc"/><rect x="424" width="8" height="8" fill="#c79db8"/><rect x="432" width="8" height="8" fill="#c797b3"/><rect x="440" width="8" height="8" fill="#c791af"/><rect x="448" width="8" height="8" fill="#c78aaa"/><rect x="456" width="8" height="8" fill="#c783a5"/><rect x="464" width="8" height="8" fill="#c77ba0"/><rect x="472" width="8" height="8" fill="#c7749a"/><rect x="480" width="8" height="8" fill="#c76d95"/><rect x="488" width="8" height="8" fill="#c76690"/><rect x="496" width="8" height="8" fill="#c75f8b"/><rect x="504" width="8" height="8" fill="#c75886"/><rect x="512" width="8" height="8" fill="#c75181"/><rect x="520" width="8" height="8" fill="#c74a7c"/><rect x="528" width="8" height="8" fill="#c74478"/><rect x="536" width="8" height="8" fill="#c73e74"/><rect x="544" width="8" height="8" fill="#c73770"/><rect x="552" width="8" height="8" fill="#c7316c"/><rect x="560" width="8" height="8" fill="#c72a68"/><rect x="568" width="8" height="8" fill="#c72365"/><rect x="576" width="8" height="8" fill="#c71b61"/><rect x="584" width="8" height="8" fill="#c7115e"/><rect x="592" width="8" height="8" fill="#c7025b"/><rect x="600" width="8" height="8" fill="#c7015a"/><rect x="608" width="8" height="8" fill="#c70158"/><rect x="616" width="8" height="8" fill="#c70157"/><rect x="624" width="8" height="8" fill="#c70056"/><rect x="632" width="8" height="8" fill="#c70054"/><rect x="640" width="8" height="8" fill="#c70053"/><rect x="648" width="8" height="8" fill="#c70052"/><rect x="656" width="8" height="8" fill="#c70051"/><rect x="664" width="8" height="8" fill="#c70050"/><rect x="672" width="8" height="8" fill="#c7004f"/><rect x="680" width="8" height="8" fill="#c7004e"/><rect x="688" width="8" height="8" fill="#c7004d"/><rect x="696" width="8" height="8" fill="#c7004d"/><rect x="704" width="8" height="8" fill="#c7004c"/><rect x="712" width="8" height="8" fill="#c7004b"/><rect x="720" width="8" height="8" fill="#c7004a"/><rect x="728" width="8" height="8" fill="#c70049"/><rect x="736" width="8" height="8" fill="#c70049"/><rect x="744" width="8" height="8" fill="#c70048"/><rect x="752" width="8" height="8" fill="#c70047"/><rect x="760" width="8" height="8" fill="#c70047"/><rect x="768" width="8" height="8" fill="#c70046"/><rect x="776" width="8" height="8" fill="#c70045"/><rect x="784" width="8" height="8" fill="#c70045"/><rect x="792" width="8" height="8" fill="#c70044"/></g><g transform="translate(0 544)"><rect x="128" width="8" height="8" fill="#01b6c7"/><rect x="136" width="8" height="8" fill="#02b5c7"/><rect x="144" width="8" height="8" fill="#02b5c7"/><rect x="152" width="8" height="8" fill="#03b4c7"/><rect x="160" width="8" height="8" fill="#04b4c7"/><rect x="168" width="8" height="8" fill="#05b3c7"/><rect x="176" width="8" height="8" fill="#07b2c7"/><rect x="184" width="8" height="8" fill="#08b2c7"/><rect x="192" width="8" height="8" fill="#0bb1c7"/><rect x="200" width="8" height="8" fill="#0db0c7"/><rect x="208" width="8" height="8" fill="#10b0c7"/><rect x="216" width="8" height="8" fill="#14afc7"/><rect x="224" width="8" height="8" fill="#18aec7"/><rect x="232" width="8" height="8" fill="#1dadc7"/><rect x="240" width="8" height="8" fill="#22adc7"/><rect x="248" width="8" height="8" fill="#28acc7"/><rect x="256" width="8" height="8" fill="#2eabc7"/><rect x="264" width="8" height="8" fill="#35abc7"/><rect x="272" width="8" height="8" fill="#3caac7"/><rect x="280" width="8" height="8" fill="#47a9c7"/><rect x="288" width="8" height="8" fill="#6caac7"/><rect x="296" width="8" height="8" fill="#7eabc7"/><rect x="304" width="8" height="8" fill="#8cacc7"/><rect x="312" width="8" height="8" fill="#97aec7"/><rect x="320" width="8" height="8" fill="#9fafc7"/><rect x="328" width="8" height="8" fill="#a7b0c7"/><rect x="336" width="8" height="8" fill="#adb0c7"/><rect x="344" width="8" height="8" fill="#b2b1c7"/><rect x="352" width="8" height="8" fill="#b6b1c7"/><rect x="360" width="8" height="8" fill="#bab1c7"/><rect x="368" width="8" height="8" fill="#beb0c7"/><rect x="376" width="8" height="8" fill="#c1afc7"/><rect x="384" width="8" height="8" fill="#c4aec7"/><rect x="392" width="8" height="8" fill="#c7acc6"/><rect x="400" width="8" height="8" fill="#c7a7c3"/><rect x="408" width="8" height="8" fill="#c7a2bf"/><rect x="416" width="8" height="8" fill="#c79dbb"/><rect x="424" width="8" height="8" fill="#c797b7"/><rect x="432" width="8" height="8" fill="#c790b3"/><rect x="440" width="8" height="8" fill="#c78aaf"/><rect x="448" width="8" height="8" fill="#c783aa"/><rect x="456" width="8" height="8" fill="#c77ba5"/><rect x="464" width="8" height="8" fill="#c774a0"/><rect x="472" width="8" height="8" fill="#c76d9b"/><rect x="480" width="8" height="8" fill="#c76596"/><rect x="488" width="8" height="8" fill="#c75e91"/><rect x="496" width="8" height="8" fill="#c7568c"/><rect x="504" width="8" height="8" fill="#c74f87"/><rect x="512" width="8" height="8" fill="#c74882"/><rect x="520" width="8" height="8" fill="#c7417e"/><rect x="528" width="8" height="8" fill="#c73a7a"/><rect x="536" width="8" height="8" fill="#c73375"/><rect x="544" width="8" height="8" fill="#c72b72"/><rect x="552" width="8" height="8" fill="#c7236e"/><rect x="560" width="8" height="8" fill="#c71a6a"/><rect x="568" width="8" height="8" fill="#c70d67"/><rect x="576" width="8" height="8" fill="#c70364"/><rect x="584" width="8" height="8" fill="#c70262"/><rect x="592" width="8" height="8" fill="#c70261"/><rect x="600" width="8" height="8" fill="#c7015f"/><rect x="608" width="8" height="8" fill="#c7015e"/><rect x="616" width="8" height="8" fill="#c7015c"/><rect x="624" width="8" height="8" fill="#c7005b"/><rect x="632" width="8" height="8" fill="#c7005a"/><rect x="640" width="8" height="8" fill="#c70058"/><rect x="648" width="8" height="8" fill="#c70057"/><rect x="656" width="8" height="8" fill="#c70056"/><rect x="664" width="8" height="8" fill="#c70055"/><rect x="672" width="8" height="8" fill="#c70054"/><rect x="680" width="8" height="8" fill="#c70053"/><rect x="688" width="8" height="8" fill="#c70052"/><rect x="696" width="8" height="8" fill="#c70052"/><rect x="704" width="8" height="8" fill="#c70051"/><rect x="712" width="8" height="8" fill="#c70050"/><rect x="720" width="8" height="8" fill="#c7004f"/><rect x="728" width="8" height="8" fill="#c7004e"/><rect x="736" width="8" height="8" fill="#c7004e"/><rect x="744" width="8" height="8" fill="#c7004d"/><rect x="752" width="8" height="8" fill="#c7004c"/><rect x="760" width="8" height="8" fill="#c7004b"/><rect x="768" width="8" height="8" fill="#c7004b"/></g><g transform="translate(0 552)"><rect x="136" width="8" height="8" fill="#02b3c7"/><rect x="144" width="8" height="8" fill="#02b2c7"/><rect x="152" width="8" height="8" fill="#03b1c7"/><rect x="160" width="8" height="8" fill="#04b1c7"/><rect x="168" width="8" height="8" fill="#05b0c7"/><rect x="176" width="8" height="8" fill="#06afc7"/><rect x="184" width="8" height="8" fill="#08aec7"/><rect x="192" width="8" height="8" fill="#0aadc7"/><rect x="200" width="8" height="8" fill="#0cadc7"/><rect x="208" width="8" height="8" fill="#0facc7"/><rect x="216" width="8" height="8" fill="#12abc7"/><rect x="224" width="8" height="8" fill="#16aac7"/><rect x="232" width="8" height="8" fill="#1ba9c7"/><rect x="240" width="8" height="8" fill="#1fa8c7"/><rect x="248" width="8" height="8" fill="#25a7c7"/><rect x="256" width="8" height="8" fill="#2ba6c7"/><rect x="264" width="8" height="8" fill="#31a5c7"/><rect x="272" width="8" height="8" fill="#37a4c7"/><rect x="280" width="8" height="8" fill="#55a4c7"/><rect x="288" width="8" height="8" fill="#6ea5c7"/><rect x="296" width="8" height="8" fill="#7ea6c7"/><rect x="304" width="8" height="8" fill="#8ba7c7"/><rect x="312" width="8" height="8" fill="#95a8c7"/><rect x="320" width="8" height="8" fill="#9ea9c7"/><rect x="328" width="8" height="8" fill="#a5aac7"/><rect x="336" width="8" height="8" fill="#ababc7"/><rect x="344" width="8" height="8" fill="#b0abc7"/><rect x="352" width="8" height="8" fill="#b5abc7"/><rect x="360" width="8" height="8" fill="#b9abc7"/><rect x="368" width="8" height="8" fill="#bdaac7"/><rect x="376" width="8" height="8" fill="#c0a9c7"/><rect x="384" width="8" height="8" fill="#c4a8c7"/><rect x="392" width="8" height="8" fill="#c7a5c7"/><rect x="400" width="8" height="8" fill="#c7a1c3"/><rect x="408" width="8" height="8" fill="#c79bbf"/><rect x="416" width="8" height="8" fill="#c796bb"/><rect x="424" width="8" height="8" fill="#c78fb7"/><rect x="432" width="8" height="8" fill="#c789b3"/><rect x="440" width="8" height="8" fill="#c782ae"/><rect x="448" width="8" height="8" fill="#c77baa"/><rect x="456" width="8" height="8" fill="#c773a5"/><rect x="464" width="8" height="8" fill="#c76ca0"/><rect x="472" width="8" height="8" fill="#c7649b"/><rect x="480" width="8" height="8" fill="#c75c96"/><rect x="488" width="8" height="8" fill="#c75591"/><rect x="496" width="8" height="8" fill="#c74d8d"/><rect x="504" width="8" height="8" fill="#c74588"/><rect x="512" width="8" height="8" fill="#c73d83"/><rect x="520" width="8" height="8" fill="#c7357f"/><rect x="528" width="8" height="8" fill="#c72d7b"/><rect x="536" width="8" height="8" fill="#c72477"/><rect x="544" width="8" height="8" fill="#c71973"/><rect x="552" width="8" height="8" fill="#c70770"/><rect x="560" width="8" height="8" fill="#c7056d"/><rect x="568" width="8" height="8" fill="#c7046b"/><rect x="576" width="8" height="8" fill="#c70369"/><rect x="584" width="8" height="8" fill="#c70267"/><rect x="592" width="8" height="8" fill="#c70265"/><rect x="600" width="8" height="8" fill="#c70164"/><rect x="608" width="8" height="8" fill="#c70162"/><rect x="616" width="8" height="8" fill="#c70161"/><rect x="624" width="8" height="8" fill="#c70060"/><rect x="632" width="8" height="8" fill="#c7005e"/><rect x="640" width="8" height="8" fill="#c7005d"/><rect x="648" width="8" height="8" fill="#c7005c"/><rect x="656" width="8" height="8" fill="#c7005b"/><rect x="664" width="8" height="8" fill="#c7005a"/><rect x="672" width="8" height="8" fill="#c70059"/><rect x="680" width="8" height="8" fill="#c70058"/><rect x="688" width="8" height="8" fill="#c70057"/><rect x="696" width="8" height="8" fill="#c70056"/><rect x="704" width="8" height="8" fill="#c70055"/><rect x="712" width="8" height="8" fill="#c70054"/><rect x="720" width="8" height="8" fill="#c70053"/><rect x="728" width="8" height="8" fill="#c70053"/><rect x="736" width="8" height="8" fill="#c70052"/><rect x="744" width="8" height="8" fill="#c70051"/></g><g transform="translate(0 560)"><rect x="136" width="8" height="8" fill="#01b0c7"/><rect x="144" width="8" height="8" fill="#02afc7"/><rect x="152" width="8" height="8" fill="#03aec7"/><rect x="160" width="8" height="8" fill="#03aec7"/><rect x="168" width="8" height="8" fill="#04adc7"/><rect x="176" width="8" height="8" fill="#06acc7"/><rect x="184" width="8" height="8" fill="#07abc7"/><rect x="192" width="8" height="8" fill="#09aac7"/><rect x="200" width="8" height="8" fill="#0ba9c7"/><rect x="208" width="8" height="8" fill="#0ea8c7"/><rect x="216" width="8" height="8" fill="#11a7c7"/><rect x="224" width="8" height="8" fill="#14a6c7"/><rect x="232" width="8" height="8" fill="#18a4c7"/><rect x="240" width="8" height="8" fill="#1da3c7"/><rect x="248" width="8" height="8" fill="#22a2c7"/><rect x="256" width="8" height="8" fill="#27a1c7"/><rect x="264" width="8" height="8" fill="#2d9fc7"/><rect x="272" width="8" height="8" fill="#339dc7"/><rect x="280" width="8" height="8" fill="#599ec7"/><rect x="288" width="8" height="8" fill="#6e9fc7"/><rect x="296" width="8" height="8" fill="#7da0c7"/><rect x="304" width="8" height="8" fill="#89a1c7"/><rect x="312" width="8" height="8" fill="#93a2c7"/><rect x="320" width="8" height="8" fill="#9ca3c7"/><rect x="328" width="8" height="8" fill="#a3a4c7"/><rect x="336" width="8" height="8" fill="#a9a4c7"/><rect x="344" width="8" height="8" fill="#afa5c7"/><rect x="352" width="8" height="8" fill="#b4a5c7"/><rect x="360" width="8" height="8" fill="#b8a4c7"/><rect x="368" width="8" height="8" fill="#bca3c7"/><rect x="376" width="8" height="8" fill="#bfa2c7"/><rect x="384" width="8" height="8" fill="#c3a0c7"/><rect x="392" width="8" height="8" fill="#c79ec7"/><rect x="400" width="8" height="8" fill="#c799c3"/><rect x="408" width="8" height="8" fill="#c793bf"/><rect x="416" width="8" height="8" fill="#c78dbb"/><rect x="424" width="8" height="8" fill="#c787b7"/><rect x="432" width="8" height="8" fill="#c780b3"/><rect x="440" width="8" height="8" fill="#c779ae"/><rect x="448" width="8" height="8" fill="#c772a9"/><rect x="456" width="8" height="8" fill="#c76aa5"/><rect x="464" width="8" height="8" fill="#c762a0"/><rect x="472" width="8" height="8" fill="#c75a9b"/><rect x="480" width="8" height="8" fill="#c75297"/><rect x="488" width="8" height="8" fill="#c74a92"/><rect x="496" width="8" height="8" fill="#c7418d"/><rect x="504" width="8" height="8" fill="#c73989"/><rect x="512" width="8" height="8" fill="#c72f84"/><rect x="520" width="8" height="8" fill="#c72580"/><rect x="528" width="8" height="8" fill="#c7177c"/><rect x="536" width="8" height="8" fill="#c70979"/><rect x="544" width="8" height="8" fill="#c70776"/><rect x="552" width="8" height="8" fill="#c70674"/><rect x="560" width="8" height="8" fill="#c70471"/><rect x="568" width="8" height="8" fill="#c7036f"/><rect x="576" width="8" height="8" fill="#c7036d"/><rect x="584" width="8" height="8" fill="#c7026b"/><rect x="592" width="8" height="8" fill="#c7016a"/><rect x="600" width="8" height="8" fill="#c70168"/><rect x="608" width="8" height="8" fill="#c70167"/><rect x="616" width="8" height="8" fill="#c70165"/><rect x="624" width="8" height="8" fill="#c70064"/><rect x="632" width="8" height="8" fill="#c70063"/><rect x="640" width="8" height="8" fill="#c70061"/><rect x="648" width="8" height="8" fill="#c70060"/><rect x="656" width="8" height="8" fill="#c7005f"/><rect x="664" width="8" height="8" fill="#c7005e"/><rect x="672" width="8" height="8" fill="#c7005d"/><rect x="680" width="8" height="8" fill="#c7005c"/><rect x="688" width="8" height="8" fill="#c7005b"/><rect x="696" width="8" height="8" fill="#c7005a"/><rect x="704" width="8" height="8" fill="#c70059"/><rect x="712" width="8" height="8" fill="#c70058"/><rect x="720" width="8" height="8" fill="#c70057"/></g><g transform="translate(0 568)"><rect x="136" width="8" height="8" fill="#01adc7"/><rect x="144" width="8" height="8" fill="#02acc7"/><rect x="152" width="8" height="8" fill="#02abc7"/><rect x="160" width="8" height="8" fill="#03aac7"/><rect x="168" width="8" height="8" fill="#04a9c7"/><rect x="176" width="8" height="8" fill="#05a8c7"/><rect x="184" width="8" height="8" fill="#06a7c7"/><rect x="192" width="8" height="8" fill="#08a6c7"/><rect x="200" width="8" height="8" fill="#0aa5c7"/><rect x="208" width="8" height="8" fill="#0da4c7"/><rect x="216" width="8" height="8" fill="#0fa2c7"/><rect x="224" width="8" height="8" fill="#13a1c7"/><rect x="232" width="8" height="8" fill="#169fc7"/><rect x="240" width="8" height="8" fill="#1a9ec7"/><rect x="248" width="8" height="8" fill="#1f9cc7"/><rect x="256" width="8" height="8" fill="#249ac7"/><rect x="264" width="8" height="8" fill="#2998c7"/><rect x="272" width="8" height="8" fill="#3b97c7"/><rect x="280" width="8" height="8" fill="#5c98c7"/><rect x="288" width="8" height="8" fill="#6f98c7"/><rect x="296" width="8" height="8" fill="#7d99c7"/><rect x="304" width="8" height="8" fill="#889ac7"/><rect x="312" width="8" height="8" fill="#929bc7"/><rect x="320" width="8" height="8" fill="#9a9cc7"/><rect x="328" width="8" height="8" fill="#a19dc7"/><rect x="336" width="8" height="8" fill="#a89dc7"/><rect x="344" width="8" height="8" fill="#ad9dc7"/><rect x="352" width="8" height="8" fill="#b29dc7"/><rect x="360" width="8" height="8" fill="#b79cc7"/><rect x="368" width="8" height="8" fill="#bb9bc7"/><rect x="376" width="8" height="8" fill="#bf9ac7"/><rect x="384" width="8" height="8" fill="#c398c7"/><rect x="392" width="8" height="8" fill="#c795c7"/><rect x="400" width="8" height="8" fill="#c790c3"/><rect x="408" width="8" height="8" fill="#c78abf"/><rect x="416" width="8" height="8" fill="#c784bb"/><rect x="424" width="8" height="8" fill="#c77db7"/><rect x="432" width="8" height="8" fill="#c776b2"/><rect x="440" width="8" height="8" fill="#c76fae"/><rect x="448" width="8" height="8" fill="#c767a9"/><rect x="456" width="8" height="8" fill="#c75fa5"/><rect x="464" width="8" height="8" fill="#c757a0"/><rect x="472" width="8" height="8" fill="#c74e9b"/><rect x="480" width="8" height="8" fill="#c74697"/><rect x="488" width="8" height="8" fill="#c73c92"/><rect x="496" width="8" height="8" fill="#c7328e"/><rect x="504" width="8" height="8" fill="#c7268a"/><rect x="512" width="8" height="8" fill="#c71485"/><rect x="520" width="8" height="8" fill="#c70d82"/><rect x="528" width="8" height="8" fill="#c70a7f"/><rect x="536" width="8" height="8" fill="#c7087c"/><rect x="544" width="8" height="8" fill="#c7067a"/><rect x="552" width="8" height="8" fill="#c70577"/><rect x="560" width="8" height="8" fill="#c70475"/><rect x="568" width="8" height="8" fill="#c70373"/><rect x="576" width="8" height="8" fill="#c70271"/><rect x="584" width="8" height="8" fill="#c7026f"/><rect x="592" width="8" height="8" fill="#c7016d"/><rect x="600" width="8" height="8" fill="#c7016c"/><rect x="608" width="8" height="8" fill="#c7016a"/><rect x="616" width="8" height="8" fill="#c70169"/><rect x="624" width="8" height="8" fill="#c70068"/><rect x="632" width="8" height="8" fill="#c70066"/><rect x="640" width="8" height="8" fill="#c70065"/><rect x="648" width="8" height="8" fill="#c70064"/><rect x="656" width="8" height="8" fill="#c70063"/><rect x="664" width="8" height="8" fill="#c70062"/><rect x="672" width="8" height="8" fill="#c70061"/><rect x="680" width="8" height="8" fill="#c70060"/><rect x="688" width="8" height="8" fill="#c7005f"/><rect x="696" width="8" height="8" fill="#c7005e"/></g><g transform="translate(0 576)"><rect x="144" width="8" height="8" fill="#02a9c7"/><rect x="152" width="8" height="8" fill="#02a8c7"/><rect x="160" width="8" height="8" fill="#03a7c7"/><rect x="168" width="8" height="8" fill="#04a6c7"/><rect x="176" width="8" height="8" fill="#05a5c7"/><rect x="184" width="8" height="8" fill="#06a4c7"/><rect x="192" width="8" height="8" fill="#07a2c7"/><rect x="200" width="8" height="8" fill="#09a1c7"/><rect x="208" width="8" height="8" fill="#0b9fc7"/><rect x="216" width="8" height="8" fill="#0e9ec7"/><rect x="224" width="8" height="8" fill="#119cc7"/><rect x="232" width="8" height="8" fill="#149ac7"/><rect x="240" width="8" height="8" fill="#1898c7"/><rect x="248" width="8" height="8" fill="#1c96c7"/><rect x="256" width="8" height="8" fill="#2094c7"/><rect x="264" width="8" height="8" fill="#2591c7"/><rect x="272" width="8" height="8" fill="#4690c7"/><rect x="280" width="8" height="8" fill="#5e91c7"/><rect x="288" width="8" height="8" fill="#6f92c7"/><rect x="296" width="8" height="8" fill="#7c92c7"/><rect x="304" width="8" height="8" fill="#8793c7"/><rect x="312" width="8" height="8" fill="#9094c7"/><rect x="320" width="8" height="8" fill="#9895c7"/><rect x="328" width="8" height="8" fill="#a095c7"/><rect x="336" width="8" height="8" fill="#a695c7"/><rect x="344" width="8" height="8" fill="#ac95c7"/><rect x="352" width="8" height="8" fill="#b195c7"/><rect x="360" width="8" height="8" fill="#b594c7"/><rect x="368" width="8" height="8" fill="#ba92c7"/><rect x="376" width="8" height="8" fill="#be91c7"/><rect x="384" width="8" height="8" fill="#c28ec7"/><rect x="392" width="8" height="8" fill="#c68bc7"/><rect x="400" width="8" height="8" fill="#c786c3"/><rect x="408" width="8" height="8" fill="#c780bf"/><rect x="416" width="8" height="8" fill="#c77abb"/><rect x="424" width="8" height="8" fill="#c773b6"/><rect x="432" width="8" height="8" fill="#c76bb2"/><rect x="440" width="8" height="8" fill="#c763ae"/><rect x="448" width="8" height="8" fill="#c75ba9"/><rect x="456" width="8" height="8" fill="#c753a5"/><rect x="464" width="8" height="8" fill="#c749a0"/><rect x="472" width="8" height="8" fill="#c73f9c"/><rect x="480" width="8" height="8" fill="#c73497"/><rect x="488" width="8" height="8" fill="#c72693"/><rect x="496" width="8" height="8" fill="#c7148f"/><rect x="504" width="8" height="8" fill="#c7118b"/><rect x="512" width="8" height="8" fill="#c70e88"/><rect x="520" width="8" height="8" fill="#c70b85"/><rect x="528" width="8" height="8" fill="#c70982"/><rect x="536" width="8" height="8" fill="#c7077f"/><rect x="544" width="8" height="8" fill="#c7067d"/><rect x="552" width="8" height="8" fill="#c7057b"/><rect x="560" width="8" height="8" fill="#c70478"/><rect x="568" width="8" height="8" fill="#c70376"/><rect x="576" width="8" height="8" fill="#c70274"/><rect x="584" width="8" height="8" fill="#c70273"/><rect x="592" width="8" height="8" fill="#c70171"/><rect x="600" width="8" height="8" fill="#c7016f"/><rect x="608" width="8" height="8" fill="#c7016e"/><rect x="616" width="8" height="8" fill="#c7006c"/><rect x="624" width="8" height="8" fill="#c7006b"/><rect x="632" width="8" height="8" fill="#c7006a"/><rect x="640" width="8" height="8" fill="#c70069"/><rect x="648" width="8" height="8" fill="#c70067"/><rect x="656" width="8" height="8" fill="#c70066"/><rect x="664" width="8" height="8" fill="#c70065"/><rect x="672" width="8" height="8" fill="#c70064"/></g><g transform="translate(0 584)"><rect x="144" width="8" height="8" fill="#01a6c7"/><rect x="152" width="8" height="8" fill="#02a5c7"/><rect x="160" width="8" height="8" fill="#02a4c7"/><rect x="168" width="8" height="8" fill="#03a3c7"/><rect x="176" width="8" height="8" fill="#04a1c7"/><rect x="184" width="8" height="8" fill="#05a0c7"/><rect x="192" width="8" height="8" fill="#079ec7"/><rect x="200" width="8" height="8" fill="#089dc7"/><rect x="208" width="8" height="8" fill="#0a9bc7"/><rect x="216" width="8" height="8" fill="#0c99c7"/><rect x="224" width="8" height="8" fill="#0f97c7"/><rect x="232" width="8" height="8" fill="#1295c7"/><rect x="240" width="8" height="8" fill="#1592c7"/><rect x="248" width="8" height="8" fill="#1990c7"/><rect x="256" width="8" height="8" fill="#1d8dc7"/><rect x="264" width="8" height="8" fill="#2189c7"/><rect x="272" width="8" height="8" fill="#4b89c7"/><rect x="280" width="8" height="8" fill="#5f8ac7"/><rect x="288" width="8" height="8" fill="#6e8ac7"/><rect x="296" width="8" height="8" fill="#7b8bc7"/><rect x="304" width="8" height="8" fill="#858cc7"/><rect x="312" width="8" height="8" fill="#8f8cc7"/><rect x="320" width="8" height="8" fill="#978cc7"/><rect x="328" width="8" height="8" fill="#9e8dc7"/><rect x="336" width="8" height="8" fill="#a48dc7"/><rect x="344" width="8" height="8" fill="#aa8cc7"/><rect x="352" width="8" height="8" fill="#af8bc7"/><rect x="360" width="8" height="8" fill="#b48ac7"/><rect x="368" width="8" height="8" fill="#b989c7"/><rect x="376" width="8" height="8" fill="#bd86c7"/><rect x="384" width="8" height="8" fill="#c284c7"/><rect x="392" width="8" height="8" fill="#c680c7"/><rect x="400" width="8" height="8" fill="#c77bc3"/><rect x="408" width="8" height="8" fill="#c774bf"/><rect x="416" width="8" height="8" fill="#c76dbb"/><rect x="424" width="8" height="8" fill="#c766b6"/><rect x="432" width="8" height="8" fill="#c75eb2"/><rect x="440" width="8" height="8" fill="#c756ad"/><rect x="448" width="8" height="8" fill="#c74ca9"/><rect x="456" width="8" height="8" fill="#c742a5"/><rect x="464" width="8" height="8" fill="#c736a0"/><rect x="472" width="8" height="8" fill="#c7259c"/><rect x="480" width="8" height="8" fill="#c71998"/><rect x="488" width="8" height="8" fill="#c71594"/><rect x="496" width="8" height="8" fill="#c71291"/><rect x="504" width="8" height="8" fill="#c70f8e"/><rect x="512" width="8" height="8" fill="#c70c8a"/><rect x="520" width="8" height="8" fill="#c70a88"/><rect x="528" width="8" height="8" fill="#c70885"/><rect x="536" width="8" height="8" fill="#c70782"/><rect x="544" width="8" height="8" fill="#c70580"/><rect x="552" width="8" height="8" fill="#c7047e"/><rect x="560" width="8" height="8" fill="#c7037b"/><rect x="568" width="8" height="8" fill="#c70279"/><rect x="576" width="8" height="8" fill="#c70278"/><rect x="584" width="8" height="8" fill="#c70176"/><rect x="592" width="8" height="8" fill="#c70174"/><rect x="600" width="8" height="8" fill="#c70173"/><rect x="608" width="8" height="8" fill="#c70171"/><rect x="616" width="8" height="8" fill="#c70070"/><rect x="624" width="8" height="8" fill="#c7006e"/><rect x="632" width="8" height="8" fill="#c7006d"/><rect x="640" width="8" height="8" fill="#c7006c"/><rect x="648" width="8" height="8" fill="#c7006b"/><rect x="656" width="8" height="8" fill="#c7006a"/></g><g transform="translate(0 592)"><rect x="152" width="8" height="8" fill="#02a2c7"/><rect x="160" width="8" height="8" fill="#02a1c7"/><rect x="168" width="8" height="8" fill="#039fc7"/><rect x="176" width="8" height="8" fill="#049ec7"/><rect x="184" width="8" height="8" fill="#059cc7"/><rect x="192" width="8" height="8" fill="#069ac7"/><rect x="200" width="8" height="8" fill="#0798c7"/><rect x="208" width="8" height="8" fill="#0996c7"/><rect x="216" width="8" height="8" fill="#0b94c7"/><rect x="224" width="8" height="8" fill="#0d92c7"/><rect x="232" width="8" height="8" fill="#108fc7"/><rect x="240" width="8" height="8" fill="#138cc7"/><rect x="248" width="8" height="8" fill="#1689c7"/><rect x="256" width="8" height="8" fill="#1985c7"/><rect x="264" width="8" height="8" fill="#3182c7"/><rect x="272" width="8" height="8" fill="#4e82c7"/><rect x="280" width="8" height="8" fill="#6082c7"/><rect x="288" width="8" height="8" fill="#6e83c7"/><rect x="296" width="8" height="8" fill="#7a83c7"/><rect x="304" width="8" height="8" fill="#8483c7"/><rect x="312" width="8" height="8" fill="#8d83c7"/><rect x="320" width="8" height="8" fill="#9584c7"/><rect x="328" width="8" height="8" fill="#9c83c7"/><rect x="336" width="8" height="8" fill="#a383c7"/><rect x="344" width="8" height="8" fill="#a982c7"/><rect x="352" width="8" height="8" fill="#ae81c7"/><rect x="360" width="8" height="8" fill="#b380c7"/><rect x="368" width="8" height="8" fill="#b87ec7"/><rect x="376" width="8" height="8" fill="#bd7bc7"/><rect x="384" width="8" height="8" fill="#c178c7"/><rect x="392" width="8" height="8" fill="#c674c7"/><rect x="400" width="8" height="8" fill="#c76ec3"/><rect x="408" width="8" height="8" fill="#c767bf"/><rect x="416" width="8" height="8" fill="#c75fba"/><rect x="424" width="8" height="8" fill="#c757b6"/><rect x="432" width="8" height="8" fill="#c74eb2"/><rect x="440" width="8" height="8" fill="#c743ad"/><rect x="448" width="8" height="8" fill="#c736a9"/><rect x="456" width="8" height="8" fill="#c721a5"/><rect x="464" width="8" height="8" fill="#c71da1"/><rect x="472" width="8" height="8" fill="#c7199d"/><rect x="480" width="8" height="8" fill="#c7169a"/><rect x="488" width="8" height="8" fill="#c71396"/><rect x="496" width="8" height="8" fill="#c71093"/><rect x="504" width="8" height="8" fill="#c70d90"/><rect x="512" width="8" height="8" fill="#c70b8d"/><rect x="520" width="8" height="8" fill="#c7098a"/><rect x="528" width="8" height="8" fill="#c70787"/><rect x="536" width="8" height="8" fill="#c70685"/><rect x="544" width="8" height="8" fill="#c70583"/><rect x="552" width="8" height="8" fill="#c70480"/><rect x="560" width="8" height="8" fill="#c7037e"/><rect x="568" width="8" height="8" fill="#c7027c"/><rect x="576" width="8" height="8" fill="#c7027b"/><rect x="584" width="8" height="8" fill="#c70179"/><rect x="592" width="8" height="8" fill="#c70177"/><rect x="600" width="8" height="8" fill="#c70176"/><rect x="608" width="8" height="8" fill="#c70074"/><rect x="616" width="8" height="8" fill="#c70073"/><rect x="624" width="8" height="8" fill="#c70071"/><rect x="632" width="8" height="8" fill="#c70070"/></g><g transform="translate(0 600)"><rect x="152" width="8" height="8" fill="#019fc7"/><rect x="160" width="8" height="8" fill="#029dc7"/><rect x="168" width="8" height="8" fill="#029cc7"/><rect x="176" width="8" height="8" fill="#039ac7"/><rect x="184" width="8" height="8" fill="#0498c7"/><rect x="192" width="8" height="8" fill="#0596c7"/><rect x="200" width="8" height="8" fill="#0694c7"/><rect x="208" width="8" height="8" fill="#0891c7"/><rect x="216" width="8" height="8" fill="#098fc7"/><rect x="224" width="8" height="8" fill="#0b8cc7"/><rect x="232" width="8" height="8" fill="#0e89c7"/><rect x="240" width="8" height="8" fill="#1085c7"/><rect x="248" width="8" height="8" fill="#1381c7"/><rect x="256" width="8" height="8" fill="#167cc7"/><rect x="264" width="8" height="8" fill="#3a7ac7"/><rect x="272" width="8" height="8" fill="#517ac7"/><rect x="280" width="8" height="8" fill="#617ac7"/><rect x="288" width="8" height="8" fill="#6e7ac7"/><rect x="296" width="8" height="8" fill="#7a7ac7"/><rect x="304" width="8" height="8" fill="#837ac7"/><rect x="312" width="8" height="8" fill="#8c7ac7"/><rect x="320" width="8" height="8" fill="#947ac7"/><rect x="328" width="8" height="8" fill="#9b79c7"/><rect x="336" width="8" height="8" fill="#a179c7"/><rect x="344" width="8" height="8" fill="#a777c7"/><rect x="352" width="8" height="8" fill="#ad76c7"/><rect x="360" width="8" height="8" fill="#b274c7"/><rect x="368" width="8" height="8" fill="#b771c7"/><rect x="376" width="8" height="8" fill="#bc6ec7"/><rect x="384" width="8" height="8" fill="#c16ac7"/><rect x="392" width="8" height="8" fill="#c665c7"/><rect x="400" width="8" height="8" fill="#c75fc4"/><rect x="408" width="8" height="8" fill="#c756bf"/><rect x="416" width="8" height="8" fill="#c74dba"/><rect x="424" width="8" height="8" fill="#c742b6"/><rect x="432" width="8" height="8" fill="#c733b2"/><rect x="440" width="8" height="8" fill="#c724ad"/><rect x="448" width="8" height="8" fill="#c720aa"/><rect x="456" width="8" height="8" fill="#c71da6"/><rect x="464" width="8" height="8" fill="#c719a2"/><rect x="472" width="8" height="8" fill="#c7169f"/><rect x="480" width="8" height="8" fill="#c7139b"/><rect x="488" width="8" height="8" fill="#c71098"/><rect x="496" width="8" height="8" fill="#c70e95"/><rect x="504" width="8" height="8" fill="#c70b92"/><rect x="512" width="8" height="8" fill="#c7098f"/><rect x="520" width="8" height="8" fill="#c7088c"/><rect x="528" width="8" height="8" fill="#c7068a"/><rect x="536" width="8" height="8" fill="#c70587"/><rect x="544" width="8" height="8" fill="#c70485"/><rect x="552" width="8" height="8" fill="#c70383"/><rect x="560" width="8" height="8" fill="#c70281"/><rect x="568" width="8" height="8" fill="#c7027f"/><rect x="576" width="8" height="8" fill="#c7017d"/><rect x="584" width="8" height="8" fill="#c7017c"/><rect x="592" width="8" height="8" fill="#c7017a"/><rect x="600" width="8" height="8" fill="#c70178"/><rect x="608" width="8" height="8" fill="#c70077"/></g><g transform="translate(0 608)"><rect x="152" width="8" height="8" fill="#019bc7"/><rect x="160" width="8" height="8" fill="#029ac7"/><rect x="168" width="8" height="8" fill="#0298c7"/><rect x="176" width="8" height="8" fill="#0396c7"/><rect x="184" width="8" height="8" fill="#0394c7"/><rect x="192" width="8" height="8" fill="#0491c7"/><rect x="200" width="8" height="8" fill="#058fc7"/><rect x="208" width="8" height="8" fill="#078cc7"/><rect x="216" width="8" height="8" fill="#0889c7"/><rect x="224" width="8" height="8" fill="#0a86c7"/><rect x="232" width="8" height="8" fill="#0c82c7"/><rect x="240" width="8" height="8" fill="#0e7ec7"/><rect x="248" width="8" height="8" fill="#1079c7"/><rect x="256" width="8" height="8" fill="#1373c7"/><rect x="264" width="8" height="8" fill="#4073c7"/><rect x="272" width="8" height="8" fill="#5372c7"/><rect x="280" width="8" height="8" fill="#6272c7"/><rect x="288" width="8" height="8" fill="#6f72c7"/><rect x="296" width="8" height="8" fill="#7971c7"/><rect x="304" width="8" height="8" fill="#8371c7"/><rect x="312" width="8" height="8" fill="#8b70c7"/><rect x="320" width="8" height="8" fill="#9370c7"/><rect x="328" width="8" height="8" fill="#9a6fc7"/><rect x="336" width="8" height="8" fill="#a06dc7"/><rect x="344" width="8" height="8" fill="#a66bc7"/><rect x="352" width="8" height="8" fill="#ac69c7"/><rect x="360" width="8" height="8" fill="#b167c7"/><rect x="368" width="8" height="8" fill="#b663c7"/><rect x="376" width="8" height="8" fill="#bb5fc7"/><rect x="384" width="8" height="8" fill="#c05ac7"/><rect x="392" width="8" height="8" fill="#c553c7"/><rect x="400" width="8" height="8" fill="#c74bc4"/><rect x="408" width="8" height="8" fill="#c73fbf"/><rect x="416" width="8" height="8" fill="#c72bbb"/><rect x="424" width="8" height="8" fill="#c725b6"/><rect x="432" width="8" height="8" fill="#c722b2"/><rect x="440" width="8" height="8" fill="#c71fae"/><rect x="448" width="8" height="8" fill="#c71cab"/><rect x="456" width="8" height="8" fill="#c719a7"/><rect x="464" width="8" height="8" fill="#c716a3"/><rect x="472" width="8" height="8" fill="#c713a0"/><rect x="480" width="8" height="8" fill="#c7109d"/><rect x="488" width="8" height="8" fill="#c70e9a"/><rect x="496" width="8" height="8" fill="#c70c97"/><rect x="504" width="8" height="8" fill="#c70a94"/><rect x="512" width="8" height="8" fill="#c70891"/><rect x="520" width="8" height="8" fill="#c7078e"/><rect x="528" width="8" height="8" fill="#c7058c"/><rect x="536" width="8" height="8" fill="#c7048a"/><rect x="544" width="8" height="8" fill="#c70387"/><rect x="552" width="8" height="8" fill="#c70385"/><rect x="560" width="8" height="8" fill="#c70283"/><rect x="568" width="8" height="8" fill="#c70281"/><rect x="576" width="8" height="8" fill="#c70180"/><rect x="584" width="8" height="8" fill="#c7017e"/></g><g transform="translate(0 616)"><rect x="160" width="8" height="8" fill="#0196c7"/><rect x="168" width="8" height="8" fill="#0294c7"/><rect x="176" width="8" height="8" fill="#0292c7"/><rect x="184" width="8" height="8" fill="#0390c7"/><rect x="192" width="8" height="8" fill="#048dc7"/><rect x="200" width="8" height="8" fill="#058ac7"/><rect x="208" width="8" height="8" fill="#0687c7"/><rect x="216" width="8" height="8" fill="#0784c7"/><rect x="224" width="8" height="8" fill="#0880c7"/><rect x="232" width="8" height="8" fill="#0a7bc7"/><rect x="240" width="8" height="8" fill="#0c76c7"/><rect x="248" width="8" height="8" fill="#0e70c7"/><rect x="256" width="8" height="8" fill="#296bc7"/><rect x="264" width="8" height="8" fill="#446bc7"/><rect x="272" width="8" height="8" fill="#566ac7"/><rect x="280" width="8" height="8" fill="#6369c7"/><rect x="288" width="8" height="8" fill="#6f68c7"/><rect x="296" width="8" height="8" fill="#7968c7"/><rect x="304" width="8" height="8" fill="#8267c7"/><rect x="312" width="8" height="8" fill="#8a66c7"/><rect x="320" width="8" height="8" fill="#9264c7"/><rect x="328" width="8" height="8" fill="#9963c7"/><rect x="336" width="8" height="8" fill="#9f61c7"/><rect x="344" width="8" height="8" fill="#a55ec7"/><rect x="352" width="8" height="8" fill="#ab5bc7"/><rect x="360" width="8" height="8" fill="#b057c7"/><rect x="368" width="8" height="8" fill="#b652c7"/><rect x="376" width="8" height="8" fill="#bb4cc7"/><rect x="384" width="8" height="8" fill="#c044c7"/><rect x="392" width="8" height="8" fill="#c538c7"/><rect x="400" width="8" height="8" fill="#c726c4"/><rect x="408" width="8" height="8" fill="#c724bf"/><rect x="416" width="8" height="8" fill="#c722bb"/><rect x="424" width="8" height="8" fill="#c71fb7"/><rect x="432" width="8" height="8" fill="#c71db3"/><rect x="440" width="8" height="8" fill="#c71aaf"/><rect x="448" width="8" height="8" fill="#c718ab"/><rect x="456" width="8" height="8" fill="#c715a8"/><rect x="464" width="8" height="8" fill="#c713a4"/><rect x="472" width="8" height="8" fill="#c710a1"/><rect x="480" width="8" height="8" fill="#c70e9e"/><rect x="488" width="8" height="8" fill="#c70c9b"/><rect x="496" width="8" height="8" fill="#c70a98"/><rect x="504" width="8" height="8" fill="#c70895"/><rect x="512" width="8" height="8" fill="#c70793"/><rect x="520" width="8" height="8" fill="#c70690"/><rect x="528" width="8" height="8" fill="#c7058e"/><rect x="536" width="8" height="8" fill="#c7048c"/><rect x="544" width="8" height="8" fill="#c7038a"/><rect x="552" width="8" height="8" fill="#c70288"/><rect x="560" width="8" height="8" fill="#c70286"/></g><g transform="translate(0 624)"><rect x="160" width="8" height="8" fill="#0192c7"/><rect x="168" width="8" height="8" fill="#0290c7"/><rect x="176" width="8" height="8" fill="#028ec7"/><rect x="184" width="8" height="8" fill="#028bc7"/><rect x="192" width="8" height="8" fill="#0388c7"/><rect x="200" width="8" height="8" fill="#0485c7"/><rect x="208" width="8" height="8" fill="#0581c7"/><rect x="216" width="8" height="8" fill="#067dc7"/><rect x="224" width="8" height="8" fill="#0779c7"/><rect x="232" width="8" height="8" fill="#0974c7"/><rect x="240" width="8" height="8" fill="#0a6ec7"/><rect x="248" width="8" height="8" fill="#0c66c7"/><rect x="256" width="8" height="8" fill="#3263c7"/><rect x="264" width="8" height="8" fill="#4862c7"/><rect x="272" width="8" height="8" fill="#5861c7"/><rect x="280" width="8" height="8" fill="#6460c7"/><rect x="288" width="8" height="8" fill="#6f5fc7"/><rect x="296" width="8" height="8" fill="#795dc7"/><rect x="304" width="8" height="8" fill="#825cc7"/><rect x="312" width="8" height="8" fill="#8a5ac7"/><rect x="320" width="8" height="8" fill="#9158c7"/><rect x="328" width="8" height="8" fill="#9855c7"/><rect x="336" width="8" height="8" fill="#9e52c7"/><rect x="344" width="8" height="8" fill="#a54ec7"/><rect x="352" width="8" height="8" fill="#aa4ac7"/><rect x="360" width="8" height="8" fill="#b044c7"/><rect x="368" width="8" height="8" fill="#b53bc7"/><rect x="376" width="8" height="8" fill="#ba2cc7"/><rect x="384" width="8" height="8" fill="#bf22c7"/><rect x="392" width="8" height="8" fill="#c521c7"/><rect x="400" width="8" height="8" fill="#c720c4"/><rect x="408" width="8" height="8" fill="#c71ec0"/><rect x="416" width="8" height="8" fill="#c71dbc"/><rect x="424" width="8" height="8" fill="#c71bb7"/><rect x="432" width="8" height="8" fill="#c718b4"/><rect x="440" width="8" height="8" fill="#c716b0"/><rect x="448" width="8" height="8" fill="#c714ac"/><rect x="456" width="8" height="8" fill="#c712a9"/><rect x="464" width="8" height="8" fill="#c710a6"/><rect x="472" width="8" height="8" fill="#c70ea2"/><rect x="480" width="8" height="8" fill="#c70c9f"/><rect x="488" width="8" height="8" fill="#c70a9d"/><rect x="496" width="8" height="8" fill="#c7099a"/><rect x="504" width="8" height="8" fill="#c70797"/><rect x="512" width="8" height="8" fill="#c70695"/><rect x="520" width="8" height="8" fill="#c70592"/><rect x="528" width="8" height="8" fill="#c70490"/><rect x="536" width="8" height="8" fill="#c7038e"/></g><g transform="translate(0 632)"><rect x="168" width="8" height="8" fill="#018cc7"/><rect x="176" width="8" height="8" fill="#0289c7"/><rect x="184" width="8" height="8" fill="#0286c7"/><rect x="192" width="8" height="8" fill="#0383c7"/><rect x="200" width="8" height="8" fill="#0380c7"/><rect x="208" width="8" height="8" fill="#047cc7"/><rect x="216" width="8" height="8" fill="#0577c7"/><rect x="224" width="8" height="8" fill="#0672c7"/><rect x="232" width="8" height="8" fill="#076cc7"/><rect x="240" width="8" height="8" fill="#0864c7"/><rect x="248" width="8" height="8" fill="#155cc7"/><rect x="256" width="8" height="8" fill="#395bc7"/><rect x="264" width="8" height="8" fill="#4b59c7"/><rect x="272" width="8" height="8" fill="#5957c7"/><rect x="280" width="8" height="8" fill="#6556c7"/><rect x="288" width="8" height="8" fill="#7054c7"/><rect x="296" width="8" height="8" fill="#7952c7"/><rect x="304" width="8" height="8" fill="#824fc7"/><rect x="312" width="8" height="8" fill="#894dc7"/><rect x="320" width="8" height="8" fill="#9149c7"/><rect x="328" width="8" height="8" fill="#9745c7"/><rect x="336" width="8" height="8" fill="#9e40c7"/><rect x="344" width="8" height="8" fill="#a43ac7"/><rect x="352" width="8" height="8" fill="#aa30c7"/><rect x="360" width="8" height="8" fill="#af1ec7"/><rect x="368" width="8" height="8" fill="#b51ec7"/><rect x="376" width="8" height="8" fill="#ba1dc7"/><rect x="384" width="8" height="8" fill="#bf1dc7"/><rect x="392" width="8" height="8" fill="#c41cc7"/><rect x="400" width="8" height="8" fill="#c71bc5"/><rect x="408" width="8" height="8" fill="#c719c0"/><rect x="416" width="8" height="8" fill="#c718bc"/><rect x="424" width="8" height="8" fill="#c716b8"/><rect x="432" width="8" height="8" fill="#c714b4"/><rect x="440" width="8" height="8" fill="#c713b1"/><rect x="448" width="8" height="8" fill="#c711ad"/><rect x="456" width="8" height="8" fill="#c70faa"/><rect x="464" width="8" height="8" fill="#c70da7"/><rect x="472" width="8" height="8" fill="#c70ba4"/><rect x="480" width="8" height="8" fill="#c70aa1"/><rect x="488" width="8" height="8" fill="#c7089e"/><rect x="496" width="8" height="8" fill="#c7079b"/><rect x="504" width="8" height="8" fill="#c70699"/><rect x="512" width="8" height="8" fill="#c70596"/></g><g transform="translate(0 640)"><rect x="168" width="8" height="8" fill="#0188c7"/><rect x="176" width="8" height="8" fill="#0185c7"/><rect x="184" width="8" height="8" fill="#0282c7"/><rect x="192" width="8" height="8" fill="#027ec7"/><rect x="200" width="8" height="8" fill="#037ac7"/><rect x="208" width="8" height="8" fill="#0375c7"/><rect x="216" width="8" height="8" fill="#0470c7"/><rect x="224" width="8" height="8" fill="#056ac7"/><rect x="232" width="8" height="8" fill="#0663c7"/><rect x="240" width="8" height="8" fill="#075ac7"/><rect x="248" width="8" height="8" fill="#2553c7"/><rect x="256" width="8" height="8" fill="#3e51c7"/><rect x="264" width="8" height="8" fill="#4e4fc7"/><rect x="272" width="8" height="8" fill="#5b4dc7"/><rect x="280" width="8" height="8" fill="#664ac7"/><rect x="288" width="8" height="8" fill="#7048c7"/><rect x="296" width="8" height="8" fill="#7945c7"/><rect x="304" width="8" height="8" fill="#8241c7"/><rect x="312" width="8" height="8" fill="#893dc7"/><rect x="320" width="8" height="8" fill="#9037c7"/><rect x="328" width="8" height="8" fill="#9730c7"/><rect x="336" width="8" height="8" fill="#9d23c7"/><rect x="344" width="8" height="8" fill="#a418c7"/><rect x="352" width="8" height="8" fill="#aa18c7"/><rect x="360" width="8" height="8" fill="#b019c7"/><rect x="368" width="8" height="8" fill="#b519c7"/><rect x="376" width="8" height="8" fill="#ba18c7"/><rect x="384" width="8" height="8" fill="#bf18c7"/><rect x="392" width="8" height="8" fill="#c417c7"/><rect x="400" width="8" height="8" fill="#c716c5"/><rect x="408" width="8" height="8" fill="#c715c1"/><rect x="416" width="8" height="8" fill="#c714bd"/><rect x="424" width="8" height="8" fill="#c712b9"/><rect x="432" width="8" height="8" fill="#c711b5"/><rect x="440" width="8" height="8" fill="#c70fb1"/><rect x="448" width="8" height="8" fill="#c70eae"/><rect x="456" width="8" height="8" fill="#c70cab"/><rect x="464" width="8" height="8" fill="#c70ba8"/><rect x="472" width="8" height="8" fill="#c709a5"/><rect x="480" width="8" height="8" fill="#c708a2"/><rect x="488" width="8" height="8" fill="#c7079f"/></g><g transform="translate(0 648)"><rect x="176" width="8" height="8" fill="#0180c7"/><rect x="184" width="8" height="8" fill="#017dc7"/><rect x="192" width="8" height="8" fill="#0279c7"/><rect x="200" width="8" height="8" fill="#0274c7"/><rect x="208" width="8" height="8" fill="#036fc7"/><rect x="216" width="8" height="8" fill="#0369c7"/><rect x="224" width="8" height="8" fill="#0462c7"/><rect x="232" width="8" height="8" fill="#0559c7"/><rect x="240" width="8" height="8" fill="#064ec7"/><rect x="248" width="8" height="8" fill="#2e4ac7"/><rect x="256" width="8" height="8" fill="#4247c7"/><rect x="264" width="8" height="8" fill="#5144c7"/><rect x="272" width="8" height="8" fill="#5d41c7"/><rect x="280" width="8" height="8" fill="#683dc7"/><rect x="288" width="8" height="8" fill="#7139c7"/><rect x="296" width="8" height="8" fill="#7a34c7"/><rect x="304" width="8" height="8" fill="#822ec7"/><rect x="312" width="8" height="8" fill="#8925c7"/><rect x="320" width="8" height="8" fill="#9012c7"/><rect x="328" width="8" height="8" fill="#9712c7"/><rect x="336" width="8" height="8" fill="#9e13c7"/><rect x="344" width="8" height="8" fill="#a514c7"/><rect x="352" width="8" height="8" fill="#aa14c7"/><rect x="360" width="8" height="8" fill="#b014c7"/><rect x="368" width="8" height="8" fill="#b514c7"/><rect x="376" width="8" height="8" fill="#ba14c7"/><rect x="384" width="8" height="8" fill="#bf14c7"/><rect x="392" width="8" height="8" fill="#c413c7"/><rect x="400" width="8" height="8" fill="#c712c5"/><rect x="408" width="8" height="8" fill="#c711c1"/><rect x="416" width="8" height="8" fill="#c710bd"/><rect x="424" width="8" height="8" fill="#c70fb9"/><rect x="432" width="8" height="8" fill="#c70eb6"/><rect x="440" width="8" height="8" fill="#c70db2"/><rect x="448" width="8" height="8" fill="#c70baf"/><rect x="456" width="8" height="8" fill="#c70aac"/><rect x="464" width="8" height="8" fill="#c709a9"/><rect x="472" width="8" height="8" fill="#c708a6"/></g><g transform="translate(0 656)"><rect x="176" width="8" height="8" fill="#017bc7"/><rect x="184" width="8" height="8" fill="#0177c7"/><rect x="192" width="8" height="8" fill="#0173c7"/><rect x="200" width="8" height="8" fill="#026ec7"/><rect x="208" width="8" height="8" fill="#0268c7"/><rect x="216" width="8" height="8" fill="#0361c7"/><rect x="224" width="8" height="8" fill="#0358c7"/><rect x="232" width="8" height="8" fill="#044ec7"/><rect x="240" width="8" height="8" fill="#1742c7"/><rect x="248" width="8" height="8" fill="#353fc7"/><rect x="256" width="8" height="8" fill="#463bc7"/><rect x="264" width="8" height="8" fill="#5437c7"/><rect x="272" width="8" height="8" fill="#5f32c7"/><rect x="280" width="8" height="8" fill="#692dc7"/><rect x="288" width="8" height="8" fill="#7225c7"/><rect x="296" width="8" height="8" fill="#7a1ac7"/><rect x="304" width="8" height="8" fill="#820cc7"/><rect x="312" width="8" height="8" fill="#8b0dc7"/><rect x="320" width="8" height="8" fill="#920ec7"/><rect x="328" width="8" height="8" fill="#990fc7"/><rect x="336" width="8" height="8" fill="#9f0fc7"/><rect x="344" width="8" height="8" fill="#a510c7"/><rect x="352" width="8" height="8" fill="#ab10c7"/><rect x="360" width="8" height="8" fill="#b010c7"/><rect x="368" width="8" height="8" fill="#b510c7"/><rect x="376" width="8" height="8" fill="#ba10c7"/><rect x="384" width="8" height="8" fill="#bf10c7"/><rect x="392" width="8" height="8" fill="#c40fc7"/><rect x="400" width="8" height="8" fill="#c70fc6"/><rect x="408" width="8" height="8" fill="#c70ec2"/><rect x="416" width="8" height="8" fill="#c70dbe"/><rect x="424" width="8" height="8" fill="#c70cba"/><rect x="432" width="8" height="8" fill="#c70bb6"/><rect x="440" width="8" height="8" fill="#c70ab3"/><rect x="448" width="8" height="8" fill="#c709b0"/></g><g transform="translate(0 664)"><rect x="184" width="8" height="8" fill="#0172c7"/><rect x="192" width="8" height="8" fill="#016dc7"/><rect x="200" width="8" height="8" fill="#0167c7"/><rect x="208" width="8" height="8" fill="#0260c7"/><rect x="216" width="8" height="8" fill="#0258c7"/><rect x="224" width="8" height="8" fill="#034ec7"/><rect x="232" width="8" height="8" fill="#0340c7"/><rect x="240" width="8" height="8" fill="#2436c7"/><rect x="248" width="8" height="8" fill="#3a32c7"/><rect x="256" width="8" height="8" fill="#4a2dc7"/><rect x="264" width="8" height="8" fill="#5626c7"/><rect x="272" width="8" height="8" fill="#611dc7"/><rect x="280" width="8" height="8" fill="#6a0dc7"/><rect x="288" width="8" height="8" fill="#7408c7"/><rect x="296" width="8" height="8" fill="#7d09c7"/><rect x="304" width="8" height="8" fill="#850ac7"/><rect x="312" width="8" height="8" fill="#8d0bc7"/><rect x="320" width="8" height="8" fill="#940bc7"/><rect x="328" width="8" height="8" fill="#9a0cc7"/><rect x="336" width="8" height="8" fill="#a00cc7"/><rect x="344" width="8" height="8" fill="#a60dc7"/><rect x="352" width="8" height="8" fill="#ac0dc7"/><rect x="360" width="8" height="8" fill="#b10dc7"/><rect x="368" width="8" height="8" fill="#b60dc7"/><rect x="376" width="8" height="8" fill="#ba0dc7"/><rect x="384" width="8" height="8" fill="#bf0dc7"/><rect x="392" width="8" height="8" fill="#c30cc7"/><rect x="400" width="8" height="8" fill="#c70cc6"/><rect x="408" width="8" height="8" fill="#c70bc2"/><rect x="416" width="8" height="8" fill="#c70bbe"/><rect x="424" width="8" height="8" fill="#c70aba"/></g><g transform="translate(0 672)"><rect x="192" width="8" height="8" fill="#0166c7"/><rect x="200" width="8" height="8" fill="#0160c7"/><rect x="208" width="8" height="8" fill="#0158c7"/><rect x="216" width="8" height="8" fill="#024ec7"/><rect x="224" width="8" height="8" fill="#0241c7"/><rect x="232" width="8" height="8" fill="#022ec7"/><rect x="240" width="8" height="8" fill="#2c27c7"/><rect x="248" width="8" height="8" fill="#3f20c7"/><rect x="256" width="8" height="8" fill="#4d15c7"/><rect x="264" width="8" height="8" fill="#5905c7"/><rect x="272" width="8" height="8" fill="#6505c7"/><rect x="280" width="8" height="8" fill="#6f06c7"/><rect x="288" width="8" height="8" fill="#7806c7"/><rect x="296" width="8" height="8" fill="#8107c7"/><rect x="304" width="8" height="8" fill="#8808c7"/><rect x="312" width="8" height="8" fill="#8f08c7"/><rect x="320" width="8" height="8" fill="#9609c7"/><rect x="328" width="8" height="8" fill="#9c09c7"/><rect x="336" width="8" height="8" fill="#a20ac7"/><rect x="344" width="8" height="8" fill="#a70ac7"/><rect x="352" width="8" height="8" fill="#ac0ac7"/><rect x="360" width="8" height="8" fill="#b10ac7"/><rect x="368" width="8" height="8" fill="#b60ac7"/><rect x="376" width="8" height="8" fill="#bb0ac7"/><rect x="384" width="8" height="8" fill="#bf0ac7"/><rect x="392" width="8" height="8" fill="#c30ac7"/><rect x="400" width="8" height="8" fill="#c709c6"/></g><g transform="translate(0 680)"><rect x="192" width="8" height="8" fill="#015fc7"/><rect x="200" width="8" height="8" fill="#0158c7"/><rect x="208" width="8" height="8" fill="#014ec7"/><rect x="216" width="8" height="8" fill="#0142c7"/><rect x="224" width="8" height="8" fill="#0231c7"/><rect x="232" width="8" height="8" fill="#191ac7"/><rect x="240" width="8" height="8" fill="#330bc7"/><rect x="248" width="8" height="8" fill="#4503c7"/><rect x="256" width="8" height="8" fill="#5403c7"/><rect x="264" width="8" height="8" fill="#6004c7"/><rect x="272" width="8" height="8" fill="#6a04c7"/><rect x="280" width="8" height="8" fill="#7405c7"/><rect x="288" width="8" height="8" fill="#7c05c7"/><rect x="296" width="8" height="8" fill="#8406c7"/><rect x="304" width="8" height="8" fill="#8b06c7"/><rect x="312" width="8" height="8" fill="#9107c7"/><rect x="320" width="8" height="8" fill="#9707c7"/><rect x="328" width="8" height="8" fill="#9d07c7"/><rect x="336" width="8" height="8" fill="#a308c7"/><rect x="344" width="8" height="8" fill="#a808c7"/><rect x="352" width="8" height="8" fill="#ad08c7"/><rect x="360" width="8" height="8" fill="#b208c7"/><rect x="368" width="8" height="8" fill="#b608c7"/><rect x="376" width="8" height="8" fill="#bb08c7"/></g><g transform="translate(0 688)"><rect x="200" width="8" height="8" fill="#014fc7"/><rect x="208" width="8" height="8" fill="#0144c7"/><rect x="216" width="8" height="8" fill="#0134c7"/><rect x="224" width="8" height="8" fill="#0115c7"/><rect x="232" width="8" height="8" fill="#2b02c7"/><rect x="240" width="8" height="8" fill="#4002c7"/><rect x="248" width="8" height="8" fill="#4f02c7"/><rect x="256" width="8" height="8" fill="#5c02c7"/><rect x="264" width="8" height="8" fill="#6603c7"/><rect x="272" width="8" height="8" fill="#6f03c7"/><rect x="280" width="8" height="8" fill="#7804c7"/><rect x="288" width="8" height="8" fill="#7f04c7"/><rect x="296" width="8" height="8" fill="#8604c7"/><rect x="304" width="8" height="8" fill="#8d05c7"/><rect x="312" width="8" height="8" fill="#9305c7"/><rect x="320" width="8" height="8" fill="#9905c7"/><rect x="328" width="8" height="8" fill="#9e06c7"/><rect x="336" width="8" height="8" fill="#a406c7"/><rect x="344" width="8" height="8" fill="#a906c7"/><rect x="352" width="8" height="8" fill="#ad06c7"/></g><g transform="translate(0 696)"><rect x="200" width="8" height="8" fill="#0145c7"/><rect x="208" width="8" height="8" fill="#0136c7"/><rect x="216" width="8" height="8" fill="#011dc7"/><rect x="224" width="8" height="8" fill="#2401c7"/><rect x="232" width="8" height="8" fill="#3b01c7"/><rect x="240" width="8" height="8" fill="#4b01c7"/><rect x="248" width="8" height="8" fill="#5702c7"/><rect x="256" width="8" height="8" fill="#6202c7"/><rect x="264" width="8" height="8" fill="#6b02c7"/><rect x="272" width="8" height="8" fill="#7402c7"/><rect x="280" width="8" height="8" fill="#7b03c7"/><rect x="288" width="8" height="8" fill="#8203c7"/><rect x="296" width="8" height="8" fill="#8903c7"/><rect x="304" width="8" height="8" fill="#8f04c7"/><rect x="312" width="8" height="8" fill="#9504c7"/><rect x="320" width="8" height="8" fill="#9a04c7"/><rect x="328" width="8" height="8" fill="#a004c7"/></g><g transform="translate(0 704)"><rect x="208" width="8" height="8" fill="#0123c7"/><rect x="216" width="8" height="8" fill="#1c01c7"/><rect x="224" width="8" height="8" fill="#3601c7"/><rect x="232" width="8" height="8" fill="#4701c7"/><rect x="240" width="8" height="8" fill="#5301c7"/><rect x="248" width="8" height="8" fill="#5e01c7"/><rect x="256" width="8" height="8" fill="#6701c7"/><rect x="264" width="8" height="8" fill="#7002c7"/><rect x="272" width="8" height="8" fill="#7702c7"/><rect x="280" width="8" height="8" fill="#7f02c7"/><rect x="288" width="8" height="8" fill="#8502c7"/><rect x="296" width="8" height="8" fill="#8b03c7"/><rect x="304" width="8" height="8" fill="#9103c7"/><rect x="312" width="8" height="8" fill="#9703c7"/></g><g transform="translate(0 712)"><rect x="216" width="8" height="8" fill="#3100c7"/><rect x="224" width="8" height="8" fill="#4301c7"/><rect x="232" width="8" height="8" fill="#5001c7"/><rect x="240" width="8" height="8" fill="#5a01c7"/><rect x="248" width="8" height="8" fill="#6401c7"/><rect x="256" width="8" height="8" fill="#6c01c7"/><rect x="264" width="8" height="8" fill="#7401c7"/><rect x="272" width="8" height="8" fill="#7b01c7"/><rect x="280" width="8" height="8" fill="#8202c7"/><rect x="288" width="8" height="8" fill="#8802c7"/></g><g transform="translate(0 720)"><rect x="224" width="8" height="8" fill="#4c00c7"/><rect x="232" width="8" height="8" fill="#5700c7"/><rect x="240" width="8" height="8" fill="#6001c7"/><rect x="248" width="8" height="8" fill="#6901c7"/><rect x="256" width="8" height="8" fill="#7101c7"/><rect x="264" width="8" height="8" fill="#7801c7"/></g><g transform="translate(0 728)"><rect x="232" width="8" height="8" fill="#5d00c7"/><rect x="240" width="8" height="8" fill="#6600c7"/></g></g>
<rect x="83" y="33" width="1" height="739" fill="#000" fill-opacity="0.72"/>
<rect x="182" y="33" width="1" height="739" fill="#000" fill-opacity="0.72"/>
<rect x="281" y="33" width="1" height="739" fill="#000" fill-opacity="0.72"/>
<rect x="379" y="33" width="1" height="739" fill="#000" fill-opacity="0.72"/>
<rect x="478" y="33" width="1" height="739" fill="#000" fill-opacity="0.72"/>
<rect x="576" y="33" width="1" height="739" fill="#000" fill-opacity="0.72"/>
<rect x="675" y="33" width="1" height="739" fill="#000" fill-opacity="0.72"/>
<rect x="773" y="33" width="1" height="739" fill="#000" fill-opacity="0.72"/>
<rect x="10" y="661" width="887" height="1" fill="#000" fill-opacity="0.72"/>
<rect x="10" y="587" width="887" height="1" fill="#000" fill-opacity="0.72"/>
<rect x="10" y="513" width="887" height="1" fill="#000" fill-opacity="0.72"/>
<rect x="10" y="439" width="887" height="1" fill="#000" fill-opacity="0.72"/>
<rect x="10" y="365" width="887" height="1" fill="#000" fill-opacity="0.72"/>
<rect x="10" y="291" width="887" height="1" fill="#000" fill-opacity="0.72"/>
<rect x="10" y="217" width="887" height="1" fill="#000" fill-opacity="0.72"/>
<rect x="10" y="143" width="887" height="1" fill="#000" fill-opacity="0.72"/>
<rect x="10" y="69" width="887" height="1" fill="#000" fill-opacity="0.72"/>
<path d="M392.5 33V772M10 491.5H897" stroke="#e8e8e8" stroke-opacity="0.6" stroke-width="1" stroke-dasharray="4 2" stroke-dashoffset="2"/>
</g>
<g clip-path="url(#tri)"><g filter="url(#bl)"><g transform="translate(0 304)"><rect x="424" width="8" height="8" fill="#99ff08"/><rect x="432" width="8" height="8" fill="#a3ff07"/></g><g transform="translate(0 312)"><rect x="416" width="8" height="8" fill="#90ff0e"/><rect x="424" width="8" height="8" fill="#9cff0a"/><rect x="432" width="8" height="8" fill="#a6ff09"/><rect x="440" width="8" height="8" fill="#b0ff08"/><rect x="448" width="8" height="8" fill="#b8ff07"/></g><g transform="translate(0 320)"><rect x="416" width="8" height="8" fill="#97ff32"/><rect x="424" width="8" height="8" fill="#a0ff23"/><rect x="432" width="8" height="8" fill="#aaff0b"/><rect x="440" width="8" height="8" fill="#b3ff0a"/><rect x="448" width="8" height="8" fill="#bcff09"/><rect x="456" width="8" height="8" fill="#c5ff08"/></g><g transform="translate(0 328)"><rect x="408" width="8" height="8" fill="#94ff4d"/><rect x="416" width="8" height="8" fill="#9eff46"/><rect x="424" width="8" height="8" fill="#a7ff3c"/><rect x="432" width="8" height="8" fill="#afff30"/><rect x="440" width="8" height="8" fill="#b8ff1d"/><rect x="448" width="8" height="8" fill="#c0ff0c"/><rect x="456" width="8" height="8" fill="#c9ff0a"/><rect x="464" width="8" height="8" fill="#d1ff09"/><rect x="472" width="8" height="8" fill="#d9ff08"/></g><g transform="translate(0 336)"><rect x="408" width="8" height="8" fill="#9bff5c"/><rect x="416" width="8" height="8" fill="#a4ff55"/><rect x="424" width="8" height="8" fill="#adff4e"/><rect x="432" width="8" height="8" fill="#b5ff45"/><rect x="440" width="8" height="8" fill="#beff3a"/><rect x="448" width="8" height="8" fill="#c5ff2c"/><rect x="456" width="8" height="8" fill="#cdff12"/><rect x="464" width="8" height="8" fill="#d5ff0b"/><rect x="472" width="8" height="8" fill="#ddff0a"/><rect x="480" width="8" height="8" fill="#e5ff09"/></g><g transform="translate(0 344)"><rect x="400" width="8" height="8" fill="#99ff6e"/><rect x="408" width="8" height="8" fill="#a2ff69"/><rect x="416" width="8" height="8" fill="#abff63"/><rect x="424" width="8" height="8" fill="#b4ff5d"/><rect x="432" width="8" height="8" fill="#bcff56"/><rect x="440" width="8" height="8" fill="#c4ff4d"/><rect x="448" width="8" height="8" fill="#cbff44"/><rect x="456" width="8" height="8" fill="#d3ff38"/><rect x="464" width="8" height="8" fill="#dbff27"/><rect x="472" width="8" height="8" fill="#e2ff0c"/><rect x="480" width="8" height="8" fill="#eaff0a"/><rect x="488" width="8" height="8" fill="#f2ff09"/><rect x="496" width="8" height="8" fill="#f9ff08"/></g><g transform="translate(0 352)"><rect x="400" width="8" height="8" fill="#a1ff7a"/><rect x="408" width="8" height="8" fill="#aaff75"/><rect x="416" width="8" height="8" fill="#b2ff70"/><rect x="424" width="8" height="8" fill="#baff6a"/><rect x="432" width="8" height="8" fill="#c2ff64"/><rect x="440" width="8" height="8" fill="#caff5d"/><rect x="448" width="8" height="8" fill="#d1ff55"/><rect x="456" width="8" height="8" fill="#d9ff4c"/><rect x="464" width="8" height="8" fill="#e0ff41"/><rect x="472" width="8" height="8" fill="#e8ff34"/><rect x="480" width="8" height="8" fill="#efff1f"/><rect x="488" width="8" height="8" fill="#f7ff0b"/><rect x="496" width="8" height="8" fill="#ffff09"/><rect x="504" width="8" height="8" fill="#fff808"/></g><g transform="translate(0 360)"><rect x="392" width="8" height="8" fill="#9fff89"/><rect x="400" width="8" height="8" fill="#a9ff85"/><rect x="408" width="8" height="8" fill="#b1ff81"/><rect x="416" width="8" height="8" fill="#b9ff7c"/><rect x="424" width="8" height="8" fill="#c1ff77"/><rect x="432" width="8" height="8" fill="#c9ff71"/><rect x="440" width="8" height="8" fill="#d0ff6b"/><rect x="448" width="8" height="8" fill="#d8ff64"/><rect x="456" width="8" height="8" fill="#dfff5c"/><rect x="464" width="8" height="8" fill="#e6ff54"/><rect x="472" width="8" height="8" fill="#eeff4a"/><rect x="480" width="8" height="8" fill="#f5ff3e"/><rect x="488" width="8" height="8" fill="#fdff2f"/><rect x="496" width="8" height="8" fill="#fff912"/><rect x="504" width="8" height="8" fill="#fff209"/><rect x="512" width="8" height="8" fill="#ffec08"/></g><g transform="translate(0 368)"><rect x="392" width="8" height="8" fill="#a8ff94"/><rect x="400" width="8" height="8" fill="#b1ff91"/><rect x="408" width="8" height="8" fill="#b9ff8d"/><rect x="416" width="8" height="8" fill="#c0ff88"/><rect x="424" width="8" height="8" fill="#c8ff83"/><rect x="432" width="8" height="8" fill="#cfff7e"/><rect x="440" width="8" height="8" fill="#d6ff78"/><rect x="448" width="8" height="8" fill="#deff71"/><rect x="456" width="8" height="8" fill="#e5ff6b"/><rect x="464" width="8" height="8" fill="#ecff63"/><rect x="472" width="8" height="8" fill="#f4ff5b"/><rect x="480" width="8" height="8" fill="#fcff52"/><rect x="488" width="8" height="8" fill="#fffb46"/><rect x="496" width="8" height="8" fill="#fff437"/><rect x="504" width="8" height="8" fill="#ffed25"/><rect x="512" width="8" height="8" fill="#ffe609"/><rect x="520" width="8" height="8" fill="#ffe007"/><rect x="528" width="8" height="8" fill="#ffdb06"/></g><g transform="translate(0 376)"><rect x="384" width="8" height="8" fill="#a8ffa2"/><rect x="392" width="8" height="8" fill="#b0ff9f"/><rect x="400" width="8" height="8" fill="#b9ff9c"/><rect x="408" width="8" height="8" fill="#c0ff98"/><rect x="416" width="8" height="8" fill="#c7ff93"/><rect x="424" width="8" height="8" fill="#cfff8f"/><rect x="432" width="8" height="8" fill="#d6ff8a"/><rect x="440" width="8" height="8" fill="#ddff84"/><rect x="448" width="8" height="8" fill="#e4ff7e"/><rect x="456" width="8" height="8" fill="#ebff78"/><rect x="464" width="8" height="8" fill="#f3ff71"/><rect x="472" width="8" height="8" fill="#faff6a"/><rect x="480" width="8" height="8" fill="#fffc61"/><rect x="488" width="8" height="8" fill="#fff555"/><rect x="496" width="8" height="8" fill="#ffee4a"/><rect x="504" width="8" height="8" fill="#ffe73d"/><rect x="512" width="8" height="8" fill="#ffe12e"/><rect x="520" width="8" height="8" fill="#ffda1a"/><rect x="528" width="8" height="8" fill="#ffd507"/><rect x="536" width="8" height="8" fill="#ffd006"/></g><g transform="translate(0 384)"><rect x="376" width="8" height="8" fill="#a8ffaf"/><rect x="384" width="8" height="8" fill="#b1ffac"/><rect x="392" width="8" height="8" fill="#b9ffaa"/><rect x="400" width="8" height="8" fill="#c0ffa6"/><rect x="408" width="8" height="8" fill="#c8ffa3"/><rect x="416" width="8" height="8" fill="#ceff9e"/><rect x="424" width="8" height="8" fill="#d5ff9a"/><rect x="432" width="8" height="8" fill="#dcff95"/><rect x="440" width="8" height="8" fill="#e3ff90"/><rect x="448" width="8" height="8" fill="#eaff8a"/><rect x="456" width="8" height="8" fill="#f1ff84"/><rect x="464" width="8" height="8" fill="#f9ff7e"/><rect x="472" width="8" height="8" fill="#fffe76"/><rect x="480" width="8" height="8" fill="#fff66c"/><rect x="488" width="8" height="8" fill="#ffef62"/><rect x="496" width="8" height="8" fill="#ffe858"/><rect x="504" width="8" height="8" fill="#ffe24d"/><rect x="512" width="8" height="8" fill="#ffdb41"/><rect x="520" width="8" height="8" fill="#ffd535"/><rect x="528" width="8" height="8" fill="#ffcf26"/><rect x="536" width="8" height="8" fill="#ffca0d"/><rect x="544" width="8" height="8" fill="#ffc505"/><rect x="552" width="8" height="8" fill="#ffc104"/></g><g transform="translate(0 392)"><rect x="376" width="8" height="8" fill="#b2ffb9"/><rect x="384" width="8" height="8" fill="#baffb6"/><rect x="392" width="8" height="8" fill="#c1ffb4"/><rect x="400" width="8" height="8" fill="#c8ffb1"/><rect x="408" width="8" height="8" fill="#cfffad"/><rect x="416" width="8" height="8" fill="#d5ffa9"/><rect x="424" width="8" height="8" fill="#dcffa5"/><rect x="432" width="8" height="8" fill="#e2ffa0"/><rect x="440" width="8" height="8" fill="#e9ff9b"/><rect x="448" width="8" height="8" fill="#f0ff96"/><rect x="456" width="8" height="8" fill="#f7ff90"/><rect x="464" width="8" height="8" fill="#ffff8a"/><rect x="472" width="8" height="8" fill="#fff880"/><rect x="480" width="8" height="8" fill="#fff176"/><rect x="488" width="8" height="8" fill="#ffea6d"/><rect x="496" width="8" height="8" fill="#ffe363"/><rect x="504" width="8" height="8" fill="#ffdc59"/><rect x="512" width="8" height="8" fill="#ffd64f"/><rect x="520" width="8" height="8" fill="#ffd045"/><rect x="528" width="8" height="8" fill="#ffca39"/><rect x="536" width="8" height="8" fill="#ffc52d"/><rect x="544" width="8" height="8" fill="#ffbf1d"/><rect x="552" width="8" height="8" fill="#ffba05"/><rect x="560" width="8" height="8" fill="#ffb604"/></g><g transform="translate(0 400)"><rect x="368" width="8" height="8" fill="#b3ffc4"/><rect x="376" width="8" height="8" fill="#bbffc2"/><rect x="384" width="8" height="8" fill="#c3ffc0"/><rect x="392" width="8" height="8" fill="#c9ffbd"/><rect x="400" width="8" height="8" fill="#d0ffbb"/><rect x="408" width="8" height="8" fill="#d6ffb7"/><rect x="416" width="8" height="8" fill="#dcffb3"/><rect x="424" width="8" height="8" fill="#e2ffaf"/><rect x="432" width="8" height="8" fill="#e9ffab"/><rect x="440" width="8" height="8" fill="#efffa6"/><rect x="448" width="8" height="8" fill="#f6ffa1"/><rect x="456" width="8" height="8" fill="#fdff9b"/><rect x="464" width="8" height="8" fill="#fff992"/><rect x="472" width="8" height="8" fill="#fff289"/><rect x="480" width="8" height="8" fill="#ffeb7f"/><rect x="488" width="8" height="8" fill="#ffe476"/><rect x="496" width="8" height="8" fill="#ffdd6c"/><rect x="504" width="8" height="8" fill="#ffd763"/><rect x="512" width="8" height="8" fill="#ffd15a"/><rect x="520" width="8" height="8" fill="#ffcb51"/><rect x="528" width="8" height="8" fill="#ffc547"/><rect x="536" width="8" height="8" fill="#ffc03d"/><rect x="544" width="8" height="8" fill="#ffba32"/><rect x="552" width="8" height="8" fill="#ffb525"/><rect x="560" width="8" height="8" fill="#ffb014"/><rect x="568" width="8" height="8" fill="#ffac03"/><rect x="576" width="8" height="8" fill="#ffa902"/></g><g transform="translate(0 408)"><rect x="368" width="8" height="8" fill="#bdffcc"/><rect x="376" width="8" height="8" fill="#c4ffcb"/><rect x="384" width="8" height="8" fill="#cbffc9"/><rect x="392" width="8" height="8" fill="#d1ffc7"/><rect x="400" width="8" height="8" fill="#d7ffc4"/><rect x="408" width="8" height="8" fill="#ddffc1"/><rect x="416" width="8" height="8" fill="#e2ffbd"/><rect x="424" width="8" height="8" fill="#e8ffb9"/><rect x="432" width="8" height="8" fill="#eeffb5"/><rect x="440" width="8" height="8" fill="#f5ffb0"/><rect x="448" width="8" height="8" fill="#fcffab"/><rect x="456" width="8" height="8" fill="#fffba3"/><rect x="464" width="8" height="8" fill="#fff49a"/><rect x="472" width="8" height="8" fill="#ffed91"/><rect x="480" width="8" height="8" fill="#ffe687"/><rect x="488" width="8" height="8" fill="#ffdf7e"/><rect x="496" width="8" height="8" fill="#ffd875"/><rect x="504" width="8" height="8" fill="#ffd26c"/><rect x="512" width="8" height="8" fill="#ffcc63"/><rect x="520" width="8" height="8" fill="#ffc65a"/><rect x="528" width="8" height="8" fill="#ffc052"/><rect x="536" width="8" height="8" fill="#ffba49"/><rect x="544" width="8" height="8" fill="#ffb540"/><rect x="552" width="8" height="8" fill="#ffb036"/><rect x="560" width="8" height="8" fill="#ffab2b"/><rect x="568" width="8" height="8" fill="#ffa71e"/><rect x="576" width="8" height="8" fill="#ffa209"/><rect x="584" width="8" height="8" fill="#ff9f02"/></g><g transform="translate(0 416)"><rect x="360" width="8" height="8" fill="#beffd5"/><rect x="368" width="8" height="8" fill="#c6ffd4"/><rect x="376" width="8" height="8" fill="#cdffd3"/><rect x="384" width="8" height="8" fill="#d3ffd2"/><rect x="392" width="8" height="8" fill="#d8ffcf"/><rect x="400" width="8" height="8" fill="#deffcd"/><rect x="408" width="8" height="8" fill="#e3ffca"/><rect x="416" width="8" height="8" fill="#e8ffc6"/><rect x="424" width="8" height="8" fill="#eeffc2"/><rect x="432" width="8" height="8" fill="#f4ffbe"/><rect x="440" width="8" height="8" fill="#fbffba"/><rect x="448" width="8" height="8" fill="#fffcb3"/><rect x="456" width="8" height="8" fill="#fff5aa"/><rect x="464" width="8" height="8" fill="#ffeea1"/><rect x="472" width="8" height="8" fill="#ffe798"/><rect x="480" width="8" height="8" fill="#ffe18f"/><rect x="488" width="8" height="8" fill="#ffda86"/><rect x="496" width="8" height="8" fill="#ffd37d"/><rect x="504" width="8" height="8" fill="#ffcd74"/><rect x="512" width="8" height="8" fill="#ffc76b"/><rect x="520" width="8" height="8" fill="#ffc163"/><rect x="528" width="8" height="8" fill="#ffbb5b"/><rect x="536" width="8" height="8" fill="#ffb553"/><rect x="544" width="8" height="8" fill="#ffb04a"/><rect x="552" width="8" height="8" fill="#ffab42"/><rect x="560" width="8" height="8" fill="#ffa639"/><rect x="568" width="8" height="8" fill="#ffa130"/><rect x="576" width="8" height="8" fill="#ff9d25"/><rect x="584" width="8" height="8" fill="#ff9917"/><rect x="592" width="8" height="8" fill="#ff9502"/><rect x="600" width="8" height="8" fill="#ff9201"/></g><g transform="translate(0 424)"><rect x="360" width="8" height="8" fill="#c7ffdd"/><rect x="368" width="8" height="8" fill="#ceffdc"/><rect x="376" width="8" height="8" fill="#d4ffdb"/><rect x="384" width="8" height="8" fill="#daffd9"/><rect x="392" width="8" height="8" fill="#dfffd7"/><rect x="400" width="8" height="8" fill="#e4ffd5"/><rect x="408" width="8" height="8" fill="#e9ffd2"/><rect x="416" width="8" height="8" fill="#eeffcf"/><rect x="424" width="8" height="8" fill="#f4ffcb"/><rect x="432" width="8" height="8" fill="#faffc7"/><rect x="440" width="8" height="8" fill="#fffec2"/><rect x="448" width="8" height="8" fill="#fff7b9"/><rect x="456" width="8" height="8" fill="#fff0b0"/><rect x="464" width="8" height="8" fill="#ffe9a7"/><rect x="472" width="8" height="8" fill="#ffe29e"/><rect x="480" width="8" height="8" fill="#ffdc95"/><rect x="488" width="8" height="8" fill="#ffd58c"/><rect x="496" width="8" height="8" fill="#ffce84"/><rect x="504" width="8" height="8" fill="#ffc87b"/><rect x="512" width="8" height="8" fill="#ffc273"/><rect x="520" width="8" height="8" fill="#ffbc6b"/><rect x="528" width="8" height="8" fill="#ffb663"/><rect x="536" width="8" height="8" fill="#ffb05b"/><rect x="544" width="8" height="8" fill="#ffab53"/><rect x="552" width="8" height="8" fill="#ffa64b"/><rect x="560" width="8" height="8" fill="#ffa144"/><rect x="568" width="8" height="8" fill="#ff9c3c"/><rect x="576" width="8" height="8" fill="#ff9833"/><rect x="584" width="8" height="8" fill="#ff932a"/><rect x="592" width="8" height="8" fill="#ff8f1f"/><rect x="600" width="8" height="8" fill="#ff8b0f"/><rect x="608" width="8" height="8" fill="#ff8801"/></g><g transform="translate(0 432)"><rect x="352" width="8" height="8" fill="#c8ffe3"/><rect x="360" width="8" height="8" fill="#d0ffe3"/><rect x="368" width="8" height="8" fill="#d6ffe3"/><rect x="376" width="8" height="8" fill="#dcffe2"/><rect x="384" width="8" height="8" fill="#e1ffe0"/><rect x="392" width="8" height="8" fill="#e5ffdf"/><rect x="400" width="8" height="8" fill="#eaffdc"/><rect x="408" width="8" height="8" fill="#eeffda"/><rect x="416" width="8" height="8" fill="#f3ffd7"/><rect x="424" width="8" height="8" fill="#f9ffd3"/><rect x="432" width="8" height="8" fill="#ffffd0"/><rect x="440" width="8" height="8" fill="#fff9c7"/><rect x="448" width="8" height="8" fill="#fff2bf"/><rect x="456" width="8" height="8" fill="#ffebb6"/><rect x="464" width="8" height="8" fill="#ffe5ad"/><rect x="472" width="8" height="8" fill="#ffdea4"/><rect x="480" width="8" height="8" fill="#ffd79b"/><rect x="488" width="8" height="8" fill="#ffd092"/><rect x="496" width="8" height="8" fill="#ffca8a"/><rect x="504" width="8" height="8" fill="#ffc381"/><rect x="512" width="8" height="8" fill="#ffbd79"/><rect x="520" width="8" height="8" fill="#ffb771"/><rect x="528" width="8" height="8" fill="#ffb16a"/><rect x="536" width="8" height="8" fill="#ffab62"/><rect x="544" width="8" height="8" fill="#ffa65b"/><rect x="552" width="8" height="8" fill="#ffa154"/><rect x="560" width="8" height="8" fill="#ff9c4c"/><rect x="568" width="8" height="8" fill="#ff9745"/><rect x="576" width="8" height="8" fill="#ff923e"/><rect x="584" width="8" height="8" fill="#ff8e36"/><rect x="592" width="8" height="8" fill="#ff8a2e"/><rect x="600" width="8" height="8" fill="#ff8625"/><rect x="608" width="8" height="8" fill="#ff8219"/><rect x="616" width="8" height="8" fill="#ff7e07"/></g><g transform="translate(0 440)"><rect x="344" width="8" height="8" fill="#c8ffe9"/><rect x="352" width="8" height="8" fill="#d1ffe9"/><rect x="360" width="8" height="8" fill="#d8ffe9"/><rect x="368" width="8" height="8" fill="#ddffe9"/><rect x="376" width="8" height="8" fill="#e2ffe8"/><rect x="384" width="8" height="8" fill="#e6ffe7"/><rect x="392" width="8" height="8" fill="#ebffe5"/><rect x="400" width="8" height="8" fill="#efffe3"/><rect x="408" width="8" height="8" fill="#f3ffe1"/><rect x="416" width="8" height="8" fill="#f8ffde"/><rect x="424" width="8" height="8" fill="#feffdb"/><rect x="432" width="8" height="8" fill="#fffad4"/><rect x="440" width="8" height="8" fill="#fff4cc"/><rect x="448" width="8" height="8" fill="#ffeec4"/><rect x="456" width="8" height="8" fill="#ffe7bb"/><rect x="464" width="8" height="8" fill="#ffe0b2"/><rect x="472" width="8" height="8" fill="#ffd9a9"/><rect x="480" width="8" height="8" fill="#ffd2a1"/><rect x="488" width="8" height="8" fill="#ffcc98"/><rect x="496" width="8" height="8" fill="#ffc58f"/><rect x="504" width="8" height="8" fill="#ffbe87"/><rect x="512" width="8" height="8" fill="#ffb87f"/><rect x="520" width="8" height="8" fill="#ffb277"/><rect x="528" width="8" height="8" fill="#ffac70"/><rect x="536" width="8" height="8" fill="#ffa669"/><rect x="544" width="8" height="8" fill="#ffa061"/><rect x="552" width="8" height="8" fill="#ff9b5b"/><rect x="560" width="8" height="8" fill="#ff9654"/><rect x="568" width="8" height="8" fill="#ff924d"/><rect x="576" width="8" height="8" fill="#ff8d47"/><rect x="584" width="8" height="8" fill="#ff8940"/><rect x="592" width="8" height="8" fill="#ff8439"/><rect x="600" width="8" height="8" fill="#ff8032"/><rect x="608" width="8" height="8" fill="#ff7c29"/><rect x="616" width="8" height="8" fill="#ff7820"/><rect x="624" width="8" height="8" fill="#ff7514"/><rect x="632" width="8" height="8" fill="#ff7100"/></g><g transform="translate(0 448)"><rect x="344" width="8" height="8" fill="#d0ffee"/><rect x="352" width="8" height="8" fill="#d8ffee"/><rect x="360" width="8" height="8" fill="#deffee"/><rect x="368" width="8" height="8" fill="#e3ffee"/><rect x="376" width="8" height="8" fill="#e8ffed"/><rect x="384" width="8" height="8" fill="#ecffec"/><rect x="392" width="8" height="8" fill="#f0ffeb"/><rect x="400" width="8" height="8" fill="#f4ffe9"/><rect x="408" width="8" height="8" fill="#f8ffe7"/><rect x="416" width="8" height="8" fill="#fdffe5"/><rect x="424" width="8" height="8" fill="#fffcdf"/><rect x="432" width="8" height="8" fill="#fff6d8"/><rect x="440" width="8" height="8" fill="#fff0d0"/><rect x="448" width="8" height="8" fill="#ffe9c8"/><rect x="456" width="8" height="8" fill="#ffe3bf"/><rect x="464" width="8" height="8" fill="#ffdcb7"/><rect x="472" width="8" height="8" fill="#ffd5ae"/><rect x="480" width="8" height="8" fill="#ffcea5"/><rect x="488" width="8" height="8" fill="#ffc79d"/><rect x="496" width="8" height="8" fill="#ffc094"/><rect x="504" width="8" height="8" fill="#ffb98c"/><rect x="512" width="8" height="8" fill="#ffb384"/><rect x="520" width="8" height="8" fill="#ffac7d"/><rect x="528" width="8" height="8" fill="#ffa675"/><rect x="536" width="8" height="8" fill="#ffa16e"/><rect x="544" width="8" height="8" fill="#ff9b67"/><rect x="552" width="8" height="8" fill="#ff9661"/><rect x="560" width="8" height="8" fill="#ff915a"/><rect x="568" width="8" height="8" fill="#ff8c54"/><rect x="576" width="8" height="8" fill="#ff874e"/><rect x="584" width="8" height="8" fill="#ff8348"/><rect x="592" width="8" height="8" fill="#ff7f42"/><rect x="600" width="8" height="8" fill="#ff7b3b"/><rect x="608" width="8" height="8" fill="#ff7734"/><rect x="616" width="8" height="8" fill="#ff732d"/><rect x="624" width="8" height="8" fill="#ff6f25"/><rect x="632" width="8" height="8" fill="#ff6b1b"/><rect x="640" width="8" height="8" fill="#ff670d"/></g><g transform="translate(0 456)"><rect x="336" width="8" height="8" fill="#cefff2"/><rect x="344" width="8" height="8" fill="#d7fff2"/><rect x="352" width="8" height="8" fill="#dffff3"/><rect x="360" width="8" height="8" fill="#e4fff3"/><rect x="368" width="8" height="8" fill="#e9fff2"/><rect x="376" width="8" height="8" fill="#edfff2"/><rect x="384" width="8" height="8" fill="#f0fff1"/><rect x="392" width="8" height="8" fill="#f4fff0"/><rect x="400" width="8" height="8" fill="#f8ffee"/><rect x="408" width="8" height="8" fill="#fcffed"/><rect x="416" width="8" height="8" fill="#fffde9"/><rect x="424" width="8" height="8" fill="#fff8e2"/><rect x="432" width="8" height="8" fill="#fff2db"/><rect x="440" width="8" height="8" fill="#ffecd4"/><rect x="448" width="8" height="8" fill="#ffe5cc"/><rect x="456" width="8" height="8" fill="#ffdfc3"/><rect x="464" width="8" height="8" fill="#ffd8bb"/><rect x="472" width="8" height="8" fill="#ffd0b2"/><rect x="480" width="8" height="8" fill="#ffc9aa"/><rect x="488" width="8" height="8" fill="#ffc2a1"/><rect x="496" width="8" height="8" fill="#ffbb99"/><rect x="504" width="8" height="8" fill="#ffb491"/><rect x="512" width="8" height="8" fill="#ffae89"/><rect x="520" width="8" height="8" fill="#ffa782"/><rect x="528" width="8" height="8" fill="#ffa17a"/><rect x="536" width="8" height="8" fill="#ff9b74"/><rect x="544" width="8" height="8" fill="#ff966d"/><rect x="552" width="8" height="8" fill="#ff9067"/><rect x="560" width="8" height="8" fill="#ff8b60"/><rect x="568" width="8" height="8" fill="#ff865a"/><rect x="576" width="8" height="8" fill="#ff8255"/><rect x="584" width="8" height="8" fill="#ff7d4f"/><rect x="592" width="8" height="8" fill="#ff7949"/><rect x="600" width="8" height="8" fill="#ff7543"/><rect x="608" width="8" height="8" fill="#ff703d"/><rect x="616" width="8" height="8" fill="#ff6d37"/><rect x="624" width="8" height="8" fill="#ff6930"/><rect x="632" width="8" height="8" fill="#ff6529"/><rect x="640" width="8" height="8" fill="#ff6121"/><rect x="648" width="8" height="8" fill="#ff5d17"/><rect x="656" width="8" height="8" fill="#ff5a06"/></g><g transform="translate(0 464)"><rect x="336" width="8" height="8" fill="#d5fff6"/><rect x="344" width="8" height="8" fill="#ddfff6"/><rect x="352" width="8" height="8" fill="#e4fff6"/><rect x="360" width="8" height="8" fill="#e9fff6"/><rect x="368" width="8" height="8" fill="#edfff6"/><rect x="376" width="8" height="8" fill="#f1fff6"/><rect x="384" width="8" height="8" fill="#f4fff5"/><rect x="392" width="8" height="8" fill="#f8fff4"/><rect x="400" width="8" height="8" fill="#fcfff3"/><rect x="408" width="8" height="8" fill="#fffef1"/><rect x="416" width="8" height="8" fill="#fff9eb"/><rect x="424" width="8" height="8" fill="#fff4e5"/><rect x="432" width="8" height="8" fill="#ffeede"/><rect x="440" width="8" height="8" fill="#ffe8d7"/><rect x="448" width="8" height="8" fill="#ffe1cf"/><rect x="456" width="8" height="8" fill="#ffdac7"/><rect x="464" width="8" height="8" fill="#ffd3be"/><rect x="472" width="8" height="8" fill="#ffccb6"/><rect x="480" width="8" height="8" fill="#ffc5ae"/><rect x="488" width="8" height="8" fill="#ffbda5"/><rect x="496" width="8" height="8" fill="#ffb69d"/><rect x="504" width="8" height="8" fill="#ffaf95"/><rect x="512" width="8" height="8" fill="#ffa88e"/><rect x="520" width="8" height="8" fill="#ffa286"/><rect x="528" width="8" height="8" fill="#ff9c7f"/><rect x="536" width="8" height="8" fill="#ff9678"/><rect x="544" width="8" height="8" fill="#ff9072"/><rect x="552" width="8" height="8" fill="#ff8a6c"/><rect x="560" width="8" height="8" fill="#ff8566"/><rect x="568" width="8" height="8" fill="#ff8060"/><rect x="576" width="8" height="8" fill="#ff7b5a"/><rect x="584" width="8" height="8" fill="#ff7755"/><rect x="592" width="8" height="8" fill="#ff734f"/><rect x="600" width="8" height="8" fill="#ff6e4a"/><rect x="608" width="8" height="8" fill="#ff6a45"/><rect x="616" width="8" height="8" fill="#ff663f"/><rect x="624" width="8" height="8" fill="#ff6239"/><rect x="632" width="8" height="8" fill="#ff5e33"/><rect x="640" width="8" height="8" fill="#ff5a2d"/><rect x="648" width="8" height="8" fill="#ff5625"/><rect x="656" width="8" height="8" fill="#ff521d"/><rect x="664" width="8" height="8" fill="#ff4f12"/></g><g transform="translate(0 472)"><rect x="328" width="8" height="8" fill="#d1fff9"/><rect x="336" width="8" height="8" fill="#dbfff9"/><rect x="344" width="8" height="8" fill="#e2fff9"/><rect x="352" width="8" height="8" fill="#e8fffa"/><rect x="360" width="8" height="8" fill="#edfffa"/><rect x="368" width="8" height="8" fill="#f1fffa"/><rect x="376" width="8" height="8" fill="#f4fff9"/><rect x="384" width="8" height="8" fill="#f8fff9"/><rect x="392" width="8" height="8" fill="#fbfff8"/><rect x="400" width="8" height="8" fill="#fffff7"/><rect x="408" width="8" height="8" fill="#fffaf2"/><rect x="416" width="8" height="8" fill="#fff6ed"/><rect x="424" width="8" height="8" fill="#fff0e7"/><rect x="432" width="8" height="8" fill="#ffebe0"/><rect x="440" width="8" height="8" fill="#ffe4d9"/><rect x="448" width="8" height="8" fill="#ffddd2"/><rect x="456" width="8" height="8" fill="#ffd6ca"/><rect x="464" width="8" height="8" fill="#ffcfc2"/><rect x="472" width="8" height="8" fill="#ffc8b9"/><rect x="480" width="8" height="8" fill="#ffc0b1"/><rect x="488" width="8" height="8" fill="#ffb9a9"/><rect x="496" width="8" height="8" fill="#ffb1a1"/><rect x="504" width="8" height="8" fill="#ffaa99"/><rect x="512" width="8" height="8" fill="#ffa391"/><rect x="520" width="8" height="8" fill="#ff9c8a"/><rect x="528" width="8" height="8" fill="#ff9683"/><rect x="536" width="8" height="8" fill="#ff907d"/><rect x="544" width="8" height="8" fill="#ff8a76"/><rect x="552" width="8" height="8" fill="#ff8470"/><rect x="560" width="8" height="8" fill="#ff7f6a"/><rect x="568" width="8" height="8" fill="#ff7a65"/><rect x="576" width="8" height="8" fill="#ff755f"/><rect x="584" width="8" height="8" fill="#ff705a"/><rect x="592" width="8" height="8" fill="#ff6c55"/><rect x="600" width="8" height="8" fill="#ff6850"/><rect x="608" width="8" height="8" fill="#ff634b"/><rect x="616" width="8" height="8" fill="#ff5f46"/><rect x="624" width="8" height="8" fill="#ff5b41"/><rect x="632" width="8" height="8" fill="#ff573b"/><rect x="640" width="8" height="8" fill="#ff5336"/><rect x="648" width="8" height="8" fill="#ff4f30"/><rect x="656" width="8" height="8" fill="#ff4b29"/></g><g transform="translate(0 480)"><rect x="328" width="8" height="8" fill="#d6fffc"/><rect x="336" width="8" height="8" fill="#dffffc"/><rect x="344" width="8" height="8" fill="#e7fffc"/><rect x="352" width="8" height="8" fill="#ecfffc"/><rect x="360" width="8" height="8" fill="#f0fffc"/><rect x="368" width="8" height="8" fill="#f4fffc"/><rect x="376" width="8" height="8" fill="#f7fffc"/><rect x="384" width="8" height="8" fill="#fbfffc"/><rect x="392" width="8" height="8" fill="#fefffc"/><rect x="400" width="8" height="8" fill="#fffcf8"/><rect x="408" width="8" height="8" fill="#fff7f3"/><rect x="416" width="8" height="8" fill="#fff2ee"/><rect x="424" width="8" height="8" fill="#ffede8"/><rect x="432" width="8" height="8" fill="#ffe7e2"/><rect x="440" width="8" height="8" fill="#ffe0db"/><rect x="448" width="8" height="8" fill="#ffd9d4"/><rect x="456" width="8" height="8" fill="#ffd2cc"/><rect x="464" width="8" height="8" fill="#ffcbc4"/><rect x="472" width="8" height="8" fill="#ffc3bc"/><rect x="480" width="8" height="8" fill="#ffbbb4"/><rect x="488" width="8" height="8" fill="#ffb3ac"/><rect x="496" width="8" height="8" fill="#ffaca4"/><rect x="504" width="8" height="8" fill="#ffa59c"/><rect x="512" width="8" height="8" fill="#ff9d95"/><rect x="520" width="8" height="8" fill="#ff968e"/><rect x="528" width="8" height="8" fill="#ff9087"/><rect x="536" width="8" height="8" fill="#ff8a81"/><rect x="544" width="8" height="8" fill="#ff847a"/><rect x="552" width="8" height="8" fill="#ff7e74"/><rect x="560" width="8" height="8" fill="#ff796f"/><rect x="568" width="8" height="8" fill="#ff7369"/><rect x="576" width="8" height="8" fill="#ff6e64"/><rect x="584" width="8" height="8" fill="#ff6a5f"/><rect x="592" width="8" height="8" fill="#ff655a"/><rect x="600" width="8" height="8" fill="#ff6155"/><rect x="608" width="8" height="8" fill="#ff5c51"/><rect x="616" width="8" height="8" fill="#ff584c"/><rect x="624" width="8" height="8" fill="#ff5347"/><rect x="632" width="8" height="8" fill="#ff4f42"/><rect x="640" width="8" height="8" fill="#ff4b3d"/></g><g transform="translate(0 488)"><rect x="320" width="8" height="8" fill="#ceffff"/><rect x="328" width="8" height="8" fill="#daffff"/><rect x="336" width="8" height="8" fill="#e3ffff"/><rect x="344" width="8" height="8" fill="#eaffff"/><rect x="352" width="8" height="8" fill="#efffff"/><rect x="360" width="8" height="8" fill="#f3ffff"/><rect x="368" width="8" height="8" fill="#f7ffff"/><rect x="376" width="8" height="8" fill="#faffff"/><rect x="384" width="8" height="8" fill="#feffff"/><rect x="392" width="8" height="8" fill="#fffdfd"/><rect x="400" width="8" height="8" fill="#fff9f9"/><rect x="408" width="8" height="8" fill="#fff4f4"/><rect x="416" width="8" height="8" fill="#ffefef"/><rect x="424" width="8" height="8" fill="#ffe9ea"/><rect x="432" width="8" height="8" fill="#ffe3e4"/><rect x="440" width="8" height="8" fill="#ffdcdd"/><rect x="448" width="8" height="8" fill="#ffd5d6"/><rect x="456" width="8" height="8" fill="#ffcece"/><rect x="464" width="8" height="8" fill="#ffc6c6"/><rect x="472" width="8" height="8" fill="#ffbebf"/><rect x="480" width="8" height="8" fill="#ffb6b7"/><rect x="488" width="8" height="8" fill="#ffaeaf"/><rect x="496" width="8" height="8" fill="#ffa6a7"/><rect x="504" width="8" height="8" fill="#ff9fa0"/><rect x="512" width="8" height="8" fill="#ff9798"/><rect x="520" width="8" height="8" fill="#ff9091"/><rect x="528" width="8" height="8" fill="#ff8a8b"/><rect x="536" width="8" height="8" fill="#ff8384"/><rect x="544" width="8" height="8" fill="#ff7d7e"/><rect x="552" width="8" height="8" fill="#ff7778"/><rect x="560" width="8" height="8" fill="#ff7273"/><rect x="568" width="8" height="8" fill="#ff6c6e"/><rect x="576" width="8" height="8" fill="#ff6769"/><rect x="584" width="8" height="8" fill="#ff6264"/><rect x="592" width="8" height="8" fill="#ff5e5f"/><rect x="600" width="8" height="8" fill="#ff595a"/><rect x="608" width="8" height="8" fill="#ff5456"/><rect x="616" width="8" height="8" fill="#ff5051"/></g><g transform="translate(0 496)"><rect x="320" width="8" height="8" fill="#d0fbff"/><rect x="328" width="8" height="8" fill="#dbfcff"/><rect x="336" width="8" height="8" fill="#e4fcff"/><rect x="344" width="8" height="8" fill="#eafcff"/><rect x="352" width="8" height="8" fill="#effcff"/><rect x="360" width="8" height="8" fill="#f3fcff"/><rect x="368" width="8" height="8" fill="#f7fcff"/><rect x="376" width="8" height="8" fill="#fafcff"/><rect x="384" width="8" height="8" fill="#fdfcff"/><rect x="392" width="8" height="8" fill="#fffafd"/><rect x="400" width="8" height="8" fill="#fff5f9"/><rect x="408" width="8" height="8" fill="#fff1f5"/><rect x="416" width="8" height="8" fill="#ffecf0"/><rect x="424" width="8" height="8" fill="#ffe6eb"/><rect x="432" width="8" height="8" fill="#ffdfe5"/><rect x="440" width="8" height="8" fill="#ffd8de"/><rect x="448" width="8" height="8" fill="#ffd1d7"/><rect x="456" width="8" height="8" fill="#ffc9d0"/><rect x="464" width="8" height="8" fill="#ffc1c8"/><rect x="472" width="8" height="8" fill="#ffb9c1"/><rect x="480" width="8" height="8" fill="#ffb0b9"/><rect x="488" width="8" height="8" fill="#ffa8b1"/><rect x="496" width="8" height="8" fill="#ffa0aa"/><rect x="504" width="8" height="8" fill="#ff99a2"/><rect x="512" width="8" height="8" fill="#ff919b"/><rect x="520" width="8" height="8" fill="#ff8a94"/><rect x="528" width="8" height="8" fill="#ff838e"/><rect x="536" width="8" height="8" fill="#ff7c88"/><rect x="544" width="8" height="8" fill="#ff7682"/><rect x="552" width="8" height="8" fill="#ff707c"/><rect x="560" width="8" height="8" fill="#ff6a77"/><rect x="568" width="8" height="8" fill="#ff6571"/><rect x="576" width="8" height="8" fill="#ff606d"/><rect x="584" width="8" height="8" fill="#ff5a68"/><rect x="592" width="8" height="8" fill="#ff5563"/><rect x="600" width="8" height="8" fill="#ff505f"/></g><g transform="translate(0 504)"><rect x="312" width="8" height="8" fill="#c4f7ff"/><rect x="320" width="8" height="8" fill="#d1f8ff"/><rect x="328" width="8" height="8" fill="#dcf9ff"/><rect x="336" width="8" height="8" fill="#e4f9ff"/><rect x="344" width="8" height="8" fill="#eaf9ff"/><rect x="352" width="8" height="8" fill="#eff9ff"/><rect x="360" width="8" height="8" fill="#f3faff"/><rect x="368" width="8" height="8" fill="#f7f9ff"/><rect x="376" width="8" height="8" fill="#faf9ff"/><rect x="384" width="8" height="8" fill="#fdf9ff"/><rect x="392" width="8" height="8" fill="#fff6fd"/><rect x="400" width="8" height="8" fill="#fff2fa"/><rect x="408" width="8" height="8" fill="#ffedf5"/><rect x="416" width="8" height="8" fill="#ffe8f1"/><rect x="424" width="8" height="8" fill="#ffe1eb"/><rect x="432" width="8" height="8" fill="#ffdbe5"/><rect x="440" width="8" height="8" fill="#ffd3df"/><rect x="448" width="8" height="8" fill="#ffccd8"/><rect x="456" width="8" height="8" fill="#ffc4d1"/><rect x="464" width="8" height="8" fill="#ffbbca"/><rect x="472" width="8" height="8" fill="#ffb3c2"/><rect x="480" width="8" height="8" fill="#ffaabb"/><rect x="488" width="8" height="8" fill="#ffa2b3"/><rect x="496" width="8" height="8" fill="#ff9aac"/><rect x="504" width="8" height="8" fill="#ff92a5"/><rect x="512" width="8" height="8" fill="#ff8a9e"/><rect x="520" width="8" height="8" fill="#ff8397"/><rect x="528" width="8" height="8" fill="#ff7c91"/><rect x="536" width="8" height="8" fill="#ff758b"/><rect x="544" width="8" height="8" fill="#ff6f85"/><rect x="552" width="8" height="8" fill="#ff687f"/><rect x="560" width="8" height="8" fill="#ff627a"/><rect x="568" width="8" height="8" fill="#ff5d75"/><rect x="576" width="8" height="8" fill="#ff5770"/><rect x="584" width="8" height="8" fill="#ff526c"/></g><g transform="translate(0 512)"><rect x="304" width="8" height="8" fill="#b3f3ff"/><rect x="312" width="8" height="8" fill="#c5f4ff"/><rect x="320" width="8" height="8" fill="#d2f4ff"/><rect x="328" width="8" height="8" fill="#dcf5ff"/><rect x="336" width="8" height="8" fill="#e4f6ff"/><rect x="344" width="8" height="8" fill="#eaf6ff"/><rect x="352" width="8" height="8" fill="#eff6ff"/><rect x="360" width="8" height="8" fill="#f3f6ff"/><rect x="368" width="8" height="8" fill="#f6f6ff"/><rect x="376" width="8" height="8" fill="#faf6ff"/><rect x="384" width="8" height="8" fill="#fdf5ff"/><rect x="392" width="8" height="8" fill="#fff3fe"/><rect x="400" width="8" height="8" fill="#ffeefa"/><rect x="408" width="8" height="8" fill="#ffe9f5"/><rect x="416" width="8" height="8" fill="#ffe3f1"/><rect x="424" width="8" height="8" fill="#ffddec"/><rect x="432" width="8" height="8" fill="#ffd6e6"/><rect x="440" width="8" height="8" fill="#ffcee0"/><rect x="448" width="8" height="8" fill="#ffc6d9"/><rect x="456" width="8" height="8" fill="#ffbed2"/><rect x="464" width="8" height="8" fill="#ffb5cb"/><rect x="472" width="8" height="8" fill="#ffadc4"/><rect x="480" width="8" height="8" fill="#ffa4bc"/><rect x="488" width="8" height="8" fill="#ff9bb5"/><rect x="496" width="8" height="8" fill="#ff93ae"/><rect x="504" width="8" height="8" fill="#ff8ba7"/><rect x="512" width="8" height="8" fill="#ff83a0"/><rect x="520" width="8" height="8" fill="#ff7b99"/><rect x="528" width="8" height="8" fill="#ff7493"/><rect x="536" width="8" height="8" fill="#ff6d8d"/><rect x="544" width="8" height="8" fill="#ff6688"/><rect x="552" width="8" height="8" fill="#ff6082"/><rect x="560" width="8" height="8" fill="#ff5a7d"/></g><g transform="translate(0 520)"><rect x="304" width="8" height="8" fill="#b5eeff"/><rect x="312" width="8" height="8" fill="#c5efff"/><rect x="320" width="8" height="8" fill="#d1f0ff"/><rect x="328" width="8" height="8" fill="#dbf1ff"/><rect x="336" width="8" height="8" fill="#e3f2ff"/><rect x="344" width="8" height="8" fill="#e9f2ff"/><rect x="352" width="8" height="8" fill="#eef3ff"/><rect x="360" width="8" height="8" fill="#f2f3ff"/><rect x="368" width="8" height="8" fill="#f6f2ff"/><rect x="376" width="8" height="8" fill="#f9f2ff"/><rect x="384" width="8" height="8" fill="#fdf1ff"/><rect x="392" width="8" height="8" fill="#ffeefe"/><rect x="400" width="8" height="8" fill="#ffeafa"/><rect x="408" width="8" height="8" fill="#ffe4f6"/><rect x="416" width="8" height="8" fill="#ffdef1"/><rect x="424" width="8" height="8" fill="#ffd7ec"/><rect x="432" width="8" height="8" fill="#ffd0e6"/><rect x="440" width="8" height="8" fill="#ffc8e0"/><rect x="448" width="8" height="8" fill="#ffc0d9"/><rect x="456" width="8" height="8" fill="#ffb7d3"/><rect x="464" width="8" height="8" fill="#ffaecc"/><rect x="472" width="8" height="8" fill="#ffa5c5"/><rect x="480" width="8" height="8" fill="#ff9dbd"/><rect x="488" width="8" height="8" fill="#ff94b6"/><rect x="496" width="8" height="8" fill="#ff8baf"/><rect x="504" width="8" height="8" fill="#ff83a9"/><rect x="512" width="8" height="8" fill="#ff7ba2"/><rect x="520" width="8" height="8" fill="#ff739c"/><rect x="528" width="8" height="8" fill="#ff6b96"/><rect x="536" width="8" height="8" fill="#ff6490"/><rect x="544" width="8" height="8" fill="#ff5d8a"/></g><g transform="translate(0 528)"><rect x="296" width="8" height="8" fill="#a1e8ff"/><rect x="304" width="8" height="8" fill="#b5e9ff"/><rect x="312" width="8" height="8" fill="#c4eaff"/><rect x="320" width="8" height="8" fill="#d0ecff"/><rect x="328" width="8" height="8" fill="#daedff"/><rect x="336" width="8" height="8" fill="#e1edff"/><rect x="344" width="8" height="8" fill="#e8eeff"/><rect x="352" width="8" height="8" fill="#edeeff"/><rect x="360" width="8" height="8" fill="#f1eeff"/><rect x="368" width="8" height="8" fill="#f5eeff"/><rect x="376" width="8" height="8" fill="#f9edff"/><rect x="384" width="8" height="8" fill="#fcecff"/><rect x="392" width="8" height="8" fill="#ffe9fe"/><rect x="400" width="8" height="8" fill="#ffe4fa"/><rect x="408" width="8" height="8" fill="#ffdef5"/><rect x="416" width="8" height="8" fill="#ffd8f1"/><rect x="424" width="8" height="8" fill="#ffd1ec"/><rect x="432" width="8" height="8" fill="#ffc9e6"/><rect x="440" width="8" height="8" fill="#ffc1e0"/><rect x="448" width="8" height="8" fill="#ffb9da"/><rect x="456" width="8" height="8" fill="#ffb0d3"/><rect x="464" width="8" height="8" fill="#ffa7cc"/><rect x="472" width="8" height="8" fill="#ff9ec5"/><rect x="480" width="8" height="8" fill="#ff95be"/><rect x="488" width="8" height="8" fill="#ff8cb8"/><rect x="496" width="8" height="8" fill="#ff83b1"/><rect x="504" width="8" height="8" fill="#ff7aaa"/><rect x="512" width="8" height="8" fill="#ff72a4"/><rect x="520" width="8" height="8" fill="#ff6a9e"/><rect x="528" width="8" height="8" fill="#ff6298"/></g><g transform="translate(0 536)"><rect x="296" width="8" height="8" fill="#a2e2ff"/><rect x="304" width="8" height="8" fill="#b4e3ff"/><rect x="312" width="8" height="8" fill="#c3e5ff"/><rect x="320" width="8" height="8" fill="#cee6ff"/><rect x="328" width="8" height="8" fill="#d8e7ff"/><rect x="336" width="8" height="8" fill="#e0e8ff"/><rect x="344" width="8" height="8" fill="#e6e9ff"/><rect x="352" width="8" height="8" fill="#ebe9ff"/><rect x="360" width="8" height="8" fill="#f0e9ff"/><rect x="368" width="8" height="8" fill="#f4e8ff"/><rect x="376" width="8" height="8" fill="#f8e7ff"/><rect x="384" width="8" height="8" fill="#fce6ff"/><rect x="392" width="8" height="8" fill="#ffe3fe"/><rect x="400" width="8" height="8" fill="#ffdefa"/><rect x="408" width="8" height="8" fill="#ffd8f5"/><rect x="416" width="8" height="8" fill="#ffd1f1"/><rect x="424" width="8" height="8" fill="#ffcaeb"/><rect x="432" width="8" height="8" fill="#ffc2e6"/><rect x="440" width="8" height="8" fill="#ffb9e0"/><rect x="448" width="8" height="8" fill="#ffb1da"/><rect x="456" width="8" height="8" fill="#ffa8d3"/><rect x="464" width="8" height="8" fill="#ff9ecd"/><rect x="472" width="8" height="8" fill="#ff95c6"/><rect x="480" width="8" height="8" fill="#ff8cbf"/><rect x="488" width="8" height="8" fill="#ff82b9"/><rect x="496" width="8" height="8" fill="#ff79b2"/><rect x="504" width="8" height="8" fill="#ff71ac"/><rect x="512" width="8" height="8" fill="#ff68a6"/></g><g transform="translate(0 544)"><rect x="288" width="8" height="8" fill="#8bdaff"/><rect x="296" width="8" height="8" fill="#a2dcff"/><rect x="304" width="8" height="8" fill="#b3ddff"/><rect x="312" width="8" height="8" fill="#c1dfff"/><rect x="320" width="8" height="8" fill="#cce0ff"/><rect x="328" width="8" height="8" fill="#d6e1ff"/><rect x="336" width="8" height="8" fill="#dee2ff"/><rect x="344" width="8" height="8" fill="#e4e3ff"/><rect x="352" width="8" height="8" fill="#eae3ff"/><rect x="360" width="8" height="8" fill="#efe3ff"/><rect x="368" width="8" height="8" fill="#f3e2ff"/><rect x="376" width="8" height="8" fill="#f7e1ff"/><rect x="384" width="8" height="8" fill="#fbdfff"/><rect x="392" width="8" height="8" fill="#ffdcfe"/><rect x="400" width="8" height="8" fill="#ffd6fa"/><rect x="408" width="8" height="8" fill="#ffd0f5"/><rect x="416" width="8" height="8" fill="#ffc9f0"/><rect x="424" width="8" height="8" fill="#ffc1eb"/><rect x="432" width="8" height="8" fill="#ffb9e6"/><rect x="440" width="8" height="8" fill="#ffb0e0"/><rect x="448" width="8" height="8" fill="#ffa7da"/><rect x="456" width="8" height="8" fill="#ff9ed3"/><rect x="464" width="8" height="8" fill="#ff95cd"/><rect x="472" width="8" height="8" fill="#ff8bc6"/><rect x="480" width="8" height="8" fill="#ff82c0"/><rect x="488" width="8" height="8" fill="#ff78b9"/></g><g transform="translate(0 552)"><rect x="288" width="8" height="8" fill="#8dd3ff"/><rect x="296" width="8" height="8" fill="#a1d5ff"/><rect x="304" width="8" height="8" fill="#b2d6ff"/><rect x="312" width="8" height="8" fill="#bfd8ff"/><rect x="320" width="8" height="8" fill="#cad9ff"/><rect x="328" width="8" height="8" fill="#d3daff"/><rect x="336" width="8" height="8" fill="#dbdbff"/><rect x="344" width="8" height="8" fill="#e2dbff"/><rect x="352" width="8" height="8" fill="#e8dbff"/><rect x="360" width="8" height="8" fill="#eddbff"/><rect x="368" width="8" height="8" fill="#f2daff"/><rect x="376" width="8" height="8" fill="#f6d9ff"/><rect x="384" width="8" height="8" fill="#fbd7ff"/><rect x="392" width="8" height="8" fill="#ffd4ff"/><rect x="400" width="8" height="8" fill="#ffcefa"/><rect x="408" width="8" height="8" fill="#ffc7f5"/><rect x="416" width="8" height="8" fill="#ffc0f0"/><rect x="424" width="8" height="8" fill="#ffb8eb"/><rect x="432" width="8" height="8" fill="#ffafe5"/><rect x="440" width="8" height="8" fill="#ffa6df"/><rect x="448" width="8" height="8" fill="#ff9dd9"/><rect x="456" width="8" height="8" fill="#ff94d3"/><rect x="464" width="8" height="8" fill="#ff8acd"/><rect x="472" width="8" height="8" fill="#ff80c7"/></g><g transform="translate(0 560)"><rect x="280" width="8" height="8" fill="#73caff"/><rect x="288" width="8" height="8" fill="#8dccff"/><rect x="296" width="8" height="8" fill="#a1cdff"/><rect x="304" width="8" height="8" fill="#b0ceff"/><rect x="312" width="8" height="8" fill="#bdd0ff"/><rect x="320" width="8" height="8" fill="#c8d1ff"/><rect x="328" width="8" height="8" fill="#d1d2ff"/><rect x="336" width="8" height="8" fill="#d9d3ff"/><rect x="344" width="8" height="8" fill="#e0d3ff"/><rect x="352" width="8" height="8" fill="#e6d3ff"/><rect x="360" width="8" height="8" fill="#ecd2ff"/><rect x="368" width="8" height="8" fill="#f1d1ff"/><rect x="376" width="8" height="8" fill="#f5d0ff"/><rect x="384" width="8" height="8" fill="#facdff"/><rect x="392" width="8" height="8" fill="#ffcaff"/><rect x="400" width="8" height="8" fill="#ffc4fa"/><rect x="408" width="8" height="8" fill="#ffbdf5"/><rect x="416" width="8" height="8" fill="#ffb5f0"/><rect x="424" width="8" height="8" fill="#ffadea"/><rect x="432" width="8" height="8" fill="#ffa4e5"/><rect x="440" width="8" height="8" fill="#ff9bdf"/><rect x="448" width="8" height="8" fill="#ff92d9"/><rect x="456" width="8" height="8" fill="#ff88d3"/></g><g transform="translate(0 568)"><rect x="272" width="8" height="8" fill="#4cc1ff"/><rect x="280" width="8" height="8" fill="#76c2ff"/><rect x="288" width="8" height="8" fill="#8ec3ff"/><rect x="296" width="8" height="8" fill="#a0c5ff"/><rect x="304" width="8" height="8" fill="#aec6ff"/><rect x="312" width="8" height="8" fill="#bbc7ff"/><rect x="320" width="8" height="8" fill="#c6c8ff"/><rect x="328" width="8" height="8" fill="#cfc9ff"/><rect x="336" width="8" height="8" fill="#d7caff"/><rect x="344" width="8" height="8" fill="#decaff"/><rect x="352" width="8" height="8" fill="#e4c9ff"/><rect x="360" width="8" height="8" fill="#eac9ff"/><rect x="368" width="8" height="8" fill="#efc7ff"/><rect x="376" width="8" height="8" fill="#f5c5ff"/><rect x="384" width="8" height="8" fill="#fac3ff"/><rect x="392" width="8" height="8" fill="#ffbfff"/><rect x="400" width="8" height="8" fill="#ffb9fa"/><rect x="408" width="8" height="8" fill="#ffb1f5"/><rect x="416" width="8" height="8" fill="#ffa9ef"/><rect x="424" width="8" height="8" fill="#ffa1ea"/><rect x="432" width="8" height="8" fill="#ff98e5"/></g><g transform="translate(0 576)"><rect x="272" width="8" height="8" fill="#59b9ff"/><rect x="280" width="8" height="8" fill="#79baff"/><rect x="288" width="8" height="8" fill="#8ebbff"/><rect x="296" width="8" height="8" fill="#9fbcff"/><rect x="304" width="8" height="8" fill="#adbdff"/><rect x="312" width="8" height="8" fill="#b9beff"/><rect x="320" width="8" height="8" fill="#c3bfff"/><rect x="328" width="8" height="8" fill="#cdbfff"/><rect x="336" width="8" height="8" fill="#d5bfff"/><rect x="344" width="8" height="8" fill="#dcbfff"/><rect x="352" width="8" height="8" fill="#e3bfff"/><rect x="360" width="8" height="8" fill="#e9beff"/><rect x="368" width="8" height="8" fill="#eebcff"/><rect x="376" width="8" height="8" fill="#f4b9ff"/><rect x="384" width="8" height="8" fill="#f9b7ff"/><rect x="392" width="8" height="8" fill="#feb3ff"/><rect x="400" width="8" height="8" fill="#ffacfa"/><rect x="408" width="8" height="8" fill="#ffa4f5"/><rect x="416" width="8" height="8" fill="#ff9cef"/></g><g transform="translate(0 584)"><rect x="264" width="8" height="8" fill="#2ab0ff"/><rect x="272" width="8" height="8" fill="#60b0ff"/><rect x="280" width="8" height="8" fill="#7ab1ff"/><rect x="288" width="8" height="8" fill="#8eb1ff"/><rect x="296" width="8" height="8" fill="#9eb2ff"/><rect x="304" width="8" height="8" fill="#abb3ff"/><rect x="312" width="8" height="8" fill="#b7b4ff"/><rect x="320" width="8" height="8" fill="#c1b4ff"/><rect x="328" width="8" height="8" fill="#cab4ff"/><rect x="336" width="8" height="8" fill="#d3b4ff"/><rect x="344" width="8" height="8" fill="#dab4ff"/><rect x="352" width="8" height="8" fill="#e1b3ff"/><rect x="360" width="8" height="8" fill="#e7b1ff"/><rect x="368" width="8" height="8" fill="#edafff"/><rect x="376" width="8" height="8" fill="#f3acff"/><rect x="384" width="8" height="8" fill="#f8a9ff"/><rect x="392" width="8" height="8" fill="#fea5ff"/><rect x="400" width="8" height="8" fill="#ff9dfa"/></g><g transform="translate(0 592)"><rect x="264" width="8" height="8" fill="#3ea6ff"/><rect x="272" width="8" height="8" fill="#65a7ff"/><rect x="280" width="8" height="8" fill="#7ca7ff"/><rect x="288" width="8" height="8" fill="#8ea7ff"/><rect x="296" width="8" height="8" fill="#9da8ff"/><rect x="304" width="8" height="8" fill="#aaa8ff"/><rect x="312" width="8" height="8" fill="#b5a9ff"/><rect x="320" width="8" height="8" fill="#bfa9ff"/><rect x="328" width="8" height="8" fill="#c8a8ff"/><rect x="336" width="8" height="8" fill="#d1a8ff"/><rect x="344" width="8" height="8" fill="#d8a7ff"/><rect x="352" width="8" height="8" fill="#dfa6ff"/><rect x="360" width="8" height="8" fill="#e6a4ff"/><rect x="368" width="8" height="8" fill="#eca1ff"/><rect x="376" width="8" height="8" fill="#f29eff"/></g><g transform="translate(0 600)"><rect x="256" width="8" height="8" fill="#1c9fff"/><rect x="264" width="8" height="8" fill="#4a9dff"/><rect x="272" width="8" height="8" fill="#689dff"/><rect x="280" width="8" height="8" fill="#7d9dff"/><rect x="288" width="8" height="8" fill="#8e9dff"/><rect x="296" width="8" height="8" fill="#9c9dff"/><rect x="304" width="8" height="8" fill="#a89dff"/><rect x="312" width="8" height="8" fill="#b49dff"/><rect x="320" width="8" height="8" fill="#be9cff"/><rect x="328" width="8" height="8" fill="#c79cff"/><rect x="336" width="8" height="8" fill="#cf9bff"/><rect x="344" width="8" height="8" fill="#d799ff"/><rect x="352" width="8" height="8" fill="#de97ff"/><rect x="360" width="8" height="8" fill="#e494ff"/></g><g transform="translate(0 608)"><rect x="256" width="8" height="8" fill="#1994ff"/><rect x="264" width="8" height="8" fill="#5293ff"/><rect x="272" width="8" height="8" fill="#6b93ff"/><rect x="280" width="8" height="8" fill="#7e92ff"/><rect x="288" width="8" height="8" fill="#8e92ff"/><rect x="296" width="8" height="8" fill="#9b91ff"/><rect x="304" width="8" height="8" fill="#a791ff"/><rect x="312" width="8" height="8" fill="#b290ff"/><rect x="320" width="8" height="8" fill="#bc8fff"/><rect x="328" width="8" height="8" fill="#c58eff"/><rect x="336" width="8" height="8" fill="#cd8cff"/><rect x="344" width="8" height="8" fill="#d58aff"/></g><g transform="translate(0 616)"><rect x="248" width="8" height="8" fill="#1290ff"/><rect x="256" width="8" height="8" fill="#358aff"/><rect x="264" width="8" height="8" fill="#5889ff"/><rect x="272" width="8" height="8" fill="#6e88ff"/><rect x="280" width="8" height="8" fill="#7f87ff"/><rect x="288" width="8" height="8" fill="#8e86ff"/><rect x="296" width="8" height="8" fill="#9b85ff"/><rect x="304" width="8" height="8" fill="#a784ff"/><rect x="312" width="8" height="8" fill="#b182ff"/><rect x="320" width="8" height="8" fill="#bb81ff"/></g><g transform="translate(0 624)"><rect x="248" width="8" height="8" fill="#0f83ff"/><rect x="256" width="8" height="8" fill="#417fff"/><rect x="264" width="8" height="8" fill="#5c7eff"/><rect x="272" width="8" height="8" fill="#707cff"/><rect x="280" width="8" height="8" fill="#807bff"/><rect x="288" width="8" height="8" fill="#8f79ff"/><rect x="296" width="8" height="8" fill="#9b77ff"/><rect x="304" width="8" height="8" fill="#a675ff"/></g><g transform="translate(0 632)"><rect x="240" width="8" height="8" fill="#0b81ff"/><rect x="248" width="8" height="8" fill="#1b76ff"/><rect x="256" width="8" height="8" fill="#4974ff"/><rect x="264" width="8" height="8" fill="#6172ff"/><rect x="272" width="8" height="8" fill="#7370ff"/><rect x="280" width="8" height="8" fill="#826eff"/><rect x="288" width="8" height="8" fill="#8f6bff"/></g><g transform="translate(0 640)"><rect x="232" width="8" height="8" fill="#087fff"/><rect x="240" width="8" height="8" fill="#0973ff"/><rect x="248" width="8" height="8" fill="#306bff"/><rect x="256" width="8" height="8" fill="#4f68ff"/><rect x="264" width="8" height="8" fill="#6465ff"/><rect x="272" width="8" height="8" fill="#7563ff"/></g><g transform="translate(0 648)"><rect x="232" width="8" height="8" fill="#0672ff"/><rect x="240" width="8" height="8" fill="#0764ff"/><rect x="248" width="8" height="8" fill="#3b5eff"/></g><g transform="translate(0 656)"><rect x="224" width="8" height="8" fill="#0471ff"/><rect x="232" width="8" height="8" fill="#0564ff"/></g></g>
<path d="M392.5 33V772M10 491.5H897" stroke="#c8c8c8" stroke-opacity="0.6" stroke-width="1" stroke-dasharray="4 2" stroke-dashoffset="2"/>
</g>
<path d="M240.0 724.0C238.2 722.9 232.9 720.1 229.4 717.5C225.9 714.9 222.5 713.1 218.8 708.3C215.1 703.5 210.4 694.1 207.2 688.6C203.9 683.1 202.1 679.8 199.3 675.1C196.5 670.4 193.4 666.1 190.4 660.5C187.4 654.9 184.8 648.2 181.4 641.5C178.0 634.8 173.6 626.6 170.2 620.2C166.8 613.9 163.6 608.9 161.2 603.4C158.8 597.9 158.2 594.3 155.6 587.1C152.9 579.9 150.0 572.4 145.3 560.0C140.6 547.6 131.6 524.6 127.5 513.0C123.4 501.4 124.5 502.9 120.8 490.6C117.1 478.3 108.7 452.4 105.1 439.0C101.5 425.6 101.2 422.3 99.0 410.0C96.8 397.7 93.7 378.3 92.0 365.0C90.3 351.7 89.8 342.2 89.0 330.0C88.2 317.8 87.6 303.7 87.3 292.0C87.0 280.3 86.8 272.0 87.0 260.0C87.2 248.0 87.9 229.3 88.4 220.0C88.9 210.7 89.1 210.2 90.0 204.0C90.9 197.8 92.5 189.6 94.0 182.8C95.5 176.0 97.3 168.1 99.0 163.0C100.7 157.9 102.2 155.3 104.0 152.0C105.8 148.7 107.0 146.2 110.0 143.0C113.0 139.8 117.9 136.0 121.9 133.0C125.9 130.0 129.4 127.5 133.9 125.0C138.4 122.5 143.8 119.9 148.8 118.0C153.8 116.1 159.8 114.3 163.8 113.5C167.8 112.7 169.5 113.1 173.0 113.2C176.5 113.3 180.8 113.2 185.0 114.0C189.2 114.8 192.8 116.1 198.1 117.8C203.4 119.5 210.7 121.9 216.9 124.4C223.2 126.9 228.4 129.7 235.6 132.8C242.8 135.9 252.2 139.2 260.0 143.1C267.8 147.0 275.6 152.1 282.5 156.2C289.4 160.3 294.5 163.4 301.2 167.5C307.9 171.6 316.3 176.5 322.8 180.6C329.3 184.7 330.7 185.5 340.0 191.8C349.3 198.1 359.0 204.4 378.8 218.5C398.6 232.6 442.3 264.5 458.8 276.4C475.3 288.3 462.0 278.2 478.0 290.0C494.0 301.8 531.2 329.2 555.0 347.0C578.8 364.8 599.3 380.9 620.5 397.0C641.7 413.1 660.1 427.6 682.0 443.7C703.9 459.8 732.6 479.4 751.7 493.8C770.8 508.2 789.0 524.0 796.5 530.0Z" fill="none" stroke="#ffc048" stroke-opacity="0.8" stroke-width="1.3"/>
<line x1="176" y1="112.8" x2="194.5" y2="82.5" stroke="#d0d0d0" stroke-width="1" /><text x="195.6" y="90.5" font-family="Liberation Serif" font-size="13" fill="#cfcfcf" >520 nm</text><line x1="323.7" y1="180" x2="342" y2="149.5" stroke="#d0d0d0" stroke-width="1" /><text x="343" y="157.5" font-family="Liberation Serif" font-size="13" fill="#cfcfcf" >540 nm</text><line x1="458.7" y1="277.5" x2="476.5" y2="249.5" stroke="#d0d0d0" stroke-width="1" /><text x="477.4" y="254" font-family="Liberation Serif" font-size="13" fill="#cfcfcf" >560 nm</text><line x1="554.6" y1="348" x2="572.5" y2="317" stroke="#d0d0d0" stroke-width="1" /><text x="573.3" y="325" font-family="Liberation Serif" font-size="13" fill="#cfcfcf" >580 nm</text><line x1="620.5" y1="397.4" x2="639" y2="368.5" stroke="#d0d0d0" stroke-width="1" /><text x="639.8" y="375.5" font-family="Liberation Serif" font-size="13" fill="#cfcfcf" >600 nm</text><line x1="682.3" y1="443.7" x2="700.8" y2="414.7" stroke="#d0d0d0" stroke-width="1" /><text x="701.6" y="422" font-family="Liberation Serif" font-size="13" fill="#cfcfcf" >620 nm</text><line x1="750" y1="493.5" x2="767.7" y2="463.5" stroke="#d0d0d0" stroke-width="1" /><text x="768.5" y="471.5" font-family="Liberation Serif" font-size="13" fill="#cfcfcf" >640 nm</text><line x1="779" y1="516.7" x2="797.7" y2="486.7" stroke="#d0d0d0" stroke-width="1" /><text x="798.5" y="493" font-family="Liberation Serif" font-size="13" fill="#cfcfcf" >660 nm</text><line x1="792.3" y1="525.6" x2="809.5" y2="496.4" stroke="#d0d0d0" stroke-width="1" /><text x="810" y="501.5" font-family="Liberation Serif" font-size="13" fill="#cfcfcf" >680 nm</text><line x1="87.3" y1="298.2" x2="68.6" y2="305.5" stroke="#d0d0d0" stroke-width="1" /><text x="36.8" y="318" font-family="Liberation Serif" font-size="13" fill="#cfcfcf" >500 nm</text><line x1="162.6" y1="605" x2="144.5" y2="611.8" stroke="#d0d0d0" stroke-width="1" /><text x="111.7" y="624.5" font-family="Liberation Serif" font-size="13" fill="#cfcfcf" >480 nm</text><line x1="205.6" y1="688" x2="187.7" y2="694.9" stroke="#d0d0d0" stroke-width="1" /><text x="155.5" y="707.8" font-family="Liberation Serif" font-size="13" fill="#cfcfcf" >460 nm</text><line x1="219.4" y1="708.3" x2="200.6" y2="715.2" stroke="#d0d0d0" stroke-width="1" /><text x="169.3" y="727.6" font-family="Liberation Serif" font-size="13" fill="#cfcfcf" >440 nm</text><line x1="229.4" y1="716.7" x2="212" y2="723.7" stroke="#d0d0d0" stroke-width="1" /><text x="179.8" y="737.5" font-family="Liberation Serif" font-size="13" fill="#cfcfcf" >420 nm</text>
<rect x="381" y="756" width="20" height="16" fill="#02070a"/>
<text x="184" y="768" font-family="Liberation Serif" font-size="13" fill="#cfcfcf" >0.1</text><text x="283" y="768" font-family="Liberation Serif" font-size="13" fill="#cfcfcf" >0.2</text><text x="381" y="768" font-family="Liberation Serif" font-size="13" fill="#cfcfcf" >0.3</text><text x="480" y="768" font-family="Liberation Serif" font-size="13" fill="#cfcfcf" >0.4</text><text x="578" y="768" font-family="Liberation Serif" font-size="13" fill="#cfcfcf" >0.5</text><text x="677" y="768" font-family="Liberation Serif" font-size="13" fill="#cfcfcf" >0.6</text><text x="775" y="768" font-family="Liberation Serif" font-size="13" fill="#cfcfcf" >0.7</text><text x="12" y="657" font-family="Liberation Serif" font-size="13" fill="#cfcfcf" >0.1</text><text x="12" y="583" font-family="Liberation Serif" font-size="13" fill="#cfcfcf" >0.2</text><text x="12" y="509" font-family="Liberation Serif" font-size="13" fill="#cfcfcf" >0.3</text><text x="12" y="435" font-family="Liberation Serif" font-size="13" fill="#cfcfcf" >0.4</text><text x="12" y="361" font-family="Liberation Serif" font-size="13" fill="#cfcfcf" >0.5</text><text x="12" y="287" font-family="Liberation Serif" font-size="13" fill="#cfcfcf" >0.6</text><text x="12" y="213" font-family="Liberation Serif" font-size="13" fill="#cfcfcf" >0.7</text><text x="12" y="139" font-family="Liberation Serif" font-size="13" fill="#cfcfcf" >0.8</text>
<g stroke-width="3" stroke-linecap="round" stroke-opacity="0.9"><line x1="378.2" y1="290.4" x2="713.8" y2="490.2" stroke="url(#lgr)" stroke-width="3" /><line x1="230.5" y1="688.8" x2="378.2" y2="290.4" stroke="url(#lbg)" stroke-width="3" /><line x1="713.8" y1="490.2" x2="230.5" y2="688.8" stroke="url(#lrb)" stroke-width="3" /></g>
<path d="M432.8 313.5L367.8 593.4M657 468.2L327 501.8M245.4 646.4L514 367.8" stroke="#000" stroke-opacity="0.6" stroke-width="1" stroke-dasharray="3 3"/>
<path d="M432.8 313.5L657.0 468.2L245.4 646.4Z" fill="none" stroke="#fafaf4" stroke-width="3.2" stroke-linejoin="round"/>
<path d="M378.2 284.9L383.7 290.4L378.2 295.9L372.7 290.4Z" fill="#c8f0c8" stroke="#0a5a0a" stroke-width="1.2"/><path d="M375.7 290.4h5M378.2 287.9v5" stroke="#101010" stroke-width="1.2"/>
<path d="M713.8 484.7L719.3 490.2L713.8 495.7L708.3 490.2Z" fill="#e8a0b0" stroke="#f4e0e4" stroke-width="1.2"/><path d="M711.3 490.2h5M713.8 487.7v5" stroke="#fff" stroke-width="1.2"/>
<path d="M230.5 683.3L236 688.8L230.5 694.3L225 688.8Z" fill="#a0a0f0" stroke="#e0e0ff" stroke-width="1.2"/><path d="M228 688.8h5M230.5 686.3v5" stroke="#fff" stroke-width="1.2"/>
<path d="M304.2 485.7L309.7 491.2L304.2 496.7L298.7 491.2Z" fill="#a8f0f0" stroke="#0a4a4a" stroke-width="1.2"/><path d="M301.7 491.2h5M304.2 488.7v5" stroke="#101010" stroke-width="1.2"/>
<path d="M496.6 354.6L502.1 360.1L496.6 365.6L491.1 360.1Z" fill="#f0f0c0" stroke="#4a4a10" stroke-width="1.2"/><path d="M494.1 360.1h5M496.6 357.6v5" stroke="#101010" stroke-width="1.2"/>
<path d="M399 614.3L404.5 619.8L399 625.3L393.5 619.8Z" fill="#f0c0f0" stroke="#5a205a" stroke-width="1.2"/><path d="M396.5 619.8h5M399 617.3v5" stroke="#101010" stroke-width="1.2"/>
<path d="M329.3 553.5C332.4 550.2 341.9 540.1 348.0 534.0C354.1 527.9 359.0 523.2 366.0 516.9C373.0 510.6 382.2 502.2 390.0 496.0C397.8 489.8 405.3 484.9 413.0 479.8C420.7 474.7 427.9 470.2 436.0 465.5C444.1 460.8 452.9 455.8 461.6 451.6C470.3 447.4 479.0 443.8 488.0 440.5C497.0 437.2 507.4 434.1 515.8 431.8C524.2 429.5 533.2 427.5 538.3 426.5C543.4 425.5 544.9 425.9 546.2 425.8" fill="none" stroke="#000" stroke-width="1.8"/>
<circle cx="366" cy="516.9" r="2.7" fill="#fff" stroke="#000" stroke-width="1.2"/>
<circle cx="413" cy="479.8" r="2.7" fill="#fff" stroke="#000" stroke-width="1.2"/>
<circle cx="461.6" cy="451.6" r="2.7" fill="#fff" stroke="#000" stroke-width="1.2"/>
<circle cx="515.8" cy="431.8" r="2.7" fill="#fff" stroke="#000" stroke-width="1.2"/>
<circle cx="538.3" cy="426.5" r="2.7" fill="#fff" stroke="#000" stroke-width="1.2"/>
<text x="336.6" y="510.5" font-family="Liberation Serif" font-size="13" fill="#0c0c0c" stroke="#0c0c0c" stroke-width="0.25">9300</text>
<text x="383.6" y="473.9" font-family="Liberation Serif" font-size="13" fill="#0c0c0c" stroke="#0c0c0c" stroke-width="0.25">5500</text>
<text x="431" y="446" font-family="Liberation Serif" font-size="13" fill="#0c0c0c" stroke="#0c0c0c" stroke-width="0.25">4000</text>
<text x="490.7" y="426" font-family="Liberation Serif" font-size="13" fill="#0c0c0c" stroke="#0c0c0c" stroke-width="0.25">3000</text>
<text x="537" y="421.5" font-family="Liberation Serif" font-size="13" fill="#0c0c0c" stroke="#0c0c0c" stroke-width="0.25">2700</text>
<text x="359.8" y="492.8" font-family="Liberation Serif" font-size="13" fill="#0c0c0c" stroke="#0c0c0c" stroke-width="0.25">D65</text>
<text x="393.5" y="516.2" font-family="Liberation Serif" font-size="13" fill="#0c0c0c" stroke="#0c0c0c" stroke-width="0.25">C</text>
<text x="432.5" y="490.2" font-family="Liberation Serif" font-size="13" fill="#0c0c0c" stroke="#0c0c0c" stroke-width="0.25">B</text>
<text x="523" y="449.5" font-family="Liberation Serif" font-size="13" fill="#0c0c0c" stroke="#0c0c0c" stroke-width="0.25">A</text>
<circle cx="434.3" cy="315" r="7" fill="#000" fill-opacity="0.45" filter="url(#sh)"/><circle cx="432.8" cy="313.5" r="6" fill="#22ea3a" stroke="#0a7a10" stroke-width="1.8"/>
<circle cx="658.5" cy="469.7" r="6.8" fill="#000" fill-opacity="0.45" filter="url(#sh)"/><circle cx="657" cy="468.2" r="5.8" fill="#ff1a28" stroke="#801010" stroke-width="1.8"/>
<circle cx="246.9" cy="647.9" r="6.8" fill="#000" fill-opacity="0.45" filter="url(#sh)"/><circle cx="245.4" cy="646.4" r="5.8" fill="#3434e4" stroke="#16168a" stroke-width="1.8"/>
<circle cx="328.5" cy="503.3" r="7" fill="#000" fill-opacity="0.45" filter="url(#sh)"/><circle cx="327" cy="501.8" r="6" fill="#70e8e8" stroke="#207878" stroke-width="1.8"/><circle cx="327" cy="502.8" r="1.2" fill="#000"/>
<circle cx="515.5" cy="369.3" r="6.5" fill="#000" fill-opacity="0.45" filter="url(#sh)"/><circle cx="514" cy="367.8" r="5.5" fill="#f0f0c8" stroke="#707030" stroke-width="1.8"/><circle cx="514" cy="368.8" r="1.2" fill="#000"/>
<circle cx="369.3" cy="594.9" r="7" fill="#000" fill-opacity="0.45" filter="url(#sh)"/><circle cx="367.8" cy="593.4" r="6" fill="#e030c8" stroke="#900090" stroke-width="1.8"/>
<circle cx="392.2" cy="492.4" r="7" fill="#101010"/><circle cx="390.4" cy="494.5" r="4.8" fill="#f0e010" stroke="#605800" stroke-width=".8"/>
<circle cx="384.2" cy="504.3" r="5" fill="#fff" stroke="#404040" stroke-width="1.2"/>
<circle cx="426.8" cy="474.8" r="3" fill="#30c040" stroke="#105010" stroke-width="1"/>
<circle cx="524.3" cy="433" r="3" fill="#30c040" stroke="#105010" stroke-width="1"/>
<rect x="8" y="772" width="891" height="3" fill="#fbfbfb"/>
<rect x="8" y="775" width="891" height="18" fill="#efeded"/>
<rect x="8" y="775" width="891" height="1" fill="#000"/>
<rect x="8.5" y="775.5" width="53" height="17.5" fill="#f2f0f0" stroke="#000" stroke-width="1"/>
<rect x="24" y="776" width="2" height="17" fill="#6c6c6c"/><rect x="41" y="776" width="2" height="17" fill="#6c6c6c"/><rect x="58" y="776" width="3" height="17" fill="#8c8c8c"/>
<path d="M14.5 781.5L21.5 787.5M21.5 781.5L14.5 787.5" stroke="#000" stroke-width="1.8"/>
<path d="M36 781L32 784.5L36 788Z" fill="#000"/><path d="M50 781L54 784.5L50 788Z" fill="#000"/>
<path d="M63 776L71.5 793L120.5 793L129 776Z" fill="#efeded" stroke="none"/>
<path d="M63.3 776L71.5 793M120.5 793L129 776" stroke="#000" stroke-width="1.1"/>
<path d="M120 776L128.5 793L189.5 793L198 776Z" fill="#efeded" stroke="none"/>
<path d="M120.3 776L128.5 793M189.5 793L198 776" stroke="#000" stroke-width="1.1"/>
<path d="M189 776L197.5 793L241.5 793L250 776Z" fill="#efeded" stroke="none"/>
<path d="M189.3 776L197.5 793M241.5 793L250 776" stroke="#000" stroke-width="1.1"/>
<path d="M241 776L249.5 793L323 793L331.5 776Z" fill="#efeded" stroke="none"/>
<path d="M241.3 776L249.5 793M323 793L331.5 776" stroke="#000" stroke-width="1.1"/>
<path d="M322.5 776L331 793L454.5 793L463 776Z" fill="#efeded" stroke="none"/>
<path d="M322.8 776L331 793M454.5 793L463 776" stroke="#000" stroke-width="1.1"/>
<text x="77.8" y="788" font-family="Liberation Sans" font-size="9.5" fill="#000" stroke="#000" stroke-width="0.15" textLength="35.9" lengthAdjust="spacingAndGlyphs">Mesures</text>
<text x="136" y="788" font-family="Liberation Sans" font-size="9.5" fill="#000" stroke="#000" stroke-width="0.15" textLength="44.6" lengthAdjust="spacingAndGlyphs">Luminance</text>
<text x="202.5" y="788" font-family="Liberation Sans" font-size="9.5" fill="#000" stroke="#000" stroke-width="0.15" textLength="32.6" lengthAdjust="spacingAndGlyphs">Gamma</text>
<text x="257.3" y="788" font-family="Liberation Sans" font-size="9.5" fill="#000" stroke="#000" stroke-width="0.15" textLength="56.5" lengthAdjust="spacingAndGlyphs">Niveaux RVB</text>
<text x="345.5" y="788" font-family="Liberation Sans" font-size="9.5" fill="#000" stroke="#000" stroke-width="0.15" textLength="95.5" lengthAdjust="spacingAndGlyphs">Température de couleur</text>
<path d="M454.5 775L463 793L548 793L557 775Z" fill="#fcfcfc"/>
<path d="M454.8 776L462.8 793M548.3 793L557 776" stroke="#000" stroke-width="1.1"/>
<rect x="455" y="775" width="102" height="1" fill="#fcfcfc"/>
<text x="466.8" y="788" font-family="Liberation Sans" font-size="9.8" fill="#000" font-weight="bold" stroke="#000" stroke-width="0.2" textLength="79" lengthAdjust="spacingAndGlyphs">Diagramme CIE</text>
<rect x="72" y="793" width="827" height="1" fill="#9ca8b4" fill-opacity="0.6"/>
<rect x="706.5" y="777.5" width="13" height="9" fill="#8a9040" stroke="#101010"/><rect x="709" y="779" width="8" height="6" fill="#d04020"/><rect x="711" y="780" width="5" height="4" fill="#f0d0a0"/>
<circle cx="710" cy="788.5" r="2.8" fill="#708030" stroke="#101010"/><circle cx="716.5" cy="788.5" r="2.8" fill="#f0f0a0" stroke="#101010"/>
<rect x="825" y="777.5" width="12" height="12" fill="#fafafa"/><path d="M825.5 789V778.5H836.5" fill="none" stroke="#7a7a7a" stroke-width="1.2"/>
<text x="844" y="788" font-family="Liberation Sans" font-size="11.5" fill="#101010" textLength="49" lengthAdjust="spacingAndGlyphs">Référence</text>
</svg></body></html>
